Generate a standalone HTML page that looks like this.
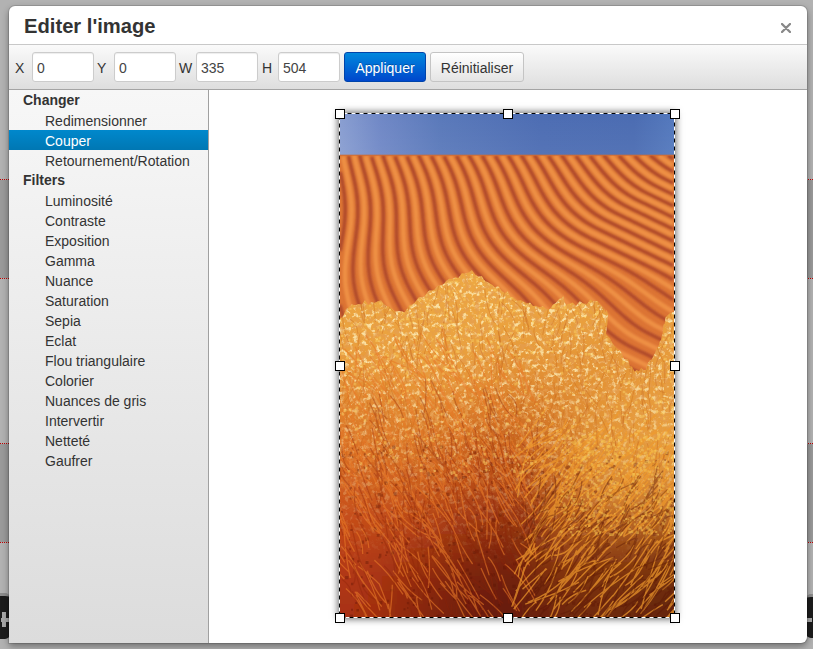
<!DOCTYPE html>
<html><head><meta charset="utf-8">
<style>
*{box-sizing:border-box;margin:0;padding:0}
html,body{width:813px;height:649px;overflow:hidden}
body{background:#b2b2b2;font-family:"Liberation Sans",sans-serif;position:relative;color:#333;-webkit-font-smoothing:antialiased}
.abs{position:absolute}
.modal{position:absolute;left:9px;top:6px;width:798px;height:637px;background:#fff;border-radius:6px 6px 6px 0;overflow:hidden;box-shadow:0 3px 7px rgba(0,0,0,0.4),0 0 0 1px rgba(0,0,0,0.12)}
.title{position:absolute;left:15px;top:8px;font-size:20.2px;font-weight:bold;color:#333;line-height:24px;letter-spacing:0}
.close{position:absolute;left:772px;top:17px;width:10px;height:10px}
.hdrline{position:absolute;left:0;top:38px;width:798px;height:1px;background:#c8c8c8}
.toolbar{position:absolute;left:0;top:39px;width:798px;height:45px;background:linear-gradient(#fafafa,#dedede);border-bottom:1px solid #a4a4a4}
.lbl{position:absolute;top:15px;font-size:14px;color:#333;line-height:16px}
.inp{position:absolute;top:7px;width:62px;height:30px;background:#fff;border:1px solid #cccccc;border-radius:3px;font-size:14px;color:#444;padding-left:4px;line-height:30px;box-shadow:inset 0 1px 1px rgba(0,0,0,0.075)}
.btn{position:absolute;top:7px;height:30px;border-radius:3px;font-size:14px;line-height:30px;text-align:center}
.bp{left:335px;width:82px;background:linear-gradient(#0088dd,#0047cc);border:1px solid #0044aa;color:#fff;text-shadow:0 -1px 0 rgba(0,0,0,0.25)}
.bd{left:421px;width:94px;background:linear-gradient(#ffffff,#e4e4e4);border:1px solid #c4c4c4;color:#333}
.side{position:absolute;left:0;top:84px;width:200px;height:553px;background:linear-gradient(#f7f7f7,#dcdcdc);border-right:1px solid #a0a0a0}
.it{position:absolute;left:0;width:199px;height:20px;font-size:14px;line-height:20px;padding-left:36px;padding-top:1px;color:#333}
.hd{position:absolute;left:14px;font-size:14px;font-weight:bold;line-height:20px;color:#333}
.sel{background:linear-gradient(#0088cc,#0077b3);color:#fff}
.crop{position:absolute;left:339px;top:113px;width:336px;height:505px;box-shadow:0 0 7px 1px rgba(0,0,0,0.6)}
.photo{position:absolute;left:340px;top:114px;width:334px;height:504px}
.photo svg{display:block}
.frame{position:absolute;left:339px;top:113px;width:336px;height:505px}
.h{position:absolute;width:10px;height:10px;background:#fff;border:1.6px solid #000}
</style></head><body>
<div class="abs" style="left:0;top:180px;width:9px;height:98px;background:#9a9a9a"></div>
<div class="abs" style="left:805px;top:180px;width:8px;height:98px;background:#9a9a9a"></div>
<div class="abs" style="left:0;top:444px;width:9px;height:98px;background:#9a9a9a"></div>
<div class="abs" style="left:805px;top:444px;width:8px;height:98px;background:#9a9a9a"></div>
<div class="abs" style="left:0;top:179px;width:9px;height:1px;border-top:1px dotted #c00000"></div>
<div class="abs" style="left:0;top:278px;width:9px;height:1px;border-top:1px dotted #c00000"></div>
<div class="abs" style="left:0;top:443px;width:9px;height:1px;border-top:1px dotted #c00000"></div>
<div class="abs" style="left:0;top:542px;width:9px;height:1px;border-top:1px dotted #c00000"></div>
<div class="abs" style="left:805px;top:179px;width:8px;height:1px;border-top:1px dotted #c00000"></div>
<div class="abs" style="left:805px;top:278px;width:8px;height:1px;border-top:1px dotted #c00000"></div>
<div class="abs" style="left:805px;top:443px;width:8px;height:1px;border-top:1px dotted #c00000"></div>
<div class="abs" style="left:805px;top:542px;width:8px;height:1px;border-top:1px dotted #c00000"></div>
<div class="abs" style="left:-30px;top:593px;width:40px;height:46px;background:#1c1c1c;border-radius:5px;border-top:3px solid #8c8c8c"></div>
<div class="abs" style="left:1px;top:618px;width:8px;height:4px;background:#a8a8a8"></div>
<div class="abs" style="left:2px;top:612px;width:4px;height:15px;background:#a8a8a8"></div>
<div class="abs" style="left:806px;top:594px;width:40px;height:44px;background:#1c1c1c;border-radius:5px;border-top:3px solid #8c8c8c"></div>
<div class="abs" style="left:806px;top:618px;width:6px;height:4px;background:#a8a8a8"></div>
<div class="modal">
  <div class="title">Editer l'image</div>
  <svg class="close" width="10" height="10" viewBox="0 0 10 10"><path d="M1 1L9 9M9 1L1 9" stroke="#888" stroke-width="2.3" stroke-linecap="round"/></svg>
  <div class="hdrline"></div>
  <div class="toolbar">
    <div class="lbl" style="left:6px">X</div>
    <div class="inp" style="left:23px">0</div>
    <div class="lbl" style="left:88px">Y</div>
    <div class="inp" style="left:105px">0</div>
    <div class="lbl" style="left:170px">W</div>
    <div class="inp" style="left:187px">335</div>
    <div class="lbl" style="left:253px">H</div>
    <div class="inp" style="left:269px">504</div>
    <div class="btn bp">Appliquer</div>
    <div class="btn bd">Réinitialiser</div>
  </div>
  <div class="side">
    <div class="hd" style="top:0px">Changer</div>
    <div class="it" style="top:20px">Redimensionner</div>
    <div class="it sel" style="top:40px">Couper</div>
    <div class="it" style="top:60px">Retournement/Rotation</div>
    <div class="hd" style="top:80px">Filters</div>
    <div class="it" style="top:100px">Luminosité</div>
    <div class="it" style="top:120px">Contraste</div>
    <div class="it" style="top:140px">Exposition</div>
    <div class="it" style="top:160px">Gamma</div>
    <div class="it" style="top:180px">Nuance</div>
    <div class="it" style="top:200px">Saturation</div>
    <div class="it" style="top:220px">Sepia</div>
    <div class="it" style="top:240px">Eclat</div>
    <div class="it" style="top:260px">Flou triangulaire</div>
    <div class="it" style="top:280px">Colorier</div>
    <div class="it" style="top:300px">Nuances de gris</div>
    <div class="it" style="top:320px">Intervertir</div>
    <div class="it" style="top:340px">Netteté</div>
    <div class="it" style="top:360px">Gaufrer</div>
  </div>
</div>
<!--PHOTO--><div class="crop"></div><div class="photo"><svg width="334" height="504" viewBox="0 0 334 504">
<defs>
<linearGradient id="sky" x1="0" y1="0" x2="1" y2="0">
<stop offset="0" stop-color="#899ed1"/><stop offset="0.12" stop-color="#7088c6"/><stop offset="0.3" stop-color="#5a79ba"/><stop offset="0.6" stop-color="#4d6db3"/><stop offset="0.88" stop-color="#4b6cb2"/><stop offset="1" stop-color="#5479bd"/></linearGradient>
<linearGradient id="skyv" x1="0" y1="0" x2="0" y2="1">
<stop offset="0" stop-color="#fff" stop-opacity="0"/><stop offset="1" stop-color="#fff" stop-opacity="0.05"/></linearGradient>
<filter id="bl" x="-5%" y="-5%" width="110%" height="110%"><feGaussianBlur stdDeviation="10"/></filter><filter id="sb"><feGaussianBlur stdDeviation="0.8"/></filter><filter id="tx1" x="0" y="0" width="100%" height="100%"><feTurbulence type="fractalNoise" baseFrequency="0.22" numOctaves="3" seed="5"/><feColorMatrix type="matrix" values="0 0 0 0 0.99  0 0 0 0 0.87  0 0 0 0 0.5  5 0 0 0 -2.55"/></filter>
<filter id="tx2" x="0" y="0" width="100%" height="100%"><feTurbulence type="fractalNoise" baseFrequency="0.2" numOctaves="3" seed="9"/><feColorMatrix type="matrix" values="0 0 0 0 0.78  0 0 0 0 0.34  0 0 0 0 0.08  5 0 0 0 -2.4"/></filter>
<linearGradient id="m1" x1="0" y1="0" x2="0" y2="1"><stop offset="0" stop-color="#fff"/><stop offset="0.5" stop-color="#fff"/><stop offset="0.75" stop-color="#fff" stop-opacity="0.3"/><stop offset="0.9" stop-color="#fff" stop-opacity="0"/></linearGradient>
<mask id="mk1"><rect width="334" height="504" fill="url(#m1)"/></mask><linearGradient id="m2" x1="0" y1="0" x2="0" y2="1"><stop offset="0" stop-color="#fff"/><stop offset="0.6" stop-color="#fff"/><stop offset="0.8" stop-color="#fff" stop-opacity="0"/></linearGradient><mask id="mk2"><rect width="334" height="504" fill="url(#m2)"/></mask>
<clipPath id="dc"><rect y="41" width="334" height="400"/></clipPath>
<clipPath id="bc"><path d="M0 504 L0 204.1 L2 203.5 L4 200.6 L6 195.2 L9 193 L12 190.2 L15.2 191.4 L18.5 189.9 L21.8 190.7 L25 186 L28.2 191.1 L31.4 188 L34.6 188.9 L37.8 187.2 L41 186.4 L43.8 189.7 L46.5 192.3 L49.2 192.7 L52 194.8 L55.3 197.8 L58.7 196.9 L62 197.6 L64.5 198.6 L67 194.9 L69.5 190.9 L72 190.7 L74.5 189 L77 185.6 L79.5 182.9 L82 183.1 L84.5 182.7 L87 179.1 L89.5 176.6 L92 176.6 L94.8 175.4 L97.5 172 L100.2 171.6 L103 170.7 L106 167.2 L109 164.7 L112 165.1 L115 163.4 L118.4 164 L121.8 159.3 L125.2 159.5 L128.6 158.5 L132 156.2 L135.2 160.7 L138.5 162.8 L141.8 162.3 L145 167.2 L147.5 168.1 L150 169.5 L152.5 170.9 L155 173.5 L158.3 171.9 L161.7 177 L165 179 L167.7 177.2 L170.3 182.6 L173 183.6 L177 186.8 L181 186.3 L184 188 L187 189.5 L190 188.6 L193 192 L196 191.8 L199.5 193.3 L203 192.2 L206.5 195.2 L210 195 L213 190.7 L216 189 L219 185 L222 183.9 L223.3 181.5 L224.7 188.4 L226 190.7 L229.3 189.8 L232.7 188.4 L236 192 L239.7 187.3 L243.3 189.6 L247 190.1 L250.5 185.4 L254 187.5 L257.3 187.2 L260.7 191.1 L264 194.4 L265.3 198.6 L266.7 195.8 L268 201.1 L267.7 206.1 L267.3 210.5 L267 211.7 L266.7 212.8 L266.3 217.5 L266 220 L268 222.3 L270 224.2 L272 228.6 L274 231.2 L276 233.2 L278 235.6 L280 236.3 L282 239.9 L284 244.9 L286 245 L288 245.4 L290 252.1 L292.2 252.8 L294.5 257.4 L296.8 256.1 L299 257.3 L301.2 253.7 L303.5 256.1 L305.8 256.1 L308 248.7 L310 246.3 L312 245.6 L314 240.7 L315.1 238.7 L316.3 235.7 L317.4 233.7 L318.6 232.3 L319.7 227.7 L320.9 226.3 L322 221.3 L322.7 219.2 L323.3 211.9 L324 209.7 L324.7 209.9 L325.3 204.4 L326 202.9 L330 198.9 L334 198 L334 504 Z"/></clipPath>
</defs>
<rect width="334" height="42" fill="url(#sky)"/><rect width="334" height="42" fill="url(#skyv)"/>
<rect y="41" width="334" height="340" fill="#dc7434"/>
<g clip-path="url(#dc)"><g filter="url(#sb)">
<path d="M6.1 399 5.8 397 5.2 394 4.9 392 4.2 389 3.8 387 3 384 2.4 382 1.9 380 1 377.1 0.3 375 M0 137 0.4 135 0.9 132 1.2 130 1.8 127 2.1 125 2.6 122 3 119.7 3.4 117 3.8 114 4.1 112 4.4 109 4.7 106 4.9 103 5 100.8 5.1 98 5.1 95 5.1 92 5 89.9 4.8 87 4.6 84 4.3 81 4 78.6 3.6 76 3.2 73 2.8 71 2.3 68 1.9 66 1.3 63 0.9 61 0.3 58 M44.1 399 43.7 397 43.1 394 42.6 392 42 389.4 41.4 387 40.8 385 40 382.5 39.2 380 38.5 378 37.8 376 37 374 36 371.5 35 369.1 34.1 367 33.2 365 32.3 363 31.4 361 30.4 359 29.5 357 28.5 355 27.5 353 26.6 351 25.6 349 24.7 347 23.7 345 22.8 343 22 341 21 338.8 20 336.3 19.1 334 18.4 332 17.7 330 17 327.8 16.2 325 15.6 323 15 320.5 14.5 318 14 315.6 13.6 313 13.2 310 13 308 12.7 305 12.5 302 12.4 299 12.4 296 12.4 293 12.5 290 12.6 287 12.7 284 12.9 281 13 278.5 13.1 276 13.3 273 13.5 270 13.6 267 13.7 264 13.8 261 13.8 258 13.7 255 13.7 252 13.5 249 13.3 246 13 243.3 12.7 241 12.3 238 12 236 11.4 233 11 230.8 10.4 228 9.9 226 9.1 223 8.6 221 8 218.8 7.2 216 6.6 214 6 212 5.1 209 4.5 207 3.9 205 3 202.1 2.4 200 1.8 198 1 195 0.5 193 0 190.8 M82.3 399 81.8 397 81 394.3 80.3 392 79.7 390 79 387.6 78.1 385 77.5 383 76.7 381 76 379 75 376.5 74 374.1 73.1 372 72.1 370 71.2 368 70.2 366 69.2 364 68.1 362 67 360 66 358.2 65 356.5 64 354.7 63 353 61.8 351 60.5 349 59.3 347 58.1 345 57 343.2 56 341.6 55 339.9 53.9 338 52.7 336 51.5 334 50.4 332 49.3 330 48.3 328 47.3 326 46.3 324 45.4 322 44.6 320 43.7 318 43 316 42 313.2 41.3 311 40.7 309 40 306.5 39.4 304 39 302 38.4 299 38 296.5 37.6 294 37.3 291 37 288 36.9 286 36.7 283 36.5 280 36.4 277 36.4 274 36.3 271 36.2 268 36.2 265 36.1 262 36 259.2 35.9 257 35.7 254 35.5 251 35.3 248 35 245.5 34.7 243 34.3 240 33.9 238 33.4 235 33 233 32.3 230 31.8 228 31 225 30.4 223 29.8 221 29 218.5 28.2 216 27.5 214 26.8 212 26 209.8 25 207.1 24.2 205 23.5 203 22.7 201 22 199 21 196.3 20.2 194 19.5 192 18.8 190 18 187.3 17.3 185 16.7 183 16 180.1 15.5 178 15 175.7 14.5 173 14 170 13.7 168 13.4 165 13.2 162 13 159 13 157 12.9 154 13 151.2 13.1 149 13.3 146 13.5 143 13.7 140 14 137.6 14.3 135 14.7 132 15 129.3 15.3 127 15.7 124 16 121.5 16.3 119 16.7 116 17 113 17.2 111 17.4 108 17.6 105 17.8 102 17.8 99 17.8 96 17.8 93 17.7 90 17.5 87 17.2 84 17 82 16.6 79 16.1 76 15.8 74 15.2 71 14.8 69 14.2 66 13.7 64 13 61 12.5 59 12 56.9 11.3 54 10.8 52 10.1 49 9.7 47 9 44 8.6 42 M122.1 399 121.2 397 120.4 395 119.7 393 118.9 391 118 388.9 117 386.4 116 384 115.2 382 114.3 380 113.4 378 112.5 376 111.6 374 110.6 372 109.6 370 108.6 368 107.5 366 106.4 364 105.2 362 104 360 103 358.3 102 356.7 100.9 355 99.5 353 98.2 351 97 349.4 96 348 94.6 346 93.1 344 92 342.5 90.9 341 89.3 339 88 337.2 87 335.9 85.6 334 84.1 332 83 330.6 81.9 329 80.4 327 79 325 78 323.5 77 322 75.7 320 74.5 318 73.3 316 72.1 314 71.1 312 70 310 69.1 308 68.1 306 67.3 304 66.5 302 65.7 300 65 297.9 64.1 295 63.5 293 63 291 62.2 288 61.8 286 61.2 283 60.9 281 60.4 278 60 275 59.8 273 59.4 270 59.1 267 58.9 265 58.6 262 58.4 259 58.1 256 57.9 254 57.5 251 57.1 248 56.9 246 56.4 243 56 240.5 55.5 238 55 235.4 54.5 233 54 231 53.2 228 52.6 226 52 224 51 221 50.3 219 49.6 217 48.9 215 48 212.7 47 210.3 46.1 208 45.2 206 44.3 204 43.4 202 42.6 200 41.7 198 40.8 196 39.9 194 39 191.9 38 189.5 37 187.1 36.2 185 35.4 183 34.6 181 33.9 179 33 176.1 32.3 174 31.8 172 31 169 30.5 167 30 164.4 29.6 162 29.1 159 28.9 157 28.6 154 28.3 151 28.2 148 28.2 145 28.2 142 28.2 139 28.3 136 28.5 133 28.7 130 28.9 127 29.1 125 29.3 122 29.6 119 29.8 116 30 113.6 30.2 111 30.3 108 30.5 105 30.6 102 30.6 99 30.6 96 30.5 93 30.3 90 30.1 87 29.9 85 29.5 82 29.1 79 28.7 77 28.2 74 27.8 72 27.1 69 26.7 67 26 64.3 25.4 62 24.9 60 24 57 23.5 55 22.9 53 22.1 50 21.5 48 21 46 20.2 43 19.6 41 M165.3 399 164 397.1 163 395.5 162 393.8 160.9 392 159.8 390 158.6 388 157.5 386 156.4 384 155.3 382 154.2 380 153.2 378 152.1 376 151 374.1 150 372.3 149 370.5 148 368.8 146.9 367 145.7 365 144.5 363 143.2 361 142 359.2 141 357.7 139.8 356 138.4 354 137 352.1 136 350.7 134.6 349 133.1 347 132 345.7 130.6 344 129 342.1 128 341 126.3 339 125 337.6 123.6 336 122 334.3 120.9 333 119 331 118 329.9 116.2 328 115 326.6 113.5 325 112 323.3 110.8 322 109 320 108 318.8 106.5 317 105 315.2 104 314 102.5 312 101 310.1 100 308.7 98.8 307 97.5 305 96.2 303 95 301.1 94 299.3 93 297.5 92 295.6 91 293.5 90 291.4 89 289 88.2 287 87.5 285 86.8 283 86 280.6 85.2 278 84.7 276 84 273.2 83.5 271 83 268.8 82.4 266 82 263.7 81.5 261 81 258 80.7 256 80.1 253 79.8 251 79.3 248 78.9 246 78.3 243 77.9 241 77.3 238 76.8 236 76.1 233 75.6 231 75 229 74.1 226 73.4 224 72.8 222 72 219.9 71 217.3 70.1 215 69.3 213 68.4 211 67.5 209 66.6 207 65.6 205 64.6 203 63.6 201 62.6 199 61.6 197 60.5 195 59.5 193 58.5 191 57.5 189 56.4 187 55.5 185 54.5 183 53.5 181 52.6 179 51.7 177 50.9 175 50 172.8 49 170.2 48.2 168 47.6 166 46.9 164 46.1 161 45.6 159 45 156.3 44.5 154 44 151 43.7 149 43.4 146 43.1 143 43 141 42.8 138 42.7 135 42.7 132 42.7 129 42.8 126 42.9 123 43 120 43 118 43.1 115 43.2 112 43.3 109 43.4 106 43.4 103 43.4 100 43.3 97 43.2 94 43 91 42.9 89 42.6 86 42.2 83 41.9 81 41.4 78 41 75.7 40.5 73 40 71 39.3 68 38.8 66 38 63.2 37.4 61 36.8 59 36 56.5 35.2 54 34.6 52 33.9 50 33 47.2 32.3 45 31.7 43 M215.6 399 214 397.6 212.2 396 211 394.8 209.2 393 208 391.8 206.3 390 205 388.5 203.7 387 202 385 201 383.8 199.6 382 198 380 197 378.6 195.8 377 194.3 375 193 373.2 192 371.8 190.7 370 189.3 368 188 366.2 187 364.8 185.7 363 184.3 361 183 359.3 182 357.9 180.5 356 179 354 178 352.8 176.6 351 175 349.1 174 347.9 172.3 346 171 344.5 169.6 343 168 341.3 166.8 340 165 338.2 163.8 337 162 335.2 160.8 334 159 332.3 157.6 331 156 329.5 154.3 328 153 326.8 151 325 149.9 324 148 322.3 146.5 321 145 319.6 143.2 318 142 316.9 140 315.1 138.8 314 137 312.3 135.7 311 134 309.4 132.6 308 131 306.3 129.7 305 128 303.1 127 302 125.3 300 124 298.4 122.9 297 121.3 295 120 293.2 119 291.7 117.9 290 116.6 288 115.4 286 114.3 284 113.2 282 112.3 280 111.3 278 110.4 276 109.6 274 108.8 272 108 269.7 107.1 267 106.4 265 105.8 263 105 260.1 104.4 258 103.9 256 103.1 253 102.7 251 102 248.3 101.4 246 100.9 244 100.2 241 99.7 239 99 236.5 98.3 234 97.7 232 97 229.6 96.2 227 95.5 225 94.8 223 94 220.9 93 218.4 92 216 91.1 214 90.2 212 89.3 210 88.3 208 87.3 206 86.3 204 85.2 202 84.1 200 83 198.1 82 196.4 81 194.6 80 192.9 78.9 191 77.7 189 76.5 187 75.3 185 74.1 183 73 181 72 179.3 71 177.4 70 175.6 69 173.7 68 171.7 67 169.7 66 167.5 65 165.2 64.1 163 63.3 161 62.6 159 61.9 157 61 154.1 60.4 152 59.9 150 59.2 147 58.8 145 58.3 142 58 140 57.6 137 57.3 134 57.1 131 56.9 129 56.8 126 56.7 123 56.6 120 56.6 117 56.5 114 56.5 111 56.5 108 56.4 105 56.4 102 56.3 99 56.1 96 56 94 55.8 91 55.5 88 55.1 85 54.8 83 54.4 80 54 78 53.4 75 53 73 52.2 70 51.7 68 51 65.4 50.3 63 49.7 61 49 59 48 56 47.3 54 46.6 52 45.9 50 45 47.6 44.1 45 43.4 43 42.6 41 M283.8 399 281.7 398 279.7 397 277.6 396 275.6 395 273.5 394 271.5 393 269.4 392 267.4 391 265.4 390 263.5 389 261.8 388 260 387 258 385.7 256 384.4 254 383 252.6 382 251 380.8 249 379.3 247.4 378 246 376.8 244 375.1 242.8 374 241 372.3 239.6 371 238 369.4 236.6 368 235 366.4 233.7 365 232 363.2 230.9 362 229 360 228 358.9 226.3 357 225 355.6 223.5 354 222 352.4 220.7 351 219 349.1 217.9 348 216 346 215 345 213 343 212 342 210 340 208.9 339 207 337.2 205.7 336 204 334.5 202.3 333 201 331.9 199 330.2 197.6 329 196 327.7 194 326.1 192.6 325 191 323.8 189 322.2 187.4 321 186 320 184 318.5 182 317 180.6 316 179 314.8 177 313.4 175.1 312 173.8 311 172 309.7 170 308.2 168.4 307 167 305.9 165 304.4 163.3 303 162 302 160 300.3 158.4 299 157 297.8 155 296 154 295 152 293.1 150.9 292 149 290.1 148 289 146.2 287 145 285.6 143.7 284 142.1 282 141 280.5 140 279 138.6 277 137.3 275 136.1 273 135 271 134 269.2 133 267.2 132 265.1 131 263 130.2 261 129.3 259 128.5 257 127.8 255 127 252.8 126 250 125.3 248 124.7 246 124 243.9 123.1 241 122.4 239 121.8 237 121 234.7 120.1 232 119.4 230 118.7 228 118 226 117 223.4 116 221 115.2 219 114.4 217 113.5 215 112.5 213 111.5 211 110.5 209 109.5 207 108.4 205 107.3 203 106.1 201 105 199.2 104 197.5 103 195.9 101.8 194 100.5 192 99.1 190 98 188.3 97 186.8 95.8 185 94.4 183 93.1 181 92 179.4 91 177.8 89.8 176 88.5 174 87.3 172 86 170 85 168.2 84 166.5 83 164.7 82 162.8 81 160.8 80 158.7 79 156.5 78 154.2 77.1 152 76.4 150 75.7 148 75 145.7 74.2 143 73.7 141 73 138 72.6 136 72.1 133 71.7 131 71.3 128 71 125.1 70.8 123 70.5 120 70.3 117 70.1 114 70 111.6 69.9 109 69.7 106 69.5 103 69.3 100 69.1 97 69 95 68.7 92 68.4 89 68 86.1 67.7 84 67.2 81 66.8 79 66.2 76 65.8 74 65.1 71 64.5 69 64 67 63 64 62.4 62 61.7 60 61 57.9 60 55.2 59.2 53 58.4 51 57.6 49 56.8 47 56 45 55 42.5 M333 385.6 331 384.6 329 383.7 327 382.7 325 381.7 323 380.7 321 379.8 319 378.8 317 377.8 315 376.8 313 375.9 311 374.9 309 373.9 307 372.9 305 372 303 371 301 370 298.9 369 297 368 295 366.9 293 365.8 291 364.6 289 363.3 287 362.1 285.4 361 284 360 282 358.6 280 357.1 278.5 356 277 354.9 275 353.3 273.4 352 272 350.9 270 349.2 268.5 348 267 346.7 265 345 263.8 344 262 342.5 260.2 341 259 340 257 338.3 255.4 337 254 335.9 252 334.3 250.4 333 249 331.9 247 330.4 245.2 329 243.9 328 242 326.6 240 325.2 238.3 324 236.9 323 235 321.7 233 320.4 231 319.1 229.3 318 227.8 317 226 315.9 224 314.6 222 313.4 220 312.2 218 311 216.3 310 214.6 309 212.9 308 211 306.9 209 305.7 207 304.5 205 303.4 203 302.2 201 301 199.4 300 197.7 299 196 297.9 194 296.7 192 295.4 190 294.1 188.4 293 187 292 185 290.6 183 289.2 181.5 288 180 286.9 178 285.3 176.5 284 175 282.7 173.1 281 172 280 170 278 169 277 167.1 275 166 273.7 164.5 272 163 270.1 162 268.8 160.7 267 159.3 265 158 263.1 157 261.5 156 259.9 154.9 258 153.8 256 152.8 254 151.8 252 150.8 250 149.9 248 149 246 148 243.7 147 241.3 146 239 145.2 237 144.4 235 143.6 233 142.8 231 142 229 141 226.6 140 224.2 139.1 222 138.2 220 137.3 218 136.3 216 135.3 214 134.3 212 133.3 210 132.2 208 131.1 206 130 204.1 129 202.4 128 200.8 126.8 199 125.5 197 124.2 195 123 193.3 122 191.8 120.7 190 119.2 188 118 186.4 117 185 115.5 183 114 181.1 113 179.7 111.7 178 110.2 176 109 174.5 107.9 173 106.4 171 105 169 104 167.6 102.9 166 101.5 164 100.2 162 99 160 98 158.4 97 156.7 96 154.9 95 153 94 151 93 148.9 92 146.6 91 144.2 90.1 142 89.4 140 88.8 138 88 135.4 87.4 133 86.9 131 86.2 128 85.8 126 85.2 123 84.9 121 84.5 118 84.1 115 83.9 113 83.6 110 83.3 107 83 104.4 82.8 102 82.5 99 82.2 96 81.9 94 81.6 91 81.2 88 80.9 86 80.4 83 80 81 79.4 78 79 76 78.2 73 77.7 71 77 68.5 76.3 66 75.6 64 74.9 62 74 59.4 73.1 57 72.3 55 71.5 53 70.7 51 69.8 49 69 47 68 44.8 67 42.5 M333 347.7 331 346.8 329 345.8 327 344.8 325 343.7 323 342.7 321 341.5 319 340.4 317 339.2 315 338.1 313.3 337 311.6 336 310 335 308 333.8 306 332.5 304 331.2 302 330 300.5 329 298.9 328 297 326.8 295 325.6 293 324.3 291 323.1 289.2 322 287.5 321 285.8 320 284 318.9 282 317.8 280 316.6 278 315.5 276 314.4 274 313.3 272 312.3 270 311.2 268 310.2 266 309.2 264 308.2 262 307.2 260 306.2 258 305.3 256 304.3 254 303.3 252 302.3 250 301.4 248 300.4 246 299.4 244 298.4 242 297.5 240 296.5 238 295.5 236 294.5 234 293.6 232 292.6 230 291.6 228 290.6 226 289.7 224 288.7 222 287.7 220 286.6 218 285.6 216 284.5 214 283.3 212 282.2 210 281 208.4 280 206.9 279 205 277.8 203 276.4 201.1 275 199.7 274 198 272.7 196 271 194.8 270 193 268.4 191.5 267 190 265.6 188.4 264 187 262.5 185.7 261 184 259.1 183 257.8 181.6 256 180.1 254 179 252.5 178 251 176.7 249 175.4 247 174.2 245 173.1 243 172 241 171 239.2 170 237.3 169 235.3 168 233.3 167 231.3 166 229.2 165 227.2 164 225.1 163 223.1 162 221.1 161 219.1 160 217.1 159 215.2 158 213.3 157 211.4 156 209.7 155 207.9 153.9 206 152.7 204 151.4 202 150.1 200 149 198.4 148 196.9 146.7 195 145.2 193 144 191.4 142.9 190 141.4 188 140 186.3 139 185 137.3 183 136 181.4 134.8 180 133.1 178 132 176.7 130.5 175 129 173.2 128 172 126.3 170 125 168.5 123.8 167 122.1 165 121 163.6 119.7 162 118.2 160 117 158.4 116 157 114.6 155 113.3 153 112 151 111 149.4 110 147.7 109 145.9 108 144 107 142 106 140 105 137.7 104 135.3 103.1 133 102.4 131 101.8 129 101 126.3 100.4 124 99.9 122 99.2 119 98.8 117 98.2 114 97.8 112 97.3 109 97 106.9 96.6 104 96.1 101 95.9 99 95.4 96 95 93 94.7 91 94.2 88 93.9 86 93.3 83 92.9 81 92.3 78 91.8 76 91 73 90.5 71 89.9 69 89 66.1 88.3 64 87.6 62 86.9 60 86 57.8 85 55.3 84 53 83.1 51 82.2 49 81.3 47 80.4 45 79.4 43 78.4 41 M333 319.1 331 318.1 329 317.1 327 316.1 325 315.2 323 314.2 321 313.2 319 312.2 317 311.3 315 310.3 313 309.3 311 308.3 309 307.4 307 306.4 305 305.4 303 304.4 301 303.5 299 302.5 297 301.5 295 300.5 293 299.6 291 298.6 289 297.6 287 296.6 285 295.6 283 294.7 281 293.7 279 292.7 277 291.7 275 290.8 273 289.8 271 288.8 269 287.8 267 286.9 265 285.9 263 284.9 261 283.9 259 283 257 282 255 281 252.9 280 250.9 279 248.8 278 246.8 277 244.7 276 242.7 275 240.6 274 238.6 273 236.5 272 234.6 271 232.7 270 230.9 269 229 267.9 227 266.7 225 265.5 223 264.1 221.3 263 219.9 262 218 260.5 216 259 214.8 258 213 256.4 211.4 255 210 253.6 208.3 252 207 250.6 205.5 249 204 247.3 202.9 246 201.3 244 200 242.3 199 241 197.6 239 196.2 237 195 235.2 194 233.7 192.9 232 191.7 230 190.5 228 189.3 226 188.1 224 187 222 186 220.3 185 218.6 184 216.8 182.9 215 181.7 213 180.6 211 179.3 209 178.1 207 177 205.3 176 203.7 174.8 202 173.5 200 172.1 198 171 196.5 169.9 195 168.4 193 167 191.3 166 190 164.3 188 163 186.4 161.8 185 160 183 159 181.8 157.3 180 156 178.6 154.5 177 153 175.4 151.7 174 150 172.2 148.8 171 147 169.1 145.9 168 144 166 143 164.9 141.2 163 140 161.7 138.4 160 137 158.4 135.8 157 134.1 155 133 153.7 131.6 152 130.1 150 129 148.6 127.9 147 126.5 145 125.1 143 124 141.2 123 139.5 122 137.7 121 135.9 120 133.9 119 131.8 118 129.6 117 127.2 116.2 125 115.4 123 114.8 121 114 118.6 113.3 116 112.7 114 112 111 111.5 109 111 106.6 110.5 104 110 101.6 109.5 99 109 96.3 108.6 94 108 91 107.6 89 107 86 106.6 84 106 81.2 105.5 79 105 77 104.2 74 103.7 72 103 69.8 102.1 67 101.4 65 100.7 63 100 61 99 58.5 98 56.1 97.1 54 96.2 52 95.3 50 94.3 48 93.3 46 92.3 44 91.3 42 M333 297 331 296 328.9 295 326.9 294 324.8 293 322.8 292 320.7 291 318.7 290 316.6 289 314.6 288 312.5 287 310.5 286 308.4 285 306.4 284 304.3 283 302.3 282 300.2 281 298.2 280 296.1 279 294.1 278 292 277 290 276 288 275 286 274.1 284 273.1 282 272.1 280 271.1 278 270.2 276 269.2 274 268.2 272 267.2 270 266.3 268 265.3 266 264.3 264 263.3 262 262.4 260 261.4 258 260.4 256 259.4 254 258.5 252 257.4 250 256.4 248 255.2 246 254.1 244.3 253 242.7 252 241 250.8 239 249.4 237.1 248 235.8 247 234 245.5 232.2 244 231 242.9 229 241 227.9 240 226 238 225 237 223.2 235 222 233.6 220.7 232 219 230 218 228.7 216.7 227 215.2 225 214 223.3 213 221.9 211.7 220 210.3 218 209 216.1 208 214.6 206.9 213 205.5 211 204.2 209 203 207.3 202 205.8 200.7 204 199.3 202 198 200.2 197 198.9 195.6 197 194 195 193 193.7 191.6 192 190 190 189 188.9 187.4 187 186 185.5 184.7 184 183 182.2 181.8 181 180 179.1 178.9 178 177 176.1 175.8 175 174 173.2 172.7 172 171 170.4 169.5 169 168 167.6 166.3 166 165 164.8 163 163 162 162 160 160.2 158.8 159 157 157.3 155.7 156 154 154.3 152.7 153 151 151.3 149.8 150 148 148 147 146.9 145.4 145 144 143.3 142.9 142 141.4 140 140 138.1 139 136.6 137.9 135 136.6 133 135.5 131 134.3 129 133.3 127 132.3 125 131.3 123 130.4 121 129.6 119 128.8 117 128 114.8 127.1 112 126.4 110 125.8 108 125 105.1 124.4 103 123.9 101 123.2 98 122.7 96 122 93 121.6 91 121 88.6 120.4 86 119.9 84 119.2 81 118.7 79 118 76.5 117.3 74 116.7 72 116 69.8 115.1 67 114.4 65 113.6 63 112.9 61 112 58.9 111 56.5 110 54.3 109 52.1 108 50.1 107 48.1 106 46.1 105 44.2 104 42.4 M333 275.2 331 274.2 329 273.2 327 272.2 325 271.3 323 270.3 321 269.3 319 268.3 317 267.4 315 266.4 313 265.4 311 264.4 309 263.5 307 262.5 305 261.5 303 260.5 301 259.6 299 258.6 297 257.6 295 256.6 293 255.7 291 254.7 289 253.7 287 252.7 285 251.8 283 250.8 281 249.8 279 248.8 277 247.9 275 246.9 273 245.9 271 244.9 269 243.9 267 242.7 265 241.6 263 240.3 261 239 259.5 238 258 236.9 256 235.4 254.2 234 252.9 233 251 231.3 249.5 230 248 228.6 246.3 227 245 225.7 243.4 224 242 222.5 240.6 221 239 219.2 238 218 236.3 216 235 214.4 233.8 213 232.2 211 231 209.5 229.8 208 228.3 206 227 204.4 225.9 203 224.3 201 223 199.4 221.9 198 220.2 196 219 194.5 217.7 193 216 191 215 189.9 213.3 188 212 186.6 210.5 185 209 183.4 207.6 182 206 180.4 204.5 179 203 177.5 201.4 176 200 174.8 198.1 173 196.9 172 195 170.3 193.5 169 192 167.8 190 166.1 188.7 165 187 163.6 185.1 162 183.9 161 182 159.5 180.2 158 179 157 177 155.3 175.5 154 174 152.8 172 151 170.9 150 169 148.3 167.6 147 166 145.5 164.4 144 163 142.5 161.5 141 160 139.4 158.8 138 157 136 156 134.7 154.6 133 153.1 131 152 129.5 151 128 149.7 126 148.4 124 147.3 122 146.2 120 145.1 118 144.1 116 143.2 114 142.3 112 141.5 110 140.7 108 140 106 139 103.1 138.3 101 137.7 99 137 96.7 136.2 94 135.6 92 135 89.7 134.2 87 133.7 85 133 82.5 132.3 80 131.7 78 131 75.6 130.2 73 129.5 71 128.9 69 128 66.6 127 64 126.3 62 125.4 60 124.6 58 123.7 56 122.8 54 121.8 52 120.8 50 119.8 48 118.7 46 117.6 44 116.4 42 M333 253.4 331 252.4 329 251.4 327 250.5 325 249.5 323 248.5 321 247.5 319 246.5 317 245.6 315 244.6 313 243.6 311 242.6 309 241.7 307 240.7 305 239.7 303 238.7 301 237.8 299 236.8 297 235.8 295 234.8 293 233.9 291 232.9 289 231.9 287 230.8 285 229.6 283 228.4 281 227.2 279.2 226 277.8 225 276 223.7 274 222.2 272.5 221 271 219.8 269 218.1 267.8 217 266 215.4 264.5 214 263 212.6 261.4 211 260 209.6 258.5 208 257 206.5 255.6 205 254 203.3 252.8 202 251 200 250 198.9 248.3 197 247 195.6 245.5 194 244 192.4 242.7 191 241 189.2 239.8 188 238 186.2 236.9 185 235 183.2 233.8 182 232 180.3 230.6 179 229 177.6 227.3 176 226 174.9 224 173.2 222.6 172 221 170.7 219 169.1 217.6 168 216 166.7 214 165.2 212.5 164 211 162.9 209 161.4 207.1 160 205.7 159 204 157.7 202 156.3 200.2 155 198.9 154 197 152.6 195 151.1 193.5 150 192 148.9 190 147.3 188.3 146 187 145 185 143.4 183.4 142 182 140.8 180 139.1 178.8 138 177 136.3 175.6 135 174 133.4 172.7 132 171 130.2 170 129 168.3 127 167 125.4 165.9 124 164.4 122 163 120 162 118.4 161 116.9 159.9 115 158.7 113 157.7 111 156.7 109 155.7 107 154.8 105 153.9 103 153 100.8 152 98.2 151.2 96 150.5 94 149.8 92 149 89.7 148.1 87 147.5 85 146.8 83 146 80.4 145.2 78 144.5 76 143.9 74 143 71.5 142.1 69 141.4 67 140.6 65 139.8 63 139 61 138 58.8 137 56.6 136 54.4 135 52.4 134 50.5 133 48.6 132 46.8 131 45 129.8 43 128.6 41 M333 231.4 331 230.4 329 229.5 327 228.5 325 227.5 323 226.5 321 225.6 319 224.6 317 223.6 315 222.6 313 221.7 311 220.7 309 219.7 307 218.6 305 217.5 303 216.4 301 215.1 299.2 214 297.7 213 296 211.8 294 210.4 292.1 209 290.8 208 289 206.5 287.1 205 285.9 204 284 202.4 282.4 201 281 199.7 279.1 198 278 197 276 195.1 274.8 194 273 192.3 271.6 191 270 189.5 268.4 188 267 186.7 265.1 185 264 184 262 182.2 260.7 181 259 179.5 257.3 178 256 176.9 254 175.2 252.5 174 251 172.8 249 171.2 247.4 170 246 168.9 244 167.4 242.1 166 240.7 165 239 163.8 237 162.4 235 161 233.5 160 232 159 230 157.7 228 156.4 226 155.1 224.3 154 222.8 153 221 151.9 219 150.6 217 149.3 215 148 213.5 147 211.9 146 210 144.7 208 143.4 206 142 204.6 141 203 139.9 201 138.4 199.1 137 197.8 136 196 134.6 194 133 192.8 132 191 130.4 189.5 129 188 127.6 186.3 126 185 124.7 183.4 123 182 121.4 180.8 120 179.1 118 178 116.6 176.8 115 175.4 113 174.1 111 173 109.3 172 107.7 171 106 169.9 104 168.9 102 167.9 100 166.9 98 166 96 165 93.7 164 91.3 163.1 89 162.3 87 161.5 85 160.8 83 160 80.9 159 78.2 158.2 76 157.4 74 156.7 72 155.9 70 155 67.7 154 65.2 153.1 63 152.2 61 151.3 59 150.4 57 149.4 55 148.4 53 147.4 51 146.3 49 145.2 47 144 45 143 43.3 142 41.7 M333 209.1 331 208.2 329 207.2 327 206.2 325 205.1 323 204 321.3 203 319.7 202 318 201 316 199.7 314 198.3 312.1 197 310.6 196 309 194.8 307 193.3 305.2 192 303.9 191 302 189.5 300.1 188 298.8 187 297 185.6 295.1 184 293.8 183 292 181.6 290 180 288.8 179 287 177.6 285 176 283.7 175 282 173.7 280 172.2 278.3 171 277 170 275 168.6 273 167.2 271.3 166 269.8 165 268 163.8 266 162.5 264 161.2 262.2 160 260.5 159 258.9 158 257 156.8 255 155.6 253 154.5 251 153.3 249 152.2 247 151 245.2 150 243.4 149 241.7 148 239.9 147 238 146 236 144.8 234 143.7 232 142.6 230 141.4 228 140.3 226 139.1 224.2 138 222.6 137 220.9 136 219 134.8 217 133.5 215 132.1 213.3 131 211.9 130 210 128.6 208 127.1 206.6 126 205 124.7 203 123 201.8 122 200 120.3 198.6 119 197 117.4 195.6 116 194 114.2 192.9 113 191.2 111 190 109.4 188.9 108 187.4 106 186.1 104 185 102.4 184 100.8 182.9 99 181.8 97 180.7 95 179.7 93 178.7 91 177.7 89 176.8 87 175.9 85 175 83 174 80.7 173 78.3 172 76 171.2 74 170.4 72 169.5 70 168.7 68 167.8 66 166.9 64 166 61.9 165 59.8 164 57.7 163 55.7 162 53.7 161 51.8 160 50 158.9 48 157.7 46 156.5 44 155.2 42 M333 185.5 331 184.2 329.1 183 327.6 182 326 181 324 179.6 322 178.3 320.1 177 318.6 176 317 174.9 315 173.6 313 172.2 311.1 171 309.6 170 308 168.9 306 167.6 304 166.3 302 165 300.3 164 298.7 163 297 161.9 295 160.7 293 159.6 291 158.4 289 157.3 287 156.1 285 155 283.1 154 281.2 153 279.3 152 277.4 151 275.4 150 273.4 149 271.4 148 269.4 147 267.4 146 265.3 145 263.3 144 261.2 143 259.2 142 257.1 141 255.1 140 253 139 251 138 249 137 247 136 245 135 243.1 134 241.1 133 239.3 132 237.4 131 235.6 130 233.9 129 232 127.9 230 126.7 228 125.5 226 124.2 224.3 123 222.8 122 221 120.7 219 119.2 217.4 118 216 116.9 214 115.2 212.7 114 211 112.5 209.4 111 208 109.5 206.5 108 205 106.3 203.9 105 202.2 103 201 101.5 199.9 100 198.4 98 197.1 96 196 94.3 195 92.7 194 91 192.8 89 191.7 87 190.6 85 189.6 83 188.6 81 187.6 79 186.6 77 185.7 75 184.8 73 183.8 71 182.9 69 182 67 181 65 180 62.9 179 60.8 178 58.8 177 56.9 176 55 174.9 53 173.8 51 172.7 49 171.5 47 170.3 45 169 43 168 41.5 M333 165.7 331 164.6 329 163.5 327 162.3 325 161.2 323 160.1 321 159 319.1 158 317.2 157 315.3 156 313.4 155 311.4 154 309.4 153 307.4 152 305.4 151 303.3 150 301.3 149 299.2 148 297.2 147 295.1 146 293.1 145 291 144 289 143 287 142 285 141.1 283 140.1 281 139.1 279 138.1 277 137.2 275 136.2 273 135.2 271 134.2 269 133.3 267 132.3 265 131.3 263 130.3 261 129.4 259 128.4 257 127.4 255 126.4 253 125.5 251 124.5 249 123.5 247 122.4 245 121.3 243 120.2 241 119.1 239.2 118 237.6 117 236 115.9 234 114.6 232 113.2 230.4 112 229 111 227 109.4 225.3 108 224 106.8 222 105 220.9 104 219 102.1 218 101 216.2 99 215 97.7 213.6 96 212 94 211 92.6 209.8 91 208.4 89 207.1 87 206 85.3 205 83.7 204 82 202.8 80 201.7 78 200.6 76 199.5 74 198.5 72 197.4 70 196.4 68 195.4 66 194.3 64 193.3 62 192.2 60 191.2 58 190.1 56 189 54.1 188 52.3 187 50.6 186 48.9 184.8 47 183.6 45 182.3 43 181 41.1 M333 151.6 331 150.6 329 149.7 327 148.7 325 147.7 323 146.7 321 145.8 319 144.8 317 143.8 315 142.8 313 141.9 311 140.9 309 139.9 307 138.9 305 138 303 137 301 136 298.9 135 296.9 134 294.8 133 292.8 132 290.7 131 288.7 130 286.6 129 284.6 128 282.5 127 280.5 126 278.4 125 276.4 124 274.3 123 272.3 122 270.2 121 268.2 120 266.1 119 264.1 118 262 117 260 116 258 115 256 114 254.2 113 252.4 112 250.7 111 249 110 247 108.7 245 107.4 243 106 241.6 105 240 103.8 238 102.2 236.5 101 235 99.7 233.1 98 232 96.9 230.1 95 229 93.9 227.3 92 226 90.6 224.7 89 223.1 87 222 85.6 220.8 84 219.4 82 218 80 217 78.5 216 76.9 214.8 75 213.6 73 212.4 71 211.2 69 210.1 67 209 65.1 208 63.4 207 61.6 206 59.9 204.9 58 203.8 56 202.6 54 201.4 52 200.2 50 199 48.1 198 46.6 197 45 195.6 43 194.3 41 M333 139.2 331 138.2 329 137.2 327 136.2 325 135.3 323 134.3 321 133.3 319 132.3 317 131.4 315 130.4 313 129.4 311 128.4 309 127.5 307 126.5 305 125.5 303 124.5 301 123.6 299 122.6 297 121.6 295 120.6 293 119.6 291 118.7 289 117.7 287 116.7 285 115.7 283 114.8 281 113.8 279 112.8 277 111.8 275 110.9 273 109.9 271 108.9 269 107.9 267 106.9 265 105.9 263 104.8 261 103.6 259 102.4 257 101.2 255.2 100 253.8 99 252 97.7 250 96.2 248.5 95 247 93.7 245 92 243.9 91 242 89.2 240.8 88 239 86.1 238 85 236.3 83 235 81.5 233.8 80 232.2 78 231 76.4 230 75 228.6 73 227.2 71 226 69.2 225 67.6 223.9 66 222.7 64 221.4 62 220.2 60 219 58.1 218 56.5 217 54.9 215.8 53 214.5 51 213.2 49 212 47.2 211 45.7 209.8 44 208.4 42 M333 127 331 126 329 125.1 327 124.1 325 123.1 323 122.1 321 121.2 319 120.2 317 119.2 315 118.2 313 117.2 311 116.3 309 115.3 307 114.3 305 113.3 303 112.4 301 111.4 299 110.4 297 109.4 295 108.5 293 107.5 291 106.5 289 105.5 287 104.6 285 103.6 283 102.6 281 101.6 279 100.7 277 99.7 275 98.6 273 97.5 271 96.4 269 95.2 267.2 94 265.7 93 264 91.8 262 90.4 260.2 89 259 88 257 86.3 255.5 85 254 83.6 252.3 82 251 80.7 249.4 79 248 77.5 246.7 76 245 74 244 72.8 242.6 71 241 69 240 67.6 238.8 66 237.4 64 236 62.1 235 60.6 233.9 59 232.5 57 231.1 55 230 53.3 229 51.8 227.7 50 226.3 48 225 46.1 224 44.7 222.8 43 221.3 41 M333 115.1 331 114.1 329 113.1 327 112.2 325 111.2 323 110.2 321 109.2 319 108.3 317 107.3 315 106.3 313 105.3 311 104.4 309 103.4 307 102.4 305 101.4 303 100.5 301 99.5 299 98.5 297 97.5 295 96.6 293 95.6 291 94.6 289 93.6 287 92.6 285 91.6 283 90.5 281 89.3 279 88.1 277.3 87 275.8 86 274 84.8 272 83.3 270.3 82 269 80.9 267 79.2 265.6 78 264 76.5 262.4 75 261 73.6 259.5 72 258 70.4 256.7 69 255 67 254 65.8 252.5 64 251 62.1 250 60.8 248.6 59 247.1 57 246 55.6 244.8 54 243.4 52 242 50.2 241 48.8 239.7 47 238.2 45 237 43.5 235.9 42 M333 103.4 331 102.4 329 101.5 327 100.5 325 99.5 323 98.5 321 97.5 319 96.6 317 95.6 315 94.6 313 93.6 311 92.7 309 91.7 307 90.7 305 89.7 303 88.8 301 87.8 299 86.8 297 85.8 295 84.8 293 83.7 291 82.5 289 81.3 287 80 285.5 79 284 77.9 282 76.4 280.2 75 278.9 74 277 72.4 275.4 71 274 69.7 272.2 68 271 66.8 269.3 65 268 63.7 266.5 62 265 60.4 263.8 59 262.1 57 261 55.7 259.6 54 258 52 257 50.8 255.6 49 254 47.1 253 45.8 251.6 44 250 42.1 M333 91.9 331 90.9 329 89.9 327 88.9 325 88 323 87 321 86 318.9 85 316.9 84 314.8 83 312.8 82 310.7 81 308.7 80 306.7 79 304.8 78 303 77 301 75.9 299 74.6 297 73.3 295 72 293.6 71 292 69.8 290 68.2 288.5 67 287 65.8 285 64 283.9 63 282 61.2 280.7 60 279 58.3 277.8 57 276 55.2 274.9 54 273.1 52 272 50.8 270.4 49 269 47.4 267.8 46 266.1 44 265 42.8 263.5 41 M333 80.5 331 79.5 329 78.5 327 77.5 325 76.6 323 75.6 321 74.6 319 73.6 317 72.7 315 71.6 313 70.5 311 69.3 309 68.1 307.3 67 305.8 66 304 64.8 302 63.3 300.3 62 299 61 297 59.4 295.4 58 294 56.8 292.1 55 291 54 289 52.1 287.9 51 286 49.1 284.9 48 283 46 282 45 280.1 43 279 41.8 M333 69.2 331 68.2 329 67.2 327 66.2 325 65.2 323 64.1 321.1 63 319.5 62 317.9 61 316 59.8 314 58.4 312 57 310.7 56 309 54.7 307 53.1 305.7 52 304 50.6 302.2 49 301 48 299 46.1 297.8 45 296 43.3 294.6 42 M333 57.7 331 56.5 329 55.3 327 54.1 325.3 53 323.9 52 322 50.7 320 49.2 318.4 48 317 46.9 315 45.4 313.3 44 312 42.9 310 41.2 M333 45.1 331.4 44 330 43 328 41.5" fill="none" stroke="#a8422a" stroke-width="3.6" opacity="0.85"/>
<path d="M0 292.7 0.2 290 0.5 287 0.8 284 1 281.7 1.3 279 1.5 276 1.8 273 2 270.8 2.2 268 2.4 265 2.5 262 2.6 259 2.7 256 2.6 253 2.5 250 2.3 247 2.1 244 1.9 242 1.5 239 1.1 236 0.8 234 0.2 231 M25.2 399 24.8 397 24.3 394 23.8 392 23.1 389 22.6 387 22 384.6 21.2 382 20.6 380 20 378 19 375.2 18.2 373 17.4 371 16.7 369 15.9 367 15 364.8 14 362.4 13 360 12.1 358 11.3 356 10.5 354 9.7 352 8.8 350 8 347.9 7 345.3 6.2 343 5.5 341 4.8 339 4 336.4 3.3 334 2.8 332 2 329 1.6 327 1 324 0.7 322 0.3 319 0 316.6 M63.1 399 62.7 397 62 394.2 61.4 392 60.9 390 60 387 59.4 385 58.8 383 58 380.7 57 378 56.2 376 55.4 374 54.6 372 53.7 370 52.8 368 51.9 366 50.9 364 49.9 362 48.9 360 47.8 358 46.8 356 45.7 354 44.6 352 43.5 350 42.4 348 41.3 346 40.2 344 39.2 342 38.1 340 37.1 338 36.1 336 35.2 334 34.2 332 33.4 330 32.5 328 31.7 326 31 324 30 321.3 29.3 319 28.7 317 28 314.5 27.4 312 27 310 26.4 307 26 304.6 25.6 302 25.3 299 25.1 296 24.9 294 24.8 291 24.7 288 24.7 285 24.7 282 24.7 279 24.7 276 24.8 273 24.9 270 24.9 267 24.9 264 24.9 261 24.9 258 24.8 255 24.6 252 24.4 249 24.2 246 24 244 23.6 241 23.1 238 22.8 236 22.2 233 21.8 231 21.1 228 20.6 226 20 223.8 19.2 221 18.6 219 18 217 17 214 16.4 212 15.7 210 15 207.9 14 205 13.4 203 12.7 201 12 198.9 11.1 196 10.5 194 9.9 192 9 189 8.5 187 8 184.9 7.4 182 7 180 6.4 177 6 174.1 5.7 172 5.4 169 5.2 166 5.1 163 5.1 160 5.1 157 5.2 154 5.4 151 5.7 148 6 145 6.2 143 6.6 140 7 137.1 7.3 135 7.8 132 8.1 130 8.5 127 9 124 9.3 122 9.7 119 10 116.8 10.3 114 10.7 111 11 108 11.1 106 11.3 103 11.4 100 11.5 97 11.5 94 11.4 91 11.2 88 11 85.1 10.8 83 10.4 80 10 77 9.7 75 9.2 72 8.8 70 8.2 67 7.8 65 7.2 62 6.7 60 6.1 57 5.6 55 5 52.2 4.5 50 4 47.5 3.5 45 3 42.2 M101.9 399 101 396.3 100.2 394 99.6 392 98.9 390 98 387.5 97.1 385 96.4 383 95.6 381 94.8 379 93.9 377 93 374.8 92 372.6 91 370.5 90 368.5 89 366.5 88 364.6 87 362.8 86 361 84.8 359 83.6 357 82.4 355 81.1 353 80 351.3 79 349.8 77.8 348 76.4 346 75.1 344 74 342.4 73 341 71.7 339 70.3 337 69 335 68 333.5 67 332 65.7 330 64.5 328 63.3 326 62.1 324 61 322 60 320.2 59 318.2 58 316.2 57 314 56.1 312 55.3 310 54.5 308 53.8 306 53 303.5 52.3 301 51.7 299 51 296 50.6 294 50 291 49.7 289 49.2 286 49 284 48.6 281 48.4 278 48.1 275 48 273 47.8 270 47.6 267 47.4 264 47.3 261 47.1 258 46.9 256 46.7 253 46.4 250 46.1 247 45.8 245 45.4 242 45 239.6 44.5 237 44 234.4 43.5 232 43 230 42.2 227 41.6 225 41 222.9 40.1 220 39.4 218 38.7 216 38 214 37 211.4 36.1 209 35.3 207 34.5 205 33.6 203 32.8 201 32 199 31 196.5 30 194 29.2 192 28.5 190 27.7 188 27 185.9 26 183 25.4 181 24.8 179 24 176.1 23.5 174 23 172 22.4 169 22 166.8 21.6 164 21.2 161 21 158.7 20.8 156 20.7 153 20.6 150 20.7 147 20.7 144 20.9 141 21 139 21.2 136 21.5 133 21.8 130 22 127.9 22.3 125 22.6 122 22.9 119 23.1 117 23.4 114 23.7 111 23.9 108 24 105.8 24.1 103 24.2 100 24.2 97 24.2 94 24 91 23.9 89 23.7 86 23.4 83 23 80.2 22.7 78 22.2 75 21.8 73 21.2 70 20.7 68 20 65 19.6 63 19 60.8 18.3 58 17.8 56 17 53.1 16.5 51 15.9 49 15.2 46 14.7 44 14 41 M143.1 399 142.1 397 141.1 395 140.1 393 139.1 391 138.2 389 137.3 387 136.3 385 135.4 383 134.4 381 133.5 379 132.5 377 131.5 375 130.5 373 129.4 371 128.4 369 127.3 367 126.1 365 125 363.1 124 361.5 123 359.9 121.8 358 120.5 356 119.1 354 118 352.5 116.9 351 115.5 349 114 347.1 113 345.8 111.6 344 110 342 109 340.8 107.5 339 106 337.2 105 336 103.4 334 102 332.4 100.8 331 99.2 329 98 327.6 96.7 326 95.1 324 94 322.5 92.8 321 91.3 319 90 317.2 89 315.8 87.8 314 86.5 312 85.2 310 84 308 83 306.2 82 304.4 81 302.4 80 300.4 79 298.2 78.1 296 77.3 294 76.6 292 75.9 290 75 287.2 74.4 285 73.9 283 73.1 280 72.7 278 72.1 275 71.7 273 71.2 270 70.9 268 70.5 265 70.1 262 69.8 260 69.4 257 69 254 68.7 252 68.3 249 68 246.9 67.5 244 67 241.1 66.6 239 66 236.2 65.5 234 65 232 64.2 229 63.6 227 63 224.9 62 222 61.3 220 60.6 218 59.9 216 59 213.9 58 211.4 57 209.1 56.1 207 55.1 205 54.2 203 53.3 201 52.3 199 51.4 197 50.4 195 49.4 193 48.5 191 47.6 189 46.6 187 45.7 185 44.9 183 44 180.9 43 178.4 42.1 176 41.3 174 40.7 172 40 169.9 39.2 167 38.6 165 38 162.4 37.5 160 37 157.3 36.6 155 36.3 152 36 149.6 35.8 147 35.6 144 35.5 141 35.5 138 35.5 135 35.6 132 35.7 129 35.9 126 36 123.5 36.1 121 36.3 118 36.5 115 36.7 112 36.8 109 36.9 106 37 103 37 100 36.9 97 36.8 94 36.7 91 36.5 88 36.2 85 35.9 83 35.5 80 35 77 34.6 75 34 72 33.6 70 33 67.6 32.3 65 31.8 63 31 60.2 30.4 58 29.8 56 29 53.4 28.3 51 27.7 49 27 46.8 26.2 44 25.6 42 M189.1 399 188 397.7 186.6 396 185.1 394 184 392.6 182.8 391 181.4 389 180 387 179 385.4 178 383.9 176.8 382 175.5 380 174.2 378 173 376 172 374.4 171 372.8 169.8 371 168.6 369 167.3 367 166 365 165 363.5 164 362 162.7 360 161.3 358 160 356.3 159 354.9 157.6 353 156 351 155 349.7 153.6 348 152 346.1 151 344.9 149.3 343 148 341.5 146.6 340 145 338.3 143.8 337 142 335.1 140.9 334 139 332.1 137.9 331 136 329.1 134.9 328 133 326.2 131.8 325 130 323.2 128.8 322 127 320.2 125.8 319 124 317.2 122.9 316 121 314 120 312.9 118.3 311 117 309.6 115.7 308 114 306 113 304.7 111.7 303 110.2 301 109 299.3 108 297.8 106.8 296 105.6 294 104.5 292 103.4 290 102.4 288 101.4 286 100.5 284 99.6 282 98.8 280 98 277.7 97.1 275 96.4 273 95.8 271 95 268.1 94.5 266 94 264 93.3 261 92.8 259 92.2 256 91.8 254 91.1 251 90.7 249 90.1 246 89.7 244 89 241 88.5 239 88 236.8 87.3 234 86.7 232 86 229.5 85.2 227 84.6 225 83.9 223 83 220.5 82 218 81.2 216 80.4 214 79.5 212 78.6 210 77.6 208 76.6 206 75.6 204 74.6 202 73.5 200 72.5 198 71.4 196 70.3 194 69.2 192 68 190 67 188.1 66 186.3 65 184.4 64 182.6 63 180.6 62 178.7 61 176.7 60 174.6 59 172.4 58 170.1 57.2 168 56.4 166 55.6 164 55 162 54 159 53.5 157 52.9 155 52.2 152 51.8 150 51.3 147 51 145 50.6 142 50.3 139 50.1 136 50 134 49.8 131 49.8 128 49.7 125 49.7 122 49.8 119 49.8 116 49.8 113 49.9 110 49.9 107 49.9 104 49.9 101 49.8 98 49.6 95 49.5 92 49.2 89 49 86.9 48.7 84 48.2 81 47.9 79 47.3 76 46.9 74 46.2 71 45.7 69 45 66.2 44.4 64 43.8 62 43 59.4 42.2 57 41.6 55 40.9 53 40 50.3 39.2 48 38.5 46 37.8 44 37 41.5 M246.6 399 244.9 398 243 396.9 241 395.6 239 394.2 237.2 393 235.9 392 234 390.6 232.1 389 230.9 388 229 386.3 227.5 385 226 383.5 224.4 382 223 380.5 221.5 379 220 377.3 218.8 376 217 374 216 372.8 214.5 371 213 369.2 212 368 210.4 366 209 364.3 207.9 363 206.3 361 205 359.4 203.9 358 202.3 356 201 354.5 199.7 353 198 351 197 349.8 195.4 348 194 346.5 192.7 345 191 343.2 189.8 342 188 340.2 186.8 339 185 337.2 183.7 336 182 334.4 180.5 333 179 331.7 177.1 330 176 329 174 327.3 172.4 326 171 324.8 169 323.2 167.6 322 166 320.7 164 319.1 162.6 318 161 316.7 159 315 157.7 314 156 312.6 154.1 311 152.9 310 151 308.4 149.4 307 148 305.7 146.1 304 145 303 143 301.1 141.9 300 140 298 139 297 137.2 295 136 293.6 134.6 292 133 290 132 288.7 130.7 287 129.3 285 128 283 127 281.4 126 279.7 125 278 123.9 276 122.9 274 122 272 121 269.9 120 267.5 119 265 118.2 263 117.5 261 116.9 259 116 256.4 115.3 254 114.7 252 114 249.7 113.2 247 112.7 245 112 242.7 111.2 240 110.7 238 110 235.8 109.2 233 108.5 231 107.9 229 107 226.5 106.1 224 105.4 222 104.6 220 103.8 218 102.9 216 102 214 101 211.8 100 209.8 99 207.8 98 205.9 97 204 95.9 202 94.7 200 93.6 198 92.4 196 91.1 194 90 192.2 89 190.6 88 189 86.7 187 85.5 185 84.2 183 83 181.1 82 179.5 81 177.8 79.9 176 78.7 174 77.6 172 76.5 170 75.5 168 74.4 166 73.5 164 72.6 162 71.7 160 70.9 158 70 155.8 69 153 68.4 151 67.8 149 67 146.1 66.5 144 66 141.7 65.5 139 65 136.1 64.7 134 64.4 131 64.1 128 63.9 126 63.7 123 63.5 120 63.4 117 63.3 114 63.2 111 63.1 108 63 105 62.9 103 62.8 100 62.6 97 62.4 94 62.2 91 62 89 61.6 86 61.2 83 60.9 81 60.3 78 59.9 76 59.2 73 58.8 71 58 68.1 57.4 66 56.8 64 56 61.5 55.2 59 54.5 57 53.8 55 53 52.9 52 50.2 51.2 48 50.4 46 49.6 44 48.9 42 M321.8 399 319.7 398 317.7 397 315.6 396 313.6 395 311.5 394 309.5 393 307.4 392 305.4 391 303.3 390 301.3 389 299.2 388 297.2 387 295.1 386 293.1 385 291 384 289 383 287 382 285 381.1 283 380.1 281 379.1 279.1 378 277.3 377 275.6 376 274 375 272 373.7 270 372.3 268.1 371 266.7 370 265 368.7 263 367.1 261.6 366 260 364.6 258.1 363 256.9 362 255 360.3 253.6 359 252 357.5 250.4 356 249 354.7 247.2 353 246 351.8 244.1 350 243 348.9 241 347 240 346 238 344.2 236.8 343 235 341.4 233.5 340 232 338.6 230.2 337 229 336 227 334.3 225.5 333 224 331.8 222 330.1 220.6 329 219 327.8 217 326.3 215.3 325 214 324 212 322.6 210 321.1 208.4 320 206.9 319 205 317.7 203 316.3 201 315 199.5 314 198 313 196 311.7 194 310.4 192 309.1 190.4 308 188.9 307 187 305.8 185 304.4 183 303.1 181.5 302 180 301 178 299.6 176 298.1 174.5 297 173 295.8 171 294.3 169.4 293 168 291.8 166 290.1 164.8 289 163 287.4 161.6 286 160 284.5 158.6 283 157 281.3 155.9 280 154.2 278 153 276.5 151.8 275 150.4 273 149 271 148 269.5 147 267.9 145.9 266 144.8 264 143.7 262 142.7 260 141.7 258 140.8 256 139.9 254 139 251.9 138 249.4 137.1 247 136.3 245 135.6 243 134.8 241 134 238.7 133 236 132.3 234 131.6 232 130.8 230 130 227.8 129 225.3 128.1 223 127.3 221 126.4 219 125.5 217 124.6 215 123.6 213 122.6 211 121.6 209 120.5 207 119.4 205 118.2 203 117 201 116 199.3 115 197.7 113.9 196 112.6 194 111.2 192 110 190.2 109 188.8 107.7 187 106.3 185 105 183.2 104 181.8 102.7 180 101.3 178 100 176.2 99 174.8 97.8 173 96.4 171 95.1 169 94 167.3 93 165.7 92 164 90.8 162 89.7 160 88.6 158 87.6 156 86.6 154 85.7 152 84.9 150 84 147.8 83 145.1 82.3 143 81.7 141 81 138.6 80.3 136 79.9 134 79.2 131 78.9 129 78.4 126 78 123.2 77.7 121 77.4 118 77.1 115 76.9 113 76.7 110 76.5 107 76.2 104 76 101 75.9 99 75.6 96 75.3 93 75 90.5 74.7 88 74.3 85 73.9 83 73.4 80 73 78 72.4 75 71.9 73 71.1 70 70.5 68 69.9 66 69 63 68.3 61 67.6 59 66.9 57 66 54.7 65 52.2 64.1 50 63.3 48 62.5 46 61.6 44 60.8 42 M333 366.3 331 365.3 329 364.4 327 363.4 325 362.4 323 361.4 321 360.5 319 359.5 317 358.5 315 357.5 313 356.5 311 355.4 309 354.3 307 353.2 305 352 303.4 351 301.8 350 300 348.8 298 347.5 296 346.1 294.4 345 292.9 344 291 342.6 289 341.2 287.4 340 286 339 284 337.5 282 336.1 280.5 335 279 333.9 277 332.5 275 331 273.6 330 272 328.9 270 327.5 268 326.1 266.3 325 264.8 324 263 322.8 261 321.5 259 320.2 257 319 255.4 318 253.7 317 252 316 250 314.8 248 313.7 246 312.5 244 311.4 242 310.3 240 309.2 238 308.2 236 307.1 234 306 232 305 230.1 304 228.1 303 226.2 302 224.3 301 222.4 300 220.4 299 218.5 298 216.7 297 214.8 296 212.9 295 211 293.9 209 292.8 207 291.7 205 290.5 203 289.3 201 288.1 199.3 287 197.8 286 196 284.8 194 283.4 192 282 190.7 281 189 279.7 187 278.1 185.7 277 184 275.5 182.4 274 181 272.7 179.3 271 178 269.7 176.5 268 175 266.3 173.9 265 172.3 263 171 261.3 170 259.9 168.7 258 167.4 256 166.1 254 165 252.1 164 250.3 163 248.5 162 246.6 161 244.6 160 242.6 159 240.5 158 238.4 157 236.2 156 234 155.1 232 154.2 230 153.4 228 152.5 226 151.6 224 150.6 222 149.7 220 148.8 218 147.8 216 146.8 214 145.7 212 144.7 210 143.5 208 142.4 206 141.2 204 140 202 139 200.5 138 198.9 136.7 197 135.3 195 134 193.1 133 191.7 131.7 190 130.2 188 129 186.4 127.9 185 126.3 183 125 181.4 123.9 180 122.3 178 121 176.4 119.8 175 118.2 173 117 171.4 115.9 170 114.3 168 113 166.3 112 164.9 110.6 163 109.2 161 108 159.3 107 157.8 105.9 156 104.6 154 103.5 152 102.3 150 101.3 148 100.3 146 99.4 144 98.5 142 97.6 140 96.9 138 96 135.5 95.2 133 94.6 131 94 128.9 93.3 126 92.8 124 92.2 121 91.9 119 91.3 116 91 113.7 90.6 111 90.2 108 90 106 89.6 103 89.3 100 89 97.9 88.6 95 88.2 92 88 90 87.5 87 87 84 86.6 82 86 79 85.6 77 85 74.5 84.4 72 83.8 70 83 67.3 82.3 65 81.6 63 80.9 61 80 58.6 79 56 78.2 54 77.3 52 76.5 50 75.6 48 74.7 46 73.8 44 72.8 42 M333 332.2 331 331.1 329 330 327.1 329 325.2 328 323.4 327 321.6 326 319.8 325 318 324 316 322.9 314 321.8 312 320.7 310 319.6 308 318.5 306 317.5 304 316.4 302 315.3 300 314.3 298 313.3 296 312.3 294 311.3 292 310.3 290 309.3 288 308.4 286 307.4 284 306.4 282 305.4 280 304.5 278 303.5 276 302.5 274 301.5 272 300.6 270 299.6 268 298.6 266 297.6 264 296.7 262 295.7 260 294.7 258 293.7 256 292.8 254 291.8 252 290.8 250 289.8 248 288.9 246 287.9 244 286.9 242 285.9 240 284.9 238 284 236 283 234 282 231.9 281 229.9 280 227.9 279 225.9 278 224 277 222 275.8 220 274.7 218 273.5 216 272.2 214.1 271 212.7 270 211 268.8 209 267.3 207.3 266 206 265 204 263.3 202.6 262 201 260.5 199.4 259 198 257.6 196.5 256 195 254.3 193.9 253 192.3 251 191 249.4 190 248 188.5 246 187.2 244 186 242.2 185 240.7 184 239 182.8 237 181.6 235 180.5 233 179.4 231 178.3 229 177.2 227 176.2 225 175.1 223 174 221 173 219.1 172 217.2 171 215.4 170 213.6 169 211.8 167.9 210 166.8 208 165.6 206 164.3 204 163 202 162 200.5 161 199 159.6 197 158.2 195 157 193.4 155.9 192 154.3 190 153 188.3 151.9 187 150.3 185 149 183.5 147.7 182 146 180.1 145 178.9 143.3 177 142 175.6 140.5 174 139 172.3 137.8 171 136 169 135 167.9 133.3 166 132 164.5 130.7 163 129 161 128 159.8 126.6 158 125 156 124 154.7 122.7 153 121.3 151 120 149.1 119 147.6 118 146 116.8 144 115.6 142 114.6 140 113.5 138 112.6 136 111.7 134 110.9 132 110 129.8 109 127 108.3 125 107.7 123 107 120.5 106.3 118 105.9 116 105.2 113 104.8 111 104.2 108 103.8 106 103.3 103 103 101 102.5 98 102 95 101.7 93 101.2 90 100.8 88 100.2 85 99.8 83 99.2 80 98.7 78 98 75 97.5 73 96.9 71 96 68 95.4 66 94.7 64 94 62 93 59.4 92 57 91.2 55 90.3 53 89.4 51 88.5 49 87.5 47 86.6 45 85.6 43 84.6 41 M333 308 331 307 329 306 326.9 305 324.9 304 322.8 303 320.8 302 318.7 301 316.7 300 314.6 299 312.6 298 310.5 297 308.5 296 306.4 295 304.4 294 302.3 293 300.3 292 298.2 291 296.1 290 294.1 289 292 288 290 287 288 286 286 285 284 284.1 282 283.1 280 282.1 278 281.1 276 280.2 274 279.2 272 278.2 270 277.2 268 276.3 266 275.3 264 274.3 262 273.3 260 272.4 258 271.4 256 270.4 254 269.4 252 268.5 250 267.5 248 266.5 246 265.5 244 264.5 242 263.5 240 262.4 238 261.3 236 260.1 234.3 259 232.8 258 231 256.8 229 255.3 227.2 254 226 253 224 251.4 222.4 250 221 248.7 219.2 247 218 245.8 216.2 244 215 242.7 213.5 241 212 239.2 211 238 209.4 236 208 234.1 207 232.7 205.8 231 204.4 229 203 227 202 225.4 201 223.9 199.8 222 198.5 220 197.3 218 196 216 195 214.4 194 212.8 192.9 211 191.6 209 190.3 207 189 205.1 188 203.6 186.9 202 185.5 200 184.1 198 183 196.6 181.8 195 180.3 193 179 191.4 177.8 190 176.2 188 175 186.6 173.6 185 172 183.3 170.8 182 169 180 168 179 166.1 177 165 175.9 163.1 174 162 172.9 160.1 171 159 169.9 157 168 156 167 154 165 153 164 151 162 150 161 148 159 147 158 145.1 156 144 154.8 142.4 153 141 151.4 139.8 150 138.1 148 137 146.6 135.8 145 134.3 143 133 141.1 132 139.6 130.9 138 129.7 136 128.6 134 127.5 132 126.4 130 125.5 128 124.6 126 123.7 124 122.9 122 122 119.6 121.1 117 120.5 115 119.9 113 119 110 118.5 108 118 105.9 117.3 103 116.9 101 116.2 98 115.8 96 115.2 93 114.8 91 114.1 88 113.7 86 113 83 112.5 81 112 78.8 111.3 76 110.7 74 110 71.5 109.2 69 108.6 67 107.9 65 107 62.5 106 60 105.2 58 104.4 56 103.5 54 102.6 52 101.6 50 100.6 48 99.6 46 98.6 44 97.5 42 M333 286.1 331 285.1 329 284.1 327 283.1 325 282.2 323 281.2 321 280.2 319 279.2 317 278.3 315 277.3 313 276.3 311 275.3 309 274.4 307 273.4 305 272.4 303 271.4 301 270.5 299 269.5 297 268.5 295 267.5 293 266.6 291 265.6 289 264.6 287 263.6 285 262.7 283 261.7 281 260.7 279 259.7 277 258.8 275 257.8 273 256.8 271 255.8 269 254.8 267 253.9 265 252.9 263 251.9 261 250.9 259 249.8 257 248.7 255 247.5 253 246.3 251.1 245 249.7 244 248 242.8 246 241.3 244.4 240 243 238.9 241 237.1 239.8 236 238 234.3 236.7 233 235 231.3 233.8 230 232 228 231 226.9 229.4 225 228 223.3 226.9 222 225.4 220 224 218.2 223 216.9 221.6 215 220.1 213 219 211.5 217.9 210 216.4 208 215 206 214 204.7 212.7 203 211.2 201 210 199.4 208.9 198 207.3 196 206 194.3 204.9 193 203.2 191 202 189.6 200.6 188 199 186.2 197.9 185 196 183 195 182 193.1 180 192 178.9 190 177 189 176 187 174.2 185.7 173 184 171.4 182.4 170 181 168.7 179 167 177.9 166 176 164.3 174.5 163 173 161.7 171.1 160 169.9 159 168 157.3 166.6 156 165 154.6 163.3 153 162 151.8 160.2 150 159 148.9 157.2 147 156 145.8 154.3 144 153 142.5 151.7 141 150 139 149 137.7 147.7 136 146.2 134 145 132.3 144 130.7 142.9 129 141.7 127 140.6 125 139.5 123 138.5 121 137.5 119 136.6 117 135.8 115 135 113 134 110.3 133.2 108 132.6 106 132 104 131.1 101 130.5 99 130 97 129.2 94 128.7 92 128 89.3 127.4 87 126.9 85 126.1 82 125.6 80 125 77.9 124.2 75 123.6 73 122.9 71 122 68.2 121.2 66 120.5 64 119.7 62 118.9 60 118 57.8 117 55.5 116 53.3 115 51.3 114 49.3 113 47.3 112 45.5 111 43.6 110 41.8 M333 264.3 331 263.3 329 262.3 327 261.4 325 260.4 323 259.4 321 258.4 319 257.5 317 256.5 315 255.5 313 254.5 311 253.6 309 252.6 307 251.6 305 250.6 303 249.7 301 248.7 299 247.7 297 246.7 295 245.8 293 244.8 291 243.8 289 242.8 287 241.8 285 240.9 283 239.9 281 238.9 279 237.9 277 236.8 275 235.6 273 234.4 271 233.1 269.4 232 267.9 231 266 229.6 264 228 262.7 227 261 225.6 259.2 224 258 222.9 256 221 254.9 220 253 218.1 252 217 250.1 215 249 213.9 247.3 212 246 210.5 244.7 209 243 207.1 242 205.9 240.4 204 239 202.4 237.8 201 236.1 199 235 197.7 233.5 196 232 194.2 230.9 193 229.1 191 228 189.8 226.3 188 225 186.6 223.5 185 222 183.5 220.5 182 219 180.6 217.4 179 216 177.7 214.1 176 213 175 211 173.2 209.6 172 208 170.7 206 169 204.8 168 203 166.6 201 165 199.8 164 198 162.6 196 161.1 194.6 160 193 158.7 191 157.2 189.5 156 188 154.8 186 153.3 184.4 152 183 150.9 181 149.2 179.5 148 178 146.7 176 145 174.9 144 173 142.3 171.7 141 170 139.4 168.6 138 167 136.3 165.8 135 164 133 163 131.9 161.5 130 160 128.1 159 126.8 157.7 125 156.4 123 155.1 121 154 119.2 153 117.4 152 115.6 151 113.6 150 111.6 149 109.4 148 107.1 147.2 105 146.4 103 145.7 101 144.9 99 144 96.2 143.3 94 142.7 92 142 89.8 141.1 87 140.6 85 140 83 139 80 138.4 78 137.8 76 137 73.5 136.2 71 135.5 69 134.7 67 134 65 133 62.5 132 60 131.1 58 130.2 56 129.3 54 128.3 52 127.3 50 126.2 48 125.1 46 124 44 123 42.3 M333 242.4 331 241.5 329 240.5 327 239.5 325 238.5 323 237.6 321 236.6 319 235.6 317 234.6 315 233.7 313 232.7 311 231.7 309 230.7 307 229.7 305 228.8 303 227.8 301 226.8 299 225.8 297 224.7 295 223.6 293 222.4 291 221.2 289.2 220 287.7 219 286 217.8 284 216.3 282.3 215 281 214 279 212.3 277.4 211 276 209.8 274 208 273 207 271 205.2 269.8 204 268 202.3 266.7 201 265 199.3 263.7 198 262 196.3 260.8 195 259 193.2 257.8 192 256 190.2 254.8 189 253 187.2 251.7 186 250 184.3 248.6 183 247 181.5 245.4 180 244 178.8 242 177 240.8 176 239 174.4 237.3 173 236 172 234 170.4 232.3 169 231 168 229 166.5 227 165 225.6 164 224 162.8 222 161.4 220 160 218.6 159 217 157.9 215 156.5 213 155.2 211.3 154 209.9 153 208 151.7 206 150.3 204.1 149 202.6 148 201 146.8 199 145.4 197.1 144 195.8 143 194 141.7 192 140.1 190.6 139 189 137.7 187 136 185.9 135 184 133.3 182.6 132 181 130.5 179.5 129 178 127.4 176.7 126 175 124 174 122.8 172.5 121 171 119 170 117.6 168.9 116 167.6 114 166.4 112 165.2 110 164.1 108 163 106 162.1 104 161.1 102 160.2 100 159.4 98 158.5 96 157.7 94 157 92 156 89.3 155.2 87 154.5 85 153.8 83 153 80.8 152 78 151.3 76 150.6 74 149.9 72 149 69.5 148 67 147.2 65 146.4 63 145.6 61 144.7 59 143.8 57 142.8 55 141.8 53 140.8 51 139.7 49 138.6 47 137.5 45 136.3 43 135.1 41 M333 220.3 331 219.4 329 218.4 327 217.4 325 216.4 323 215.5 321 214.5 319 213.5 317 212.5 315 211.4 313 210.2 311 209 309.4 208 307.8 207 306 205.8 304 204.4 302.1 203 300.7 202 299 200.7 297 199.1 295.6 198 294 196.7 292 195.1 290.7 194 289 192.5 287.2 191 286 190 284 188.2 282.6 187 281 185.6 279.1 184 277.9 183 276 181.3 274.4 180 273 178.8 271 177.2 269.6 176 268 174.7 266 173.2 264.5 172 263 170.9 261 169.4 259.2 168 257.8 167 256 165.7 254 164.4 252 163 250.5 162 249 161 247 159.7 245 158.4 243 157.1 241.2 156 239.5 155 237.9 154 236 152.8 234 151.6 232 150.4 230 149.2 228 148 226.3 147 224.7 146 223 145 221 143.8 219 142.5 217 141.3 215 140 213.5 139 212 138 210 136.6 208 135.2 206.3 134 204.9 133 203 131.6 201 130 199.8 129 198 127.5 196.2 126 195 124.9 193 123 192 122 190 120 189 118.9 187.3 117 186 115.4 184.8 114 183.3 112 182 110.3 181 108.8 179.8 107 178.5 105 177.3 103 176.2 101 175.1 99 174.1 97 173.1 95 172.1 93 171.2 91 170.3 89 169.5 87 168.7 85 167.8 83 167 80.9 166 78.3 165.1 76 164.3 74 163.5 72 162.7 70 161.9 68 161 65.9 160 63.6 159 61.3 158 59.1 157 57 156 55 155 53 154 51.1 153 49.3 152 47.5 151 45.8 149.9 44 148.7 42 M333 197.6 331 196.5 329 195.3 327 194.1 325.3 193 323.7 192 322 190.9 320 189.5 318 188.2 316.3 187 314.9 186 313 184.6 311 183.2 309.4 182 308 181 306 179.5 304 178 302.6 177 301 175.8 299 174.4 297.1 173 295.7 172 294 170.8 292 169.4 290 168 288.5 167 287 166 285 164.7 283 163.4 281 162.1 279.2 161 277.6 160 275.9 159 274 157.9 272 156.7 270 155.5 268 154.4 266 153.3 264 152.2 262 151.1 260 150 258 149 256.1 148 254.2 147 252.3 146 250.4 145 248.5 144 246.6 143 244.7 142 242.8 141 240.9 140 239 139 237 137.9 235 136.8 233 135.7 231 134.6 229 133.4 227 132.2 225 131 223.4 130 221.9 129 220 127.8 218 126.4 216 125 214.7 124 213 122.7 211 121.1 209.6 120 208 118.6 206.2 117 205 115.9 203.1 114 202 112.9 200.2 111 199 109.7 197.6 108 196 106 195 104.7 193.7 103 192.3 101 191 99.1 190 97.5 189 95.8 187.9 94 186.8 92 185.7 90 184.7 88 183.7 86 182.7 84 181.8 82 180.9 80 180 78 179 75.9 178 73.6 177 71.3 176 69.1 175.1 67 174.2 65 173.2 63 172.3 61 171.3 59 170.3 57 169.3 55 168.3 53 167.2 51 166 49 165 47.2 164 45.5 163 43.9 161.8 42 M333 174.8 331 173.6 329 172.3 327 171.1 325.3 170 323.7 169 322 168 320 166.7 318 165.5 316 164.3 314 163.1 312.1 162 310.4 161 308.6 160 306.9 159 305 158 303 156.9 301 155.8 299 154.7 297 153.7 295 152.7 293 151.6 291 150.6 289 149.7 287 148.7 285 147.7 283 146.7 281 145.8 279 144.8 277 143.8 275 142.8 273 141.9 271 140.9 269 139.9 267 138.9 265 138 263 137 261 136 258.9 135 256.9 134 254.8 133 252.8 132 250.7 131 248.7 130 246.7 129 244.8 128 242.9 127 241 126 239 124.9 237 123.7 235 122.5 233 121.3 231 120 229.5 119 228 118 226 116.6 224 115.1 222.6 114 221 112.7 219 111 217.9 110 216 108.2 214.7 107 213 105.2 211.8 104 210 102 209 100.8 207.5 99 206 97 205 95.7 203.8 94 202.5 92 201.2 90 200 88.1 199 86.5 198 84.7 197 83 195.9 81 194.9 79 193.8 77 192.8 75 191.8 73 190.8 71 189.9 69 188.9 67 187.9 65 186.9 63 185.9 61 184.9 59 183.8 57 182.8 55 181.7 53 180.5 51 179.4 49 178.2 47 177 45.1 176 43.6 175 42 M333 158.1 331 157.1 329 156.1 327 155.1 325 154.1 323 153.1 321 152.1 319 151.2 317 150.2 315 149.2 313 148.2 311 147.3 309 146.3 307 145.3 305 144.3 303 143.4 301 142.4 299 141.4 297 140.4 295 139.5 293 138.5 291 137.5 289 136.5 287 135.6 285 134.6 283 133.6 281 132.6 279 131.7 277 130.7 275 129.7 273 128.7 271 127.8 269 126.8 267 125.8 265 124.8 263 123.8 261 122.9 259 121.9 257 120.9 255 119.9 253 118.9 251 117.9 249 116.8 247 115.7 245 114.5 243 113.3 241 112 239.5 111 238 109.9 236 108.5 234 107 232.8 106 231 104.5 229.3 103 228 101.9 226 100 225 99 223.1 97 222 95.8 220.4 94 219 92.3 218 91 216.5 89 215 87 214 85.6 212.9 84 211.6 82 210.4 80 209.1 78 208 76.1 207 74.3 206 72.6 205 70.8 204 69 202.9 67 201.8 65 200.8 63 199.7 61 198.6 59 197.5 57 196.3 55 195.2 53 194 51 193 49.4 192 47.7 190.9 46 189.6 44 188.3 42 M333 145.3 331 144.4 329 143.4 327 142.4 325 141.4 323 140.5 321 139.5 319 138.5 317 137.5 315 136.6 313 135.6 311 134.6 309 133.6 307 132.7 305 131.7 303 130.7 301 129.7 299 128.8 297 127.8 295 126.8 293 125.8 291 124.9 289 123.9 287 122.9 285 121.9 283 121 281 120 279 119 276.9 118 274.9 117 272.8 116 270.8 115 268.7 114 266.7 113 264.6 112 262.6 111 260.7 110 258.8 109 257 108 255 106.8 253 105.6 251 104.3 249.1 103 247.7 102 246 100.7 244 99.2 242.6 98 241 96.7 239.1 95 238 94 236 92 235 91 233.1 89 232 87.7 230.5 86 229 84.2 228 82.9 226.6 81 225.1 79 224 77.4 223 76 221.7 74 220.4 72 219.1 70 218 68.2 217 66.5 216 64.9 214.9 63 213.7 61 212.5 59 211.3 57 210.1 55 209 53.2 208 51.6 207 50 205.7 48 204.4 46 203.1 44 202 42.5 201 41 M333 133 331 132.1 329 131.1 327 130.1 325 129.1 323 128.2 321 127.2 319 126.2 317 125.2 315 124.3 313 123.3 311 122.3 309 121.3 307 120.4 305 119.4 303 118.4 301 117.4 299 116.5 297 115.5 295 114.5 293 113.5 291 112.6 289 111.6 287 110.6 285 109.6 283 108.7 281 107.7 279 106.7 277 105.7 275 104.8 273 103.8 271 102.8 269 101.7 267 100.6 265 99.4 263 98.1 261.2 97 259.8 96 258 94.7 256 93.2 254.4 92 253 90.8 251 89.1 249.7 88 248 86.4 246.6 85 245 83.3 243.7 82 242 80.1 241 78.9 239.4 77 238 75.2 237 73.9 235.6 72 234.1 70 233 68.5 232 67 230.6 65 229.3 63 228 61 227 59.5 226 58 224.7 56 223.4 54 222.1 52 221 50.4 220 48.9 218.7 47 217.4 45 216 43.1 215 41.7 M333 121 331 120 329 119.1 327 118.1 325 117.1 323 116.1 321 115.2 319 114.2 317 113.2 315 112.2 313 111.3 311 110.3 309 109.3 307 108.3 305 107.4 303 106.4 301 105.4 299 104.4 297 103.5 295 102.5 293 101.5 291 100.5 289 99.6 287 98.6 285 97.6 283 96.6 281 95.6 279 94.5 277 93.4 275 92.2 273 91 271.5 90 270 89 268 87.5 266 86 264.7 85 263 83.6 261.1 82 260 81 258 79.1 256.9 78 255 76.1 254 75 252.2 73 251 71.6 249.6 70 248 68 247 66.8 245.6 65 244.1 63 243 61.5 241.9 60 240.5 58 239 56 238 54.6 236.9 53 235.5 51 234.1 49 233 47.5 231.9 46 230.4 44 229 42.1 M333 109.2 331 108.3 329 107.3 327 106.3 325 105.3 323 104.3 321 103.4 319 102.4 317 101.4 315 100.4 313 99.5 311 98.5 309 97.5 307 96.5 305 95.6 303 94.6 301 93.6 299 92.6 297 91.7 295 90.7 293 89.7 291 88.7 289 87.6 287 86.5 285 85.3 283 84 281.4 83 280 82 278 80.6 276 79.1 274.7 78 273 76.6 271.1 75 270 74 268 72.1 266.9 71 265 69.1 263.9 68 262.1 66 261 64.8 259.5 63 258 61.3 256.9 60 255.3 58 254 56.3 252.9 55 251.4 53 250 51.2 249 49.9 247.5 48 246 46 245 44.7 243.7 43 242.1 41 M333 97.6 331 96.6 329 95.7 327 94.7 325 93.7 323 92.7 321 91.8 319 90.8 317 89.8 315 88.8 313 87.9 311 86.9 309 85.9 307 84.9 305 84 303 83 301 82 299 80.9 297 79.8 295 78.6 293 77.3 291 76 289.6 75 288 73.8 286 72.3 284.3 71 283 69.9 281 68.2 279.7 67 278 65.4 276.5 64 275 62.5 273.6 61 272 59.4 270.7 58 269 56.1 268 54.9 266.3 53 265 51.5 263.8 50 262.1 48 261 46.7 259.6 45 258 43.1 257 41.9 M333 86.2 331 85.2 329 84.2 327 83.2 325 82.3 323 81.3 321 80.3 319 79.3 317 78.4 315 77.4 313 76.4 311 75.4 309 74.3 307 73.2 305 72 303.4 71 301.9 70 300 68.7 298 67.3 296.3 66 295 65 293 63.4 291.4 62 290 60.8 288 59 286.9 58 285 56.1 283.8 55 282 53.1 280.9 52 279 50 278 48.9 276.2 47 275 45.7 273.5 44 272 42.4 270.8 41 M333 74.8 331 73.8 329 72.9 327 71.9 325 70.9 323 69.9 321 68.9 319 67.8 317 66.7 315 65.5 313 64.3 311.1 63 309.6 62 308 60.9 306 59.4 304.2 58 303 57 301 55.4 299.4 54 298 52.8 296 51 295 50 293 48.1 291.8 47 290 45.2 288.8 44 287 42.2 285.8 41 M333 63.5 331 62.5 329 61.4 327 60.3 325 59.1 323.2 58 321.6 57 320 55.9 318 54.5 316 53.1 314.5 52 313 50.8 311 49.2 309.5 48 308 46.7 306 45 304.9 44 303 42.3 301.6 41 M333 51.5 331 50.3 329.1 49 327.6 48 326 46.8 324 45.4 322.2 44 320.9 43 319 41.5" fill="none" stroke="#ee9044" stroke-width="4.6"/>
</g></g>
<rect y="40.5" width="334" height="1.5" fill="#c86a3a" opacity="0.6"/>
<g clip-path="url(#bc)">
<g filter="url(#bl)"><rect x="-28" y="140" width="15" height="15" fill="#eda743"/><rect x="-14" y="140" width="15" height="15" fill="#eda743"/><rect x="0" y="140" width="15" height="15" fill="#eda743"/><rect x="14" y="140" width="15" height="15" fill="#eda743"/><rect x="28" y="140" width="15" height="15" fill="#eda743"/><rect x="42" y="140" width="15" height="15" fill="#eda743"/><rect x="56" y="140" width="15" height="15" fill="#eda743"/><rect x="70" y="140" width="15" height="15" fill="#eda743"/><rect x="84" y="140" width="15" height="15" fill="#eda743"/><rect x="98" y="140" width="15" height="15" fill="#eda743"/><rect x="112" y="140" width="15" height="15" fill="#eda743"/><rect x="126" y="140" width="15" height="15" fill="#eda743"/><rect x="140" y="140" width="15" height="15" fill="#eda743"/><rect x="154" y="140" width="15" height="15" fill="#eda743"/><rect x="168" y="140" width="15" height="15" fill="#eda743"/><rect x="182" y="140" width="15" height="15" fill="#eda743"/><rect x="196" y="140" width="15" height="15" fill="#eda743"/><rect x="210" y="140" width="15" height="15" fill="#eda743"/><rect x="224" y="140" width="15" height="15" fill="#eda743"/><rect x="238" y="140" width="15" height="15" fill="#eda743"/><rect x="252" y="140" width="15" height="15" fill="#eda743"/><rect x="266" y="140" width="15" height="15" fill="#eda743"/><rect x="280" y="140" width="15" height="15" fill="#eda743"/><rect x="294" y="140" width="15" height="15" fill="#eda743"/><rect x="308" y="140" width="15" height="15" fill="#eda743"/><rect x="322" y="140" width="15" height="15" fill="#eda743"/><rect x="336" y="140" width="15" height="15" fill="#eda743"/><rect x="350" y="140" width="15" height="15" fill="#eda743"/><rect x="-28" y="154" width="15" height="15" fill="#eda743"/><rect x="-14" y="154" width="15" height="15" fill="#eda743"/><rect x="0" y="154" width="15" height="15" fill="#eda743"/><rect x="14" y="154" width="15" height="15" fill="#eda743"/><rect x="28" y="154" width="15" height="15" fill="#eda743"/><rect x="42" y="154" width="15" height="15" fill="#eda743"/><rect x="56" y="154" width="15" height="15" fill="#eda743"/><rect x="70" y="154" width="15" height="15" fill="#eda743"/><rect x="84" y="154" width="15" height="15" fill="#eda743"/><rect x="98" y="154" width="15" height="15" fill="#eda743"/><rect x="112" y="154" width="15" height="15" fill="#eda743"/><rect x="126" y="154" width="15" height="15" fill="#eda743"/><rect x="140" y="154" width="15" height="15" fill="#eda743"/><rect x="154" y="154" width="15" height="15" fill="#eda743"/><rect x="168" y="154" width="15" height="15" fill="#eda743"/><rect x="182" y="154" width="15" height="15" fill="#eda743"/><rect x="196" y="154" width="15" height="15" fill="#eda743"/><rect x="210" y="154" width="15" height="15" fill="#eda743"/><rect x="224" y="154" width="15" height="15" fill="#eda743"/><rect x="238" y="154" width="15" height="15" fill="#eda743"/><rect x="252" y="154" width="15" height="15" fill="#eda743"/><rect x="266" y="154" width="15" height="15" fill="#eda743"/><rect x="280" y="154" width="15" height="15" fill="#eda743"/><rect x="294" y="154" width="15" height="15" fill="#eda743"/><rect x="308" y="154" width="15" height="15" fill="#eda743"/><rect x="322" y="154" width="15" height="15" fill="#eda743"/><rect x="336" y="154" width="15" height="15" fill="#eda743"/><rect x="350" y="154" width="15" height="15" fill="#eda743"/><rect x="-28" y="168" width="15" height="15" fill="#eda642"/><rect x="-14" y="168" width="15" height="15" fill="#eda642"/><rect x="0" y="168" width="15" height="15" fill="#eda642"/><rect x="14" y="168" width="15" height="15" fill="#eda642"/><rect x="28" y="168" width="15" height="15" fill="#eda642"/><rect x="42" y="168" width="15" height="15" fill="#eda642"/><rect x="56" y="168" width="15" height="15" fill="#eda642"/><rect x="70" y="168" width="15" height="15" fill="#eda642"/><rect x="84" y="168" width="15" height="15" fill="#eda642"/><rect x="98" y="168" width="15" height="15" fill="#eda642"/><rect x="112" y="168" width="15" height="15" fill="#eda642"/><rect x="126" y="168" width="15" height="15" fill="#eda642"/><rect x="140" y="168" width="15" height="15" fill="#eda642"/><rect x="154" y="168" width="15" height="15" fill="#eda642"/><rect x="168" y="168" width="15" height="15" fill="#eca642"/><rect x="182" y="168" width="15" height="15" fill="#eca642"/><rect x="196" y="168" width="15" height="15" fill="#eca642"/><rect x="210" y="168" width="15" height="15" fill="#eca642"/><rect x="224" y="168" width="15" height="15" fill="#eca642"/><rect x="238" y="168" width="15" height="15" fill="#eca642"/><rect x="252" y="168" width="15" height="15" fill="#eca642"/><rect x="266" y="168" width="15" height="15" fill="#eca642"/><rect x="280" y="168" width="15" height="15" fill="#eca642"/><rect x="294" y="168" width="15" height="15" fill="#eca642"/><rect x="308" y="168" width="15" height="15" fill="#eca642"/><rect x="322" y="168" width="15" height="15" fill="#eca642"/><rect x="336" y="168" width="15" height="15" fill="#eca642"/><rect x="350" y="168" width="15" height="15" fill="#eca642"/><rect x="-28" y="182" width="15" height="15" fill="#eca541"/><rect x="-14" y="182" width="15" height="15" fill="#eca541"/><rect x="0" y="182" width="15" height="15" fill="#eca541"/><rect x="14" y="182" width="15" height="15" fill="#eca541"/><rect x="28" y="182" width="15" height="15" fill="#eca541"/><rect x="42" y="182" width="15" height="15" fill="#eca541"/><rect x="56" y="182" width="15" height="15" fill="#eca542"/><rect x="70" y="182" width="15" height="15" fill="#eca542"/><rect x="84" y="182" width="15" height="15" fill="#eca542"/><rect x="98" y="182" width="15" height="15" fill="#eca542"/><rect x="112" y="182" width="15" height="15" fill="#eca542"/><rect x="126" y="182" width="15" height="15" fill="#eca541"/><rect x="140" y="182" width="15" height="15" fill="#eca541"/><rect x="154" y="182" width="15" height="15" fill="#eca541"/><rect x="168" y="182" width="15" height="15" fill="#eca541"/><rect x="182" y="182" width="15" height="15" fill="#eca541"/><rect x="196" y="182" width="15" height="15" fill="#eca441"/><rect x="210" y="182" width="15" height="15" fill="#eca441"/><rect x="224" y="182" width="15" height="15" fill="#eca441"/><rect x="238" y="182" width="15" height="15" fill="#eba440"/><rect x="252" y="182" width="15" height="15" fill="#eba440"/><rect x="266" y="182" width="15" height="15" fill="#eba440"/><rect x="280" y="182" width="15" height="15" fill="#eba441"/><rect x="294" y="182" width="15" height="15" fill="#eba441"/><rect x="308" y="182" width="15" height="15" fill="#eca441"/><rect x="322" y="182" width="15" height="15" fill="#eca441"/><rect x="336" y="182" width="15" height="15" fill="#eca441"/><rect x="350" y="182" width="15" height="15" fill="#eca441"/><rect x="-28" y="196" width="15" height="15" fill="#eba440"/><rect x="-14" y="196" width="15" height="15" fill="#eba440"/><rect x="0" y="196" width="15" height="15" fill="#eba440"/><rect x="14" y="196" width="15" height="15" fill="#eba440"/><rect x="28" y="196" width="15" height="15" fill="#eba440"/><rect x="42" y="196" width="15" height="15" fill="#eca441"/><rect x="56" y="196" width="15" height="15" fill="#eca541"/><rect x="70" y="196" width="15" height="15" fill="#eca541"/><rect x="84" y="196" width="15" height="15" fill="#eca541"/><rect x="98" y="196" width="15" height="15" fill="#eca541"/><rect x="112" y="196" width="15" height="15" fill="#eca541"/><rect x="126" y="196" width="15" height="15" fill="#eba441"/><rect x="140" y="196" width="15" height="15" fill="#eba440"/><rect x="154" y="196" width="15" height="15" fill="#eba340"/><rect x="168" y="196" width="15" height="15" fill="#eba340"/><rect x="182" y="196" width="15" height="15" fill="#eba33f"/><rect x="196" y="196" width="15" height="15" fill="#eba23f"/><rect x="210" y="196" width="15" height="15" fill="#eaa23f"/><rect x="224" y="196" width="15" height="15" fill="#eaa23f"/><rect x="238" y="196" width="15" height="15" fill="#eaa13e"/><rect x="252" y="196" width="15" height="15" fill="#eaa13e"/><rect x="266" y="196" width="15" height="15" fill="#eaa13e"/><rect x="280" y="196" width="15" height="15" fill="#eaa13e"/><rect x="294" y="196" width="15" height="15" fill="#eaa13f"/><rect x="308" y="196" width="15" height="15" fill="#eaa23f"/><rect x="322" y="196" width="15" height="15" fill="#eaa23f"/><rect x="336" y="196" width="15" height="15" fill="#eaa23f"/><rect x="350" y="196" width="15" height="15" fill="#eaa23f"/><rect x="-28" y="210" width="15" height="15" fill="#eaa23f"/><rect x="-14" y="210" width="15" height="15" fill="#eaa23f"/><rect x="0" y="210" width="15" height="15" fill="#eba23f"/><rect x="14" y="210" width="15" height="15" fill="#eba23f"/><rect x="28" y="210" width="15" height="15" fill="#eba23f"/><rect x="42" y="210" width="15" height="15" fill="#eba340"/><rect x="56" y="210" width="15" height="15" fill="#eba440"/><rect x="70" y="210" width="15" height="15" fill="#eba441"/><rect x="84" y="210" width="15" height="15" fill="#eba441"/><rect x="98" y="210" width="15" height="15" fill="#eba441"/><rect x="112" y="210" width="15" height="15" fill="#eba440"/><rect x="126" y="210" width="15" height="15" fill="#eba340"/><rect x="140" y="210" width="15" height="15" fill="#eaa23f"/><rect x="154" y="210" width="15" height="15" fill="#eaa13e"/><rect x="168" y="210" width="15" height="15" fill="#eaa03e"/><rect x="182" y="210" width="15" height="15" fill="#e9a03d"/><rect x="196" y="210" width="15" height="15" fill="#e99f3d"/><rect x="210" y="210" width="15" height="15" fill="#e99e3c"/><rect x="224" y="210" width="15" height="15" fill="#e89e3c"/><rect x="238" y="210" width="15" height="15" fill="#e89d3c"/><rect x="252" y="210" width="15" height="15" fill="#e89d3b"/><rect x="266" y="210" width="15" height="15" fill="#e89d3b"/><rect x="280" y="210" width="15" height="15" fill="#e89d3c"/><rect x="294" y="210" width="15" height="15" fill="#e89e3d"/><rect x="308" y="210" width="15" height="15" fill="#e99e3d"/><rect x="322" y="210" width="15" height="15" fill="#e99f3d"/><rect x="336" y="210" width="15" height="15" fill="#e99f3e"/><rect x="350" y="210" width="15" height="15" fill="#e99f3e"/><rect x="-28" y="224" width="15" height="15" fill="#e99f3d"/><rect x="-14" y="224" width="15" height="15" fill="#e99f3d"/><rect x="0" y="224" width="15" height="15" fill="#e99f3d"/><rect x="14" y="224" width="15" height="15" fill="#ea9f3d"/><rect x="28" y="224" width="15" height="15" fill="#eaa03e"/><rect x="42" y="224" width="15" height="15" fill="#eaa13f"/><rect x="56" y="224" width="15" height="15" fill="#eba23f"/><rect x="70" y="224" width="15" height="15" fill="#eba240"/><rect x="84" y="224" width="15" height="15" fill="#eba240"/><rect x="98" y="224" width="15" height="15" fill="#eba23f"/><rect x="112" y="224" width="15" height="15" fill="#eaa23f"/><rect x="126" y="224" width="15" height="15" fill="#eaa13e"/><rect x="140" y="224" width="15" height="15" fill="#e99f3d"/><rect x="154" y="224" width="15" height="15" fill="#e89e3c"/><rect x="168" y="224" width="15" height="15" fill="#e89d3b"/><rect x="182" y="224" width="15" height="15" fill="#e79c3b"/><rect x="196" y="224" width="15" height="15" fill="#e79b3a"/><rect x="210" y="224" width="15" height="15" fill="#e79a3a"/><rect x="224" y="224" width="15" height="15" fill="#e69a39"/><rect x="238" y="224" width="15" height="15" fill="#e69939"/><rect x="252" y="224" width="15" height="15" fill="#e69839"/><rect x="266" y="224" width="15" height="15" fill="#e69839"/><rect x="280" y="224" width="15" height="15" fill="#e69939"/><rect x="294" y="224" width="15" height="15" fill="#e79a3a"/><rect x="308" y="224" width="15" height="15" fill="#e79b3b"/><rect x="322" y="224" width="15" height="15" fill="#e79c3c"/><rect x="336" y="224" width="15" height="15" fill="#e89c3c"/><rect x="350" y="224" width="15" height="15" fill="#e89c3c"/><rect x="-28" y="238" width="15" height="15" fill="#e89a3a"/><rect x="-14" y="238" width="15" height="15" fill="#e89a3a"/><rect x="0" y="238" width="15" height="15" fill="#e89a3a"/><rect x="14" y="238" width="15" height="15" fill="#e89b3b"/><rect x="28" y="238" width="15" height="15" fill="#e89c3c"/><rect x="42" y="238" width="15" height="15" fill="#e99d3d"/><rect x="56" y="238" width="15" height="15" fill="#e99f3d"/><rect x="70" y="238" width="15" height="15" fill="#ea9f3e"/><rect x="84" y="238" width="15" height="15" fill="#ea9f3e"/><rect x="98" y="238" width="15" height="15" fill="#e99f3d"/><rect x="112" y="238" width="15" height="15" fill="#e99e3d"/><rect x="126" y="238" width="15" height="15" fill="#e89c3c"/><rect x="140" y="238" width="15" height="15" fill="#e79a3a"/><rect x="154" y="238" width="15" height="15" fill="#e69839"/><rect x="168" y="238" width="15" height="15" fill="#e69738"/><rect x="182" y="238" width="15" height="15" fill="#e59738"/><rect x="196" y="238" width="15" height="15" fill="#e59637"/><rect x="210" y="238" width="15" height="15" fill="#e59637"/><rect x="224" y="238" width="15" height="15" fill="#e59537"/><rect x="238" y="238" width="15" height="15" fill="#e49537"/><rect x="252" y="238" width="15" height="15" fill="#e49537"/><rect x="266" y="238" width="15" height="15" fill="#e49637"/><rect x="280" y="238" width="15" height="15" fill="#e59738"/><rect x="294" y="238" width="15" height="15" fill="#e69839"/><rect x="308" y="238" width="15" height="15" fill="#e69a3a"/><rect x="322" y="238" width="15" height="15" fill="#e79a3b"/><rect x="336" y="238" width="15" height="15" fill="#e79b3b"/><rect x="350" y="238" width="15" height="15" fill="#e79b3b"/><rect x="-28" y="252" width="15" height="15" fill="#e69337"/><rect x="-14" y="252" width="15" height="15" fill="#e69437"/><rect x="0" y="252" width="15" height="15" fill="#e69437"/><rect x="14" y="252" width="15" height="15" fill="#e69537"/><rect x="28" y="252" width="15" height="15" fill="#e69638"/><rect x="42" y="252" width="15" height="15" fill="#e79839"/><rect x="56" y="252" width="15" height="15" fill="#e89a3a"/><rect x="70" y="252" width="15" height="15" fill="#e89a3a"/><rect x="84" y="252" width="15" height="15" fill="#e89a3a"/><rect x="98" y="252" width="15" height="15" fill="#e7993a"/><rect x="112" y="252" width="15" height="15" fill="#e79839"/><rect x="126" y="252" width="15" height="15" fill="#e69638"/><rect x="140" y="252" width="15" height="15" fill="#e49336"/><rect x="154" y="252" width="15" height="15" fill="#e39135"/><rect x="168" y="252" width="15" height="15" fill="#e29034"/><rect x="182" y="252" width="15" height="15" fill="#e29034"/><rect x="196" y="252" width="15" height="15" fill="#e29034"/><rect x="210" y="252" width="15" height="15" fill="#e39134"/><rect x="224" y="252" width="15" height="15" fill="#e39234"/><rect x="238" y="252" width="15" height="15" fill="#e39335"/><rect x="252" y="252" width="15" height="15" fill="#e49436"/><rect x="266" y="252" width="15" height="15" fill="#e49537"/><rect x="280" y="252" width="15" height="15" fill="#e59638"/><rect x="294" y="252" width="15" height="15" fill="#e69839"/><rect x="308" y="252" width="15" height="15" fill="#e69a3a"/><rect x="322" y="252" width="15" height="15" fill="#e79b3b"/><rect x="336" y="252" width="15" height="15" fill="#e79b3b"/><rect x="350" y="252" width="15" height="15" fill="#e79b3b"/><rect x="-28" y="266" width="15" height="15" fill="#e38c33"/><rect x="-14" y="266" width="15" height="15" fill="#e38c33"/><rect x="0" y="266" width="15" height="15" fill="#e38d33"/><rect x="14" y="266" width="15" height="15" fill="#e48e33"/><rect x="28" y="266" width="15" height="15" fill="#e48f34"/><rect x="42" y="266" width="15" height="15" fill="#e59235"/><rect x="56" y="266" width="15" height="15" fill="#e69336"/><rect x="70" y="266" width="15" height="15" fill="#e69436"/><rect x="84" y="266" width="15" height="15" fill="#e59336"/><rect x="98" y="266" width="15" height="15" fill="#e59135"/><rect x="112" y="266" width="15" height="15" fill="#e49034"/><rect x="126" y="266" width="15" height="15" fill="#e28d33"/><rect x="140" y="266" width="15" height="15" fill="#e18a31"/><rect x="154" y="266" width="15" height="15" fill="#df8830"/><rect x="168" y="266" width="15" height="15" fill="#df872f"/><rect x="182" y="266" width="15" height="15" fill="#df8830"/><rect x="196" y="266" width="15" height="15" fill="#df8a31"/><rect x="210" y="266" width="15" height="15" fill="#e08c31"/><rect x="224" y="266" width="15" height="15" fill="#e18e33"/><rect x="238" y="266" width="15" height="15" fill="#e29034"/><rect x="252" y="266" width="15" height="15" fill="#e39336"/><rect x="266" y="266" width="15" height="15" fill="#e49537"/><rect x="280" y="266" width="15" height="15" fill="#e59738"/><rect x="294" y="266" width="15" height="15" fill="#e6993a"/><rect x="308" y="266" width="15" height="15" fill="#e79b3a"/><rect x="322" y="266" width="15" height="15" fill="#e79c3b"/><rect x="336" y="266" width="15" height="15" fill="#e79c3b"/><rect x="350" y="266" width="15" height="15" fill="#e79c3b"/><rect x="-28" y="280" width="15" height="15" fill="#e1852f"/><rect x="-14" y="280" width="15" height="15" fill="#e1852f"/><rect x="0" y="280" width="15" height="15" fill="#e1862f"/><rect x="14" y="280" width="15" height="15" fill="#e18730"/><rect x="28" y="280" width="15" height="15" fill="#e28830"/><rect x="42" y="280" width="15" height="15" fill="#e38b31"/><rect x="56" y="280" width="15" height="15" fill="#e38c32"/><rect x="70" y="280" width="15" height="15" fill="#e38d32"/><rect x="84" y="280" width="15" height="15" fill="#e28b32"/><rect x="98" y="280" width="15" height="15" fill="#e18930"/><rect x="112" y="280" width="15" height="15" fill="#e0872f"/><rect x="126" y="280" width="15" height="15" fill="#de842e"/><rect x="140" y="280" width="15" height="15" fill="#dc812c"/><rect x="154" y="280" width="15" height="15" fill="#da7e2b"/><rect x="168" y="280" width="15" height="15" fill="#da7e2b"/><rect x="182" y="280" width="15" height="15" fill="#da802c"/><rect x="196" y="280" width="15" height="15" fill="#dc832d"/><rect x="210" y="280" width="15" height="15" fill="#dd872f"/><rect x="224" y="280" width="15" height="15" fill="#df8a31"/><rect x="238" y="280" width="15" height="15" fill="#e18f34"/><rect x="252" y="280" width="15" height="15" fill="#e39336"/><rect x="266" y="280" width="15" height="15" fill="#e59638"/><rect x="280" y="280" width="15" height="15" fill="#e69839"/><rect x="294" y="280" width="15" height="15" fill="#e69a3a"/><rect x="308" y="280" width="15" height="15" fill="#e79c3b"/><rect x="322" y="280" width="15" height="15" fill="#e79d3c"/><rect x="336" y="280" width="15" height="15" fill="#e79d3c"/><rect x="350" y="280" width="15" height="15" fill="#e79d3c"/><rect x="-28" y="294" width="15" height="15" fill="#de7e2c"/><rect x="-14" y="294" width="15" height="15" fill="#de7e2c"/><rect x="0" y="294" width="15" height="15" fill="#df7f2c"/><rect x="14" y="294" width="15" height="15" fill="#df802c"/><rect x="28" y="294" width="15" height="15" fill="#e0812d"/><rect x="42" y="294" width="15" height="15" fill="#e0842e"/><rect x="56" y="294" width="15" height="15" fill="#e1852e"/><rect x="70" y="294" width="15" height="15" fill="#e1852e"/><rect x="84" y="294" width="15" height="15" fill="#df832d"/><rect x="98" y="294" width="15" height="15" fill="#dd802c"/><rect x="112" y="294" width="15" height="15" fill="#db7d2a"/><rect x="126" y="294" width="15" height="15" fill="#d97929"/><rect x="140" y="294" width="15" height="15" fill="#d67627"/><rect x="154" y="294" width="15" height="15" fill="#d47326"/><rect x="168" y="294" width="15" height="15" fill="#d47427"/><rect x="182" y="294" width="15" height="15" fill="#d57728"/><rect x="196" y="294" width="15" height="15" fill="#d77c2b"/><rect x="210" y="294" width="15" height="15" fill="#da822d"/><rect x="224" y="294" width="15" height="15" fill="#dc8730"/><rect x="238" y="294" width="15" height="15" fill="#df8d33"/><rect x="252" y="294" width="15" height="15" fill="#e29336"/><rect x="266" y="294" width="15" height="15" fill="#e49639"/><rect x="280" y="294" width="15" height="15" fill="#e5993a"/><rect x="294" y="294" width="15" height="15" fill="#e69b3b"/><rect x="308" y="294" width="15" height="15" fill="#e79d3c"/><rect x="322" y="294" width="15" height="15" fill="#e79d3c"/><rect x="336" y="294" width="15" height="15" fill="#e79e3c"/><rect x="350" y="294" width="15" height="15" fill="#e79e3c"/><rect x="-28" y="308" width="15" height="15" fill="#dc7829"/><rect x="-14" y="308" width="15" height="15" fill="#dc7829"/><rect x="0" y="308" width="15" height="15" fill="#dc7829"/><rect x="14" y="308" width="15" height="15" fill="#dc7929"/><rect x="28" y="308" width="15" height="15" fill="#dd7a2a"/><rect x="42" y="308" width="15" height="15" fill="#de7c2a"/><rect x="56" y="308" width="15" height="15" fill="#de7d2b"/><rect x="70" y="308" width="15" height="15" fill="#dd7d2a"/><rect x="84" y="308" width="15" height="15" fill="#db7a29"/><rect x="98" y="308" width="15" height="15" fill="#d97627"/><rect x="112" y="308" width="15" height="15" fill="#d67226"/><rect x="126" y="308" width="15" height="15" fill="#d36f24"/><rect x="140" y="308" width="15" height="15" fill="#d06b23"/><rect x="154" y="308" width="15" height="15" fill="#ce6922"/><rect x="168" y="308" width="15" height="15" fill="#cd6a23"/><rect x="182" y="308" width="15" height="15" fill="#cf6e25"/><rect x="196" y="308" width="15" height="15" fill="#d27528"/><rect x="210" y="308" width="15" height="15" fill="#d67c2b"/><rect x="224" y="308" width="15" height="15" fill="#d9832f"/><rect x="238" y="308" width="15" height="15" fill="#dd8a33"/><rect x="252" y="308" width="15" height="15" fill="#e19236"/><rect x="266" y="308" width="15" height="15" fill="#e49639"/><rect x="280" y="308" width="15" height="15" fill="#e5993a"/><rect x="294" y="308" width="15" height="15" fill="#e69b3b"/><rect x="308" y="308" width="15" height="15" fill="#e69c3c"/><rect x="322" y="308" width="15" height="15" fill="#e69d3c"/><rect x="336" y="308" width="15" height="15" fill="#e79d3c"/><rect x="350" y="308" width="15" height="15" fill="#e79d3c"/><rect x="-28" y="322" width="15" height="15" fill="#d97226"/><rect x="-14" y="322" width="15" height="15" fill="#d97226"/><rect x="0" y="322" width="15" height="15" fill="#da7226"/><rect x="14" y="322" width="15" height="15" fill="#da7227"/><rect x="28" y="322" width="15" height="15" fill="#da7327"/><rect x="42" y="322" width="15" height="15" fill="#db7527"/><rect x="56" y="322" width="15" height="15" fill="#db7627"/><rect x="70" y="322" width="15" height="15" fill="#da7427"/><rect x="84" y="322" width="15" height="15" fill="#d77125"/><rect x="98" y="322" width="15" height="15" fill="#d46d24"/><rect x="112" y="322" width="15" height="15" fill="#d16922"/><rect x="126" y="322" width="15" height="15" fill="#cd6521"/><rect x="140" y="322" width="15" height="15" fill="#c9611f"/><rect x="154" y="322" width="15" height="15" fill="#c75f1e"/><rect x="168" y="322" width="15" height="15" fill="#c6601f"/><rect x="182" y="322" width="15" height="15" fill="#c96622"/><rect x="196" y="322" width="15" height="15" fill="#cd6e25"/><rect x="210" y="322" width="15" height="15" fill="#d17629"/><rect x="224" y="322" width="15" height="15" fill="#d67e2d"/><rect x="238" y="322" width="15" height="15" fill="#db8731"/><rect x="252" y="322" width="15" height="15" fill="#df8f36"/><rect x="266" y="322" width="15" height="15" fill="#e29538"/><rect x="280" y="322" width="15" height="15" fill="#e4983a"/><rect x="294" y="322" width="15" height="15" fill="#e49a3b"/><rect x="308" y="322" width="15" height="15" fill="#e59b3b"/><rect x="322" y="322" width="15" height="15" fill="#e59b3c"/><rect x="336" y="322" width="15" height="15" fill="#e59b3c"/><rect x="350" y="322" width="15" height="15" fill="#e59c3c"/><rect x="-28" y="336" width="15" height="15" fill="#d76b24"/><rect x="-14" y="336" width="15" height="15" fill="#d76b24"/><rect x="0" y="336" width="15" height="15" fill="#d76b24"/><rect x="14" y="336" width="15" height="15" fill="#d76c24"/><rect x="28" y="336" width="15" height="15" fill="#d76c24"/><rect x="42" y="336" width="15" height="15" fill="#d76d24"/><rect x="56" y="336" width="15" height="15" fill="#d76d24"/><rect x="70" y="336" width="15" height="15" fill="#d56c24"/><rect x="84" y="336" width="15" height="15" fill="#d26822"/><rect x="98" y="336" width="15" height="15" fill="#ce6420"/><rect x="112" y="336" width="15" height="15" fill="#cb601e"/><rect x="126" y="336" width="15" height="15" fill="#c75c1d"/><rect x="140" y="336" width="15" height="15" fill="#c2581c"/><rect x="154" y="336" width="15" height="15" fill="#bf561b"/><rect x="168" y="336" width="15" height="15" fill="#bf571c"/><rect x="182" y="336" width="15" height="15" fill="#c25e1f"/><rect x="196" y="336" width="15" height="15" fill="#c76723"/><rect x="210" y="336" width="15" height="15" fill="#cc7027"/><rect x="224" y="336" width="15" height="15" fill="#d1782b"/><rect x="238" y="336" width="15" height="15" fill="#d7822f"/><rect x="252" y="336" width="15" height="15" fill="#dc8c34"/><rect x="266" y="336" width="15" height="15" fill="#e09237"/><rect x="280" y="336" width="15" height="15" fill="#e19538"/><rect x="294" y="336" width="15" height="15" fill="#e29639"/><rect x="308" y="336" width="15" height="15" fill="#e2973a"/><rect x="322" y="336" width="15" height="15" fill="#e3983a"/><rect x="336" y="336" width="15" height="15" fill="#e3983a"/><rect x="350" y="336" width="15" height="15" fill="#e3983a"/><rect x="-28" y="350" width="15" height="15" fill="#d36522"/><rect x="-14" y="350" width="15" height="15" fill="#d36522"/><rect x="0" y="350" width="15" height="15" fill="#d36522"/><rect x="14" y="350" width="15" height="15" fill="#d36522"/><rect x="28" y="350" width="15" height="15" fill="#d36522"/><rect x="42" y="350" width="15" height="15" fill="#d36522"/><rect x="56" y="350" width="15" height="15" fill="#d26521"/><rect x="70" y="350" width="15" height="15" fill="#d06320"/><rect x="84" y="350" width="15" height="15" fill="#cc601f"/><rect x="98" y="350" width="15" height="15" fill="#c85b1d"/><rect x="112" y="350" width="15" height="15" fill="#c4571b"/><rect x="126" y="350" width="15" height="15" fill="#bf531a"/><rect x="140" y="350" width="15" height="15" fill="#bb4f19"/><rect x="154" y="350" width="15" height="15" fill="#b74d18"/><rect x="168" y="350" width="15" height="15" fill="#b74f19"/><rect x="182" y="350" width="15" height="15" fill="#bb561c"/><rect x="196" y="350" width="15" height="15" fill="#c16020"/><rect x="210" y="350" width="15" height="15" fill="#c66924"/><rect x="224" y="350" width="15" height="15" fill="#cc7228"/><rect x="238" y="350" width="15" height="15" fill="#d37d2d"/><rect x="252" y="350" width="15" height="15" fill="#d88732"/><rect x="266" y="350" width="15" height="15" fill="#dc8d35"/><rect x="280" y="350" width="15" height="15" fill="#de8f36"/><rect x="294" y="350" width="15" height="15" fill="#de9137"/><rect x="308" y="350" width="15" height="15" fill="#de9137"/><rect x="322" y="350" width="15" height="15" fill="#de9137"/><rect x="336" y="350" width="15" height="15" fill="#de9137"/><rect x="350" y="350" width="15" height="15" fill="#de9137"/><rect x="-28" y="364" width="15" height="15" fill="#d05e20"/><rect x="-14" y="364" width="15" height="15" fill="#d05e20"/><rect x="0" y="364" width="15" height="15" fill="#d05e20"/><rect x="14" y="364" width="15" height="15" fill="#cf5e20"/><rect x="28" y="364" width="15" height="15" fill="#cf5e1f"/><rect x="42" y="364" width="15" height="15" fill="#ce5d1f"/><rect x="56" y="364" width="15" height="15" fill="#cc5d1e"/><rect x="70" y="364" width="15" height="15" fill="#ca5b1d"/><rect x="84" y="364" width="15" height="15" fill="#c6571c"/><rect x="98" y="364" width="15" height="15" fill="#c1521a"/><rect x="112" y="364" width="15" height="15" fill="#bc4e19"/><rect x="126" y="364" width="15" height="15" fill="#b84b17"/><rect x="140" y="364" width="15" height="15" fill="#b24716"/><rect x="154" y="364" width="15" height="15" fill="#af4616"/><rect x="168" y="364" width="15" height="15" fill="#af4817"/><rect x="182" y="364" width="15" height="15" fill="#b34f1a"/><rect x="196" y="364" width="15" height="15" fill="#ba591e"/><rect x="210" y="364" width="15" height="15" fill="#c06221"/><rect x="224" y="364" width="15" height="15" fill="#c66b25"/><rect x="238" y="364" width="15" height="15" fill="#cd762a"/><rect x="252" y="364" width="15" height="15" fill="#d37f2e"/><rect x="266" y="364" width="15" height="15" fill="#d68531"/><rect x="280" y="364" width="15" height="15" fill="#d88732"/><rect x="294" y="364" width="15" height="15" fill="#d88832"/><rect x="308" y="364" width="15" height="15" fill="#d88832"/><rect x="322" y="364" width="15" height="15" fill="#d88833"/><rect x="336" y="364" width="15" height="15" fill="#d88833"/><rect x="350" y="364" width="15" height="15" fill="#d88833"/><rect x="-28" y="378" width="15" height="15" fill="#cc571e"/><rect x="-14" y="378" width="15" height="15" fill="#cc571e"/><rect x="0" y="378" width="15" height="15" fill="#cb571e"/><rect x="14" y="378" width="15" height="15" fill="#cb571d"/><rect x="28" y="378" width="15" height="15" fill="#ca561d"/><rect x="42" y="378" width="15" height="15" fill="#c8551c"/><rect x="56" y="378" width="15" height="15" fill="#c6541c"/><rect x="70" y="378" width="15" height="15" fill="#c3521b"/><rect x="84" y="378" width="15" height="15" fill="#be4e19"/><rect x="98" y="378" width="15" height="15" fill="#b94a17"/><rect x="112" y="378" width="15" height="15" fill="#b44616"/><rect x="126" y="378" width="15" height="15" fill="#af4315"/><rect x="140" y="378" width="15" height="15" fill="#a94014"/><rect x="154" y="378" width="15" height="15" fill="#a63e14"/><rect x="168" y="378" width="15" height="15" fill="#a64114"/><rect x="182" y="378" width="15" height="15" fill="#aa4817"/><rect x="196" y="378" width="15" height="15" fill="#b1521b"/><rect x="210" y="378" width="15" height="15" fill="#b85b1f"/><rect x="224" y="378" width="15" height="15" fill="#be6422"/><rect x="238" y="378" width="15" height="15" fill="#c56d26"/><rect x="252" y="378" width="15" height="15" fill="#cb762a"/><rect x="266" y="378" width="15" height="15" fill="#ce7b2c"/><rect x="280" y="378" width="15" height="15" fill="#cf7c2d"/><rect x="294" y="378" width="15" height="15" fill="#cf7d2d"/><rect x="308" y="378" width="15" height="15" fill="#ce7c2d"/><rect x="322" y="378" width="15" height="15" fill="#ce7c2d"/><rect x="336" y="378" width="15" height="15" fill="#ce7c2c"/><rect x="350" y="378" width="15" height="15" fill="#ce7c2c"/><rect x="-28" y="392" width="15" height="15" fill="#c7501c"/><rect x="-14" y="392" width="15" height="15" fill="#c7501c"/><rect x="0" y="392" width="15" height="15" fill="#c7501b"/><rect x="14" y="392" width="15" height="15" fill="#c6501b"/><rect x="28" y="392" width="15" height="15" fill="#c44f1b"/><rect x="42" y="392" width="15" height="15" fill="#c24d1a"/><rect x="56" y="392" width="15" height="15" fill="#bf4b19"/><rect x="70" y="392" width="15" height="15" fill="#bb4918"/><rect x="84" y="392" width="15" height="15" fill="#b64616"/><rect x="98" y="392" width="15" height="15" fill="#b04215"/><rect x="112" y="392" width="15" height="15" fill="#ab3f14"/><rect x="126" y="392" width="15" height="15" fill="#a53c13"/><rect x="140" y="392" width="15" height="15" fill="#a03912"/><rect x="154" y="392" width="15" height="15" fill="#9c3711"/><rect x="168" y="392" width="15" height="15" fill="#9c3a12"/><rect x="182" y="392" width="15" height="15" fill="#a14115"/><rect x="196" y="392" width="15" height="15" fill="#a84b19"/><rect x="210" y="392" width="15" height="15" fill="#af541c"/><rect x="224" y="392" width="15" height="15" fill="#b55b1f"/><rect x="238" y="392" width="15" height="15" fill="#bb6322"/><rect x="252" y="392" width="15" height="15" fill="#bf6a25"/><rect x="266" y="392" width="15" height="15" fill="#c26e27"/><rect x="280" y="392" width="15" height="15" fill="#c36f27"/><rect x="294" y="392" width="15" height="15" fill="#c26e26"/><rect x="308" y="392" width="15" height="15" fill="#c16e26"/><rect x="322" y="392" width="15" height="15" fill="#c06d26"/><rect x="336" y="392" width="15" height="15" fill="#c06d26"/><rect x="350" y="392" width="15" height="15" fill="#c06d26"/><rect x="-28" y="406" width="15" height="15" fill="#c24a1a"/><rect x="-14" y="406" width="15" height="15" fill="#c24a1a"/><rect x="0" y="406" width="15" height="15" fill="#c24a19"/><rect x="14" y="406" width="15" height="15" fill="#c14919"/><rect x="28" y="406" width="15" height="15" fill="#be4818"/><rect x="42" y="406" width="15" height="15" fill="#bb4617"/><rect x="56" y="406" width="15" height="15" fill="#b74416"/><rect x="70" y="406" width="15" height="15" fill="#b34115"/><rect x="84" y="406" width="15" height="15" fill="#ad3e14"/><rect x="98" y="406" width="15" height="15" fill="#a63b13"/><rect x="112" y="406" width="15" height="15" fill="#a03812"/><rect x="126" y="406" width="15" height="15" fill="#9b3511"/><rect x="140" y="406" width="15" height="15" fill="#953210"/><rect x="154" y="406" width="15" height="15" fill="#91310f"/><rect x="168" y="406" width="15" height="15" fill="#923310"/><rect x="182" y="406" width="15" height="15" fill="#963a13"/><rect x="196" y="406" width="15" height="15" fill="#9e4316"/><rect x="210" y="406" width="15" height="15" fill="#a44b19"/><rect x="224" y="406" width="15" height="15" fill="#a9521b"/><rect x="238" y="406" width="15" height="15" fill="#ad571d"/><rect x="252" y="406" width="15" height="15" fill="#b15c1f"/><rect x="266" y="406" width="15" height="15" fill="#b25f20"/><rect x="280" y="406" width="15" height="15" fill="#b25f20"/><rect x="294" y="406" width="15" height="15" fill="#b15e20"/><rect x="308" y="406" width="15" height="15" fill="#af5d1f"/><rect x="322" y="406" width="15" height="15" fill="#af5d1f"/><rect x="336" y="406" width="15" height="15" fill="#ae5d1f"/><rect x="350" y="406" width="15" height="15" fill="#ae5c1f"/><rect x="-28" y="420" width="15" height="15" fill="#bd4418"/><rect x="-14" y="420" width="15" height="15" fill="#bd4418"/><rect x="0" y="420" width="15" height="15" fill="#bc4317"/><rect x="14" y="420" width="15" height="15" fill="#bb4317"/><rect x="28" y="420" width="15" height="15" fill="#b84116"/><rect x="42" y="420" width="15" height="15" fill="#b43f15"/><rect x="56" y="420" width="15" height="15" fill="#af3c14"/><rect x="70" y="420" width="15" height="15" fill="#aa3a13"/><rect x="84" y="420" width="15" height="15" fill="#a33712"/><rect x="98" y="420" width="15" height="15" fill="#9c3411"/><rect x="112" y="420" width="15" height="15" fill="#963110"/><rect x="126" y="420" width="15" height="15" fill="#902f0f"/><rect x="140" y="420" width="15" height="15" fill="#8b2c0e"/><rect x="154" y="420" width="15" height="15" fill="#872b0d"/><rect x="168" y="420" width="15" height="15" fill="#872d0e"/><rect x="182" y="420" width="15" height="15" fill="#8c3410"/><rect x="196" y="420" width="15" height="15" fill="#933c13"/><rect x="210" y="420" width="15" height="15" fill="#984316"/><rect x="224" y="420" width="15" height="15" fill="#9c4717"/><rect x="238" y="420" width="15" height="15" fill="#9f4b18"/><rect x="252" y="420" width="15" height="15" fill="#a04e19"/><rect x="266" y="420" width="15" height="15" fill="#a04f1a"/><rect x="280" y="420" width="15" height="15" fill="#9f4f19"/><rect x="294" y="420" width="15" height="15" fill="#9d4e19"/><rect x="308" y="420" width="15" height="15" fill="#9c4d18"/><rect x="322" y="420" width="15" height="15" fill="#9b4c18"/><rect x="336" y="420" width="15" height="15" fill="#9b4c18"/><rect x="350" y="420" width="15" height="15" fill="#9b4c18"/><rect x="-28" y="434" width="15" height="15" fill="#b83e16"/><rect x="-14" y="434" width="15" height="15" fill="#b83e16"/><rect x="0" y="434" width="15" height="15" fill="#b73e16"/><rect x="14" y="434" width="15" height="15" fill="#b53d15"/><rect x="28" y="434" width="15" height="15" fill="#b23b15"/><rect x="42" y="434" width="15" height="15" fill="#ac3913"/><rect x="56" y="434" width="15" height="15" fill="#a73612"/><rect x="70" y="434" width="15" height="15" fill="#a13411"/><rect x="84" y="434" width="15" height="15" fill="#9a3110"/><rect x="98" y="434" width="15" height="15" fill="#922e0f"/><rect x="112" y="434" width="15" height="15" fill="#8c2b0e"/><rect x="126" y="434" width="15" height="15" fill="#86290d"/><rect x="140" y="434" width="15" height="15" fill="#81270c"/><rect x="154" y="434" width="15" height="15" fill="#7d260c"/><rect x="168" y="434" width="15" height="15" fill="#7d280c"/><rect x="182" y="434" width="15" height="15" fill="#822e0e"/><rect x="196" y="434" width="15" height="15" fill="#883510"/><rect x="210" y="434" width="15" height="15" fill="#8d3a12"/><rect x="224" y="434" width="15" height="15" fill="#8f3e14"/><rect x="238" y="434" width="15" height="15" fill="#904014"/><rect x="252" y="434" width="15" height="15" fill="#904114"/><rect x="266" y="434" width="15" height="15" fill="#904114"/><rect x="280" y="434" width="15" height="15" fill="#8e4114"/><rect x="294" y="434" width="15" height="15" fill="#8c3f13"/><rect x="308" y="434" width="15" height="15" fill="#8a3f13"/><rect x="322" y="434" width="15" height="15" fill="#893e13"/><rect x="336" y="434" width="15" height="15" fill="#893e12"/><rect x="350" y="434" width="15" height="15" fill="#893e12"/><rect x="-28" y="448" width="15" height="15" fill="#b33a14"/><rect x="-14" y="448" width="15" height="15" fill="#b33a14"/><rect x="0" y="448" width="15" height="15" fill="#b23914"/><rect x="14" y="448" width="15" height="15" fill="#b03914"/><rect x="28" y="448" width="15" height="15" fill="#ac3713"/><rect x="42" y="448" width="15" height="15" fill="#a63412"/><rect x="56" y="448" width="15" height="15" fill="#9f3111"/><rect x="70" y="448" width="15" height="15" fill="#992f10"/><rect x="84" y="448" width="15" height="15" fill="#912c0f"/><rect x="98" y="448" width="15" height="15" fill="#89290d"/><rect x="112" y="448" width="15" height="15" fill="#83270c"/><rect x="126" y="448" width="15" height="15" fill="#7e250c"/><rect x="140" y="448" width="15" height="15" fill="#79230b"/><rect x="154" y="448" width="15" height="15" fill="#75220a"/><rect x="168" y="448" width="15" height="15" fill="#75240b"/><rect x="182" y="448" width="15" height="15" fill="#79280c"/><rect x="196" y="448" width="15" height="15" fill="#7e2f0e"/><rect x="210" y="448" width="15" height="15" fill="#823310"/><rect x="224" y="448" width="15" height="15" fill="#843611"/><rect x="238" y="448" width="15" height="15" fill="#843711"/><rect x="252" y="448" width="15" height="15" fill="#833711"/><rect x="266" y="448" width="15" height="15" fill="#823710"/><rect x="280" y="448" width="15" height="15" fill="#803610"/><rect x="294" y="448" width="15" height="15" fill="#7e350f"/><rect x="308" y="448" width="15" height="15" fill="#7c340f"/><rect x="322" y="448" width="15" height="15" fill="#7b340f"/><rect x="336" y="448" width="15" height="15" fill="#7b340f"/><rect x="350" y="448" width="15" height="15" fill="#7a340f"/><rect x="-28" y="462" width="15" height="15" fill="#af3613"/><rect x="-14" y="462" width="15" height="15" fill="#af3613"/><rect x="0" y="462" width="15" height="15" fill="#ae3613"/><rect x="14" y="462" width="15" height="15" fill="#ac3513"/><rect x="28" y="462" width="15" height="15" fill="#a73312"/><rect x="42" y="462" width="15" height="15" fill="#a03011"/><rect x="56" y="462" width="15" height="15" fill="#992e10"/><rect x="70" y="462" width="15" height="15" fill="#922b0f"/><rect x="84" y="462" width="15" height="15" fill="#8a280e"/><rect x="98" y="462" width="15" height="15" fill="#82260c"/><rect x="112" y="462" width="15" height="15" fill="#7c230b"/><rect x="126" y="462" width="15" height="15" fill="#77210b"/><rect x="140" y="462" width="15" height="15" fill="#72200a"/><rect x="154" y="462" width="15" height="15" fill="#6f1f09"/><rect x="168" y="462" width="15" height="15" fill="#6e210a"/><rect x="182" y="462" width="15" height="15" fill="#71250b"/><rect x="196" y="462" width="15" height="15" fill="#762a0d"/><rect x="210" y="462" width="15" height="15" fill="#7a2e0e"/><rect x="224" y="462" width="15" height="15" fill="#7b2f0e"/><rect x="238" y="462" width="15" height="15" fill="#7b300e"/><rect x="252" y="462" width="15" height="15" fill="#7a300e"/><rect x="266" y="462" width="15" height="15" fill="#78300e"/><rect x="280" y="462" width="15" height="15" fill="#762f0e"/><rect x="294" y="462" width="15" height="15" fill="#742e0d"/><rect x="308" y="462" width="15" height="15" fill="#722e0d"/><rect x="322" y="462" width="15" height="15" fill="#712d0c"/><rect x="336" y="462" width="15" height="15" fill="#712d0c"/><rect x="350" y="462" width="15" height="15" fill="#702d0c"/><rect x="-28" y="476" width="15" height="15" fill="#ac3412"/><rect x="-14" y="476" width="15" height="15" fill="#ac3412"/><rect x="0" y="476" width="15" height="15" fill="#ab3412"/><rect x="14" y="476" width="15" height="15" fill="#a93312"/><rect x="28" y="476" width="15" height="15" fill="#a43111"/><rect x="42" y="476" width="15" height="15" fill="#9c2e10"/><rect x="56" y="476" width="15" height="15" fill="#942b0f"/><rect x="70" y="476" width="15" height="15" fill="#8d290e"/><rect x="84" y="476" width="15" height="15" fill="#85260d"/><rect x="98" y="476" width="15" height="15" fill="#7d230c"/><rect x="112" y="476" width="15" height="15" fill="#77210b"/><rect x="126" y="476" width="15" height="15" fill="#721f0a"/><rect x="140" y="476" width="15" height="15" fill="#6d1e09"/><rect x="154" y="476" width="15" height="15" fill="#6a1d09"/><rect x="168" y="476" width="15" height="15" fill="#6a1f09"/><rect x="182" y="476" width="15" height="15" fill="#6d220a"/><rect x="196" y="476" width="15" height="15" fill="#71260b"/><rect x="210" y="476" width="15" height="15" fill="#742a0c"/><rect x="224" y="476" width="15" height="15" fill="#752b0d"/><rect x="238" y="476" width="15" height="15" fill="#742c0d"/><rect x="252" y="476" width="15" height="15" fill="#732c0d"/><rect x="266" y="476" width="15" height="15" fill="#722c0d"/><rect x="280" y="476" width="15" height="15" fill="#702b0c"/><rect x="294" y="476" width="15" height="15" fill="#6d2a0c"/><rect x="308" y="476" width="15" height="15" fill="#6c2a0b"/><rect x="322" y="476" width="15" height="15" fill="#6b2a0b"/><rect x="336" y="476" width="15" height="15" fill="#6a290b"/><rect x="350" y="476" width="15" height="15" fill="#6a290b"/><rect x="-28" y="490" width="15" height="15" fill="#ab3312"/><rect x="-14" y="490" width="15" height="15" fill="#aa3312"/><rect x="0" y="490" width="15" height="15" fill="#a93212"/><rect x="14" y="490" width="15" height="15" fill="#a73111"/><rect x="28" y="490" width="15" height="15" fill="#a22f11"/><rect x="42" y="490" width="15" height="15" fill="#9a2d10"/><rect x="56" y="490" width="15" height="15" fill="#922a0e"/><rect x="70" y="490" width="15" height="15" fill="#8b270d"/><rect x="84" y="490" width="15" height="15" fill="#83250c"/><rect x="98" y="490" width="15" height="15" fill="#7b220b"/><rect x="112" y="490" width="15" height="15" fill="#74200a"/><rect x="126" y="490" width="15" height="15" fill="#6f1e09"/><rect x="140" y="490" width="15" height="15" fill="#6b1d09"/><rect x="154" y="490" width="15" height="15" fill="#681c08"/><rect x="168" y="490" width="15" height="15" fill="#671d09"/><rect x="182" y="490" width="15" height="15" fill="#6a200a"/><rect x="196" y="490" width="15" height="15" fill="#6d240b"/><rect x="210" y="490" width="15" height="15" fill="#70270c"/><rect x="224" y="490" width="15" height="15" fill="#71290c"/><rect x="238" y="490" width="15" height="15" fill="#71290c"/><rect x="252" y="490" width="15" height="15" fill="#6f290c"/><rect x="266" y="490" width="15" height="15" fill="#6e290c"/><rect x="280" y="490" width="15" height="15" fill="#6c290b"/><rect x="294" y="490" width="15" height="15" fill="#6a280b"/><rect x="308" y="490" width="15" height="15" fill="#68280b"/><rect x="322" y="490" width="15" height="15" fill="#67270a"/><rect x="336" y="490" width="15" height="15" fill="#67270a"/><rect x="350" y="490" width="15" height="15" fill="#67270a"/><rect x="-28" y="504" width="15" height="15" fill="#aa3212"/><rect x="-14" y="504" width="15" height="15" fill="#aa3212"/><rect x="0" y="504" width="15" height="15" fill="#a93111"/><rect x="14" y="504" width="15" height="15" fill="#a63111"/><rect x="28" y="504" width="15" height="15" fill="#a02f10"/><rect x="42" y="504" width="15" height="15" fill="#992c0f"/><rect x="56" y="504" width="15" height="15" fill="#90290e"/><rect x="70" y="504" width="15" height="15" fill="#89270d"/><rect x="84" y="504" width="15" height="15" fill="#81240c"/><rect x="98" y="504" width="15" height="15" fill="#79210b"/><rect x="112" y="504" width="15" height="15" fill="#731f0a"/><rect x="126" y="504" width="15" height="15" fill="#6e1d09"/><rect x="140" y="504" width="15" height="15" fill="#6a1c09"/><rect x="154" y="504" width="15" height="15" fill="#671c08"/><rect x="168" y="504" width="15" height="15" fill="#661d08"/><rect x="182" y="504" width="15" height="15" fill="#682009"/><rect x="196" y="504" width="15" height="15" fill="#6c230a"/><rect x="210" y="504" width="15" height="15" fill="#6e260b"/><rect x="224" y="504" width="15" height="15" fill="#6f280c"/><rect x="238" y="504" width="15" height="15" fill="#6f280c"/><rect x="252" y="504" width="15" height="15" fill="#6e280c"/><rect x="266" y="504" width="15" height="15" fill="#6c280b"/><rect x="280" y="504" width="15" height="15" fill="#6a280b"/><rect x="294" y="504" width="15" height="15" fill="#68270b"/><rect x="308" y="504" width="15" height="15" fill="#66270a"/><rect x="322" y="504" width="15" height="15" fill="#66260a"/><rect x="336" y="504" width="15" height="15" fill="#65260a"/><rect x="350" y="504" width="15" height="15" fill="#65260a"/><rect x="-28" y="518" width="15" height="15" fill="#aa3212"/><rect x="-14" y="518" width="15" height="15" fill="#a93212"/><rect x="0" y="518" width="15" height="15" fill="#a83111"/><rect x="14" y="518" width="15" height="15" fill="#a53011"/><rect x="28" y="518" width="15" height="15" fill="#a02e10"/><rect x="42" y="518" width="15" height="15" fill="#982c0f"/><rect x="56" y="518" width="15" height="15" fill="#90290e"/><rect x="70" y="518" width="15" height="15" fill="#89260d"/><rect x="84" y="518" width="15" height="15" fill="#81240c"/><rect x="98" y="518" width="15" height="15" fill="#78210b"/><rect x="112" y="518" width="15" height="15" fill="#721f0a"/><rect x="126" y="518" width="15" height="15" fill="#6d1d09"/><rect x="140" y="518" width="15" height="15" fill="#691c09"/><rect x="154" y="518" width="15" height="15" fill="#661b08"/><rect x="168" y="518" width="15" height="15" fill="#661c08"/><rect x="182" y="518" width="15" height="15" fill="#681f09"/><rect x="196" y="518" width="15" height="15" fill="#6b230a"/><rect x="210" y="518" width="15" height="15" fill="#6e260b"/><rect x="224" y="518" width="15" height="15" fill="#6e270b"/><rect x="238" y="518" width="15" height="15" fill="#6e280c"/><rect x="252" y="518" width="15" height="15" fill="#6d280c"/><rect x="266" y="518" width="15" height="15" fill="#6b280b"/><rect x="280" y="518" width="15" height="15" fill="#6a270b"/><rect x="294" y="518" width="15" height="15" fill="#67270a"/><rect x="308" y="518" width="15" height="15" fill="#66260a"/><rect x="322" y="518" width="15" height="15" fill="#65260a"/><rect x="336" y="518" width="15" height="15" fill="#64260a"/><rect x="350" y="518" width="15" height="15" fill="#64260a"/></g>
<g mask="url(#mk1)"><rect y="150" width="334" height="354" filter="url(#tx1)" opacity="0.8"/></g>
<g mask="url(#mk2)"><rect y="150" width="334" height="354" filter="url(#tx2)" opacity="0.7"/></g>
<path d="M22.3 470.3h2.9v2.9h-2.9z M48.1 410.9h1.6v1.6h-1.6z M267.8 455h3.1v3.1h-3.1z M254 376.5h3.1v3.1h-3.1z M83.2 354h2.3v2.3h-2.3z M166.3 379.7h2.7v2.7h-2.7z M201.2 371.7h2.7v2.7h-2.7z M119.3 457.8h2.1v2.1h-2.1z M266.8 402.2h2.6v2.6h-2.6z M224.9 420.2h2v2h-2z M327.1 346.7h2.1v2.1h-2.1z M183.4 335h1.8v1.8h-1.8z M267 466.4h2.8v2.8h-2.8z M301.2 461.5h2.1v2.1h-2.1z M215.4 389.2h3v3h-3z M128.5 356.7h3.3v3.3h-3.3z M230.6 459.6h2.6v2.6h-2.6z M261.5 407.9h2.6v2.6h-2.6z M20.9 426.6h3.1v3.1h-3.1z M235.7 469.7h2.5v2.5h-2.5z M294.4 348.8h3.3v3.3h-3.3z M124 345.8h2.7v2.7h-2.7z M151.9 404.5h3.2v3.2h-3.2z M46 437.3h2.3v2.3h-2.3z M176.4 416.9h1.8v1.8h-1.8z M171 480h1.8v1.8h-1.8z M3.8 341.8h2.4v2.4h-2.4z M325.5 337.7h3.5v3.5h-3.5z M179 350.9h2.3v2.3h-2.3z M69.3 454.3h2.6v2.6h-2.6z M96.2 374.4h3.2v3.2h-3.2z M255.9 405.9h2.3v2.3h-2.3z M246.3 498.9h1.7v1.7h-1.7z M53.1 393h2.5v2.5h-2.5z M23.9 339.3h1.9v1.9h-1.9z M128.9 458.6h2.7v2.7h-2.7z M9.8 337.8h2.4v2.4h-2.4z M292.2 489.2h2.2v2.2h-2.2z M296.4 491.7h2.3v2.3h-2.3z M249.2 393.6h1.8v1.8h-1.8z M192.1 345h2.8v2.8h-2.8z M270.3 489.3h2.4v2.4h-2.4z M39.2 487h3.2v3.2h-3.2z M323.2 433.4h2.8v2.8h-2.8z M124.7 361.9h2.1v2.1h-2.1z M240.7 386.5h2.9v2.9h-2.9z M167.7 408.1h3.4v3.4h-3.4z M55.5 414.8h1.8v1.8h-1.8z M313.1 415h2.2v2.2h-2.2z M56.2 433.4h2.3v2.3h-2.3z M42.5 335.6h2.3v2.3h-2.3z M194.8 420.3h3.3v3.3h-3.3z M304.5 492.9h3.1v3.1h-3.1z M159.5 421.1h2.3v2.3h-2.3z M133.4 337.2h3.1v3.1h-3.1z M82.2 335.1h2.4v2.4h-2.4z M239.8 405.9h2.2v2.2h-2.2z M219.9 358.3h1.5v1.5h-1.5z M197.9 422.3h3.2v3.2h-3.2z M138.9 466.8h1.5v1.5h-1.5z M9.1 434.2h2v2h-2z M22.5 352.2h2.2v2.2h-2.2z M112.6 428.1h3.3v3.3h-3.3z M122.1 362h2.7v2.7h-2.7z M0.7 397h2.1v2.1h-2.1z M129.4 338.8h2.6v2.6h-2.6z M208.5 460.4h3.4v3.4h-3.4z M118.5 444.2h2.4v2.4h-2.4z M71.8 484.7h3v3h-3z M314.9 472.9h3.3v3.3h-3.3z M42.8 332.7h1.9v1.9h-1.9z M137.6 449.6h2.4v2.4h-2.4z M171.5 462.4h1.6v1.6h-1.6z M226.6 338.5h2v2h-2z M241.2 448.9h2.3v2.3h-2.3z M98.4 474.1h2v2h-2z M10.4 373h1.5v1.5h-1.5z M270.8 351.3h3.4v3.4h-3.4z M71.1 383.3h2.7v2.7h-2.7z M102.9 396h1.7v1.7h-1.7z M129.9 334.4h1.9v1.9h-1.9z M303.8 378.9h2v2h-2z M226.9 483.6h2.1v2.1h-2.1z M125.7 454.4h3.1v3.1h-3.1z M205 361.1h1.9v1.9h-1.9z M253.2 453h3.3v3.3h-3.3z M260.5 403.3h1.8v1.8h-1.8z M297.4 451h2.7v2.7h-2.7z M227.7 397h2.2v2.2h-2.2z M192.2 414h2.9v2.9h-2.9z M312.7 477.4h2.3v2.3h-2.3z M124.4 491.3h2.3v2.3h-2.3z M267.3 346.1h2.4v2.4h-2.4z M172.4 470.7h3.3v3.3h-3.3z M51 437.4h2.8v2.8h-2.8z M50.6 475h2.6v2.6h-2.6z M321.2 362.4h2.5v2.5h-2.5z M108 441.8h2.7v2.7h-2.7z M171.2 386.5h2.5v2.5h-2.5z M124.3 485h2.4v2.4h-2.4z M158.7 375h2v2h-2z M318.6 384.6h3.2v3.2h-3.2z M198.7 500.6h1.8v1.8h-1.8z M314.5 464.4h2.6v2.6h-2.6z M236.8 455.7h2.4v2.4h-2.4z M211.9 369.8h1.5v1.5h-1.5z M226 412.6h3.3v3.3h-3.3z M88.2 472.3h3.5v3.5h-3.5z M300 497.8h1.8v1.8h-1.8z M55.1 369.7h2.2v2.2h-2.2z M38.5 356.2h1.5v1.5h-1.5z M311.7 392.8h2.8v2.8h-2.8z M151.8 459.3h3.1v3.1h-3.1z M127.9 423.1h1.7v1.7h-1.7z M95.3 368.8h2.1v2.1h-2.1z M108.4 430.1h2.2v2.2h-2.2z M109.2 474.6h1.5v1.5h-1.5z M1.8 339.9h3.2v3.2h-3.2z M211.7 456.7h3.4v3.4h-3.4z M72.8 490.1h2v2h-2z M173.3 448.5h3.1v3.1h-3.1z M82.9 413h1.6v1.6h-1.6z M96.2 500.7h3.3v3.3h-3.3z M194.4 466.8h3.3v3.3h-3.3z M110.8 500.6h2.4v2.4h-2.4z M53.1 422.2h2.7v2.7h-2.7z M231.4 446.7h1.6v1.6h-1.6z M213.4 490.4h2.8v2.8h-2.8z M325.7 419h3.1v3.1h-3.1z M46.9 485.8h2.4v2.4h-2.4z M292.8 385.8h2.7v2.7h-2.7z M282.8 453.8h2.7v2.7h-2.7z M324.2 345.3h1.7v1.7h-1.7z M184.2 496.1h2.9v2.9h-2.9z M103.4 348.7h2.4v2.4h-2.4z M160.4 411.5h2.7v2.7h-2.7z M91.1 483.2h2.1v2.1h-2.1z M35.8 390.7h3.4v3.4h-3.4z M53.2 378.3h3.4v3.4h-3.4z M116.3 476.7h1.6v1.6h-1.6z M296.8 371.3h1.9v1.9h-1.9z M247.9 502.2h3.4v3.4h-3.4z M251.3 489.1h3.5v3.5h-3.5z M184.6 355.2h3.2v3.2h-3.2z M132.2 384.4h2.5v2.5h-2.5z M11.6 333.3h2v2h-2z M199 460.4h3.4v3.4h-3.4z M273.3 493.8h2.8v2.8h-2.8z M245.1 432.2h1.7v1.7h-1.7z M20.7 462.3h1.9v1.9h-1.9z M263.8 410.7h1.5v1.5h-1.5z M187.6 407.1h1.6v1.6h-1.6z M87.2 383.4h2.2v2.2h-2.2z M236.1 359.1h2.4v2.4h-2.4z M202.7 494.7h1.7v1.7h-1.7z M26.5 363.4h1.9v1.9h-1.9z M54.4 343.2h1.9v1.9h-1.9z M74.6 413.4h2.8v2.8h-2.8z M121.5 359.3h1.7v1.7h-1.7z M87.9 359.7h2.5v2.5h-2.5z M290.9 454.7h1.9v1.9h-1.9z M12 341.8h2.4v2.4h-2.4z M121.4 448.7h1.7v1.7h-1.7z M85 449.3h2.6v2.6h-2.6z M172.6 486.9h1.7v1.7h-1.7z M65.3 428.4h2.6v2.6h-2.6z M327.4 500.1h2.7v2.7h-2.7z M253.5 451.4h1.8v1.8h-1.8z M201.2 383.2h2.2v2.2h-2.2z M52.2 331.5h3.2v3.2h-3.2z M239.5 460.9h2.1v2.1h-2.1z M139.4 360.6h2.7v2.7h-2.7z M280.3 465.5h3.4v3.4h-3.4z M87 452h1.8v1.8h-1.8z M179.1 349.2h2.6v2.6h-2.6z M181.1 390.4h2.2v2.2h-2.2z M237.5 413.7h2.3v2.3h-2.3z M37.6 379.1h3.2v3.2h-3.2z M324.6 394.9h3.2v3.2h-3.2z M291.8 367.9h2v2h-2z M232.5 383.2h3.4v3.4h-3.4z M121.9 457.1h2.9v2.9h-2.9z M71.4 480.7h2.2v2.2h-2.2z M36.8 338.7h2.4v2.4h-2.4z M211.4 377.2h3.2v3.2h-3.2z M89.4 477.5h1.6v1.6h-1.6z M87.7 357.7h2.4v2.4h-2.4z M117.2 398.7h3.2v3.2h-3.2z M193.6 435.3h2.3v2.3h-2.3z M269.9 417.3h3v3h-3z M305.3 436.5h2.4v2.4h-2.4z M88.1 488.7h3v3h-3z M267 368.5h2.4v2.4h-2.4z M295.1 372.8h3.1v3.1h-3.1z M179.9 368.1h2.3v2.3h-2.3z M25.5 447.1h3v3h-3z M9.7 382.4h3v3h-3z M66.9 423.4h3.1v3.1h-3.1z M190.4 351.3h3.3v3.3h-3.3z M249.4 428.3h2.2v2.2h-2.2z M194.5 398.1h1.7v1.7h-1.7z M40.8 337.9h1.8v1.8h-1.8z M82 440.5h2.7v2.7h-2.7z M197.2 473h1.7v1.7h-1.7z M129.9 343.8h2.3v2.3h-2.3z M26.3 341.5h1.7v1.7h-1.7z M130.2 462.8h2.1v2.1h-2.1z M247.8 370.6h2.1v2.1h-2.1z M157.5 343h2.4v2.4h-2.4z M194.9 473.5h1.6v1.6h-1.6z M267.2 429.1h2.7v2.7h-2.7z M17.1 483.1h2.1v2.1h-2.1z M182.5 423.7h3.3v3.3h-3.3z M200.9 502.5h2v2h-2z M221.2 430.4h2.5v2.5h-2.5z M209.6 425.8h2.2v2.2h-2.2z M214.3 344.5h2.5v2.5h-2.5z M151.2 367.1h2.6v2.6h-2.6z M223.8 351.8h2.1v2.1h-2.1z M20.7 433.9h1.7v1.7h-1.7z M76.6 407.9h2.4v2.4h-2.4z M11 494.8h2v2h-2z M203.7 368.7h2.7v2.7h-2.7z M117.8 385.4h2.4v2.4h-2.4z M195.8 434.1h2.9v2.9h-2.9z M89.7 345.9h2v2h-2z M109.1 435.7h2.3v2.3h-2.3z M104 347.1h2.7v2.7h-2.7z M36.7 419.9h2.9v2.9h-2.9z M208.1 357.8h2.2v2.2h-2.2z M314.3 345.8h2.9v2.9h-2.9z M145.8 436.7h2.3v2.3h-2.3z M41.3 427.9h1.5v1.5h-1.5z M288.6 469h2.2v2.2h-2.2z M179.5 421.8h3.5v3.5h-3.5z M14.6 381.8h2.3v2.3h-2.3z M263 457h2.3v2.3h-2.3z M3.9 442.7h2.3v2.3h-2.3z M39 439.8h2.4v2.4h-2.4z M102.3 376.8h2.5v2.5h-2.5z M82.7 398.4h3.4v3.4h-3.4z M159.6 374.1h2.5v2.5h-2.5z M306.4 480.7h2.9v2.9h-2.9z M300.3 461.7h2.9v2.9h-2.9z M143 356h3v3h-3z M211.8 498.4h2.1v2.1h-2.1z M292.8 368h3.4v3.4h-3.4z M332.6 338.2h2.1v2.1h-2.1z M333.4 498.5h2.8v2.8h-2.8z M44.9 331.2h2v2h-2z M315.4 470.1h2.4v2.4h-2.4z M254.3 487h2.1v2.1h-2.1z M292 376.9h2.2v2.2h-2.2z M14.9 357.9h2.6v2.6h-2.6z M8 425h1.8v1.8h-1.8z M250.1 352.3h1.9v1.9h-1.9z M89.8 431.4h3.1v3.1h-3.1z M251.6 459h2.9v2.9h-2.9z M181.5 389.6h1.9v1.9h-1.9z M288.5 401.2h2.8v2.8h-2.8z M22.8 392.8h1.7v1.7h-1.7z M118.4 457.6h2.2v2.2h-2.2z M227.9 351.4h2.3v2.3h-2.3z M137 418.6h2v2h-2z M233.4 483.5h3.1v3.1h-3.1z M10.3 414.9h2.2v2.2h-2.2z M191.3 344.5h3v3h-3z M139.2 494.2h1.5v1.5h-1.5z M139.5 414.7h3.2v3.2h-3.2z M252.6 361.7h2.1v2.1h-2.1z M245.7 403h2v2h-2z M310.8 476.7h2.2v2.2h-2.2z M183.5 491.7h1.9v1.9h-1.9z M303.7 483.9h3v3h-3z M229.1 449.2h2.6v2.6h-2.6z M194.5 364.3h2.6v2.6h-2.6z M224.8 414.5h2.9v2.9h-2.9z M153 469.8h2.9v2.9h-2.9z M29.7 463.9h2.1v2.1h-2.1z M27.2 351.1h2.1v2.1h-2.1z M175.2 387.5h1.9v1.9h-1.9z M256.9 395h3.2v3.2h-3.2z M81.7 450h2.2v2.2h-2.2z M283.8 442.5h2.9v2.9h-2.9z M31 460.7h2.2v2.2h-2.2z M247.2 477.1h1.7v1.7h-1.7z M5.1 461.9h3.4v3.4h-3.4z M300.7 405.8h3.2v3.2h-3.2z M7.9 340.2h2.7v2.7h-2.7z M176.2 473.5h2v2h-2z M154.5 502.2h2.1v2.1h-2.1z M135.1 435.7h3.5v3.5h-3.5z M61 450.2h2.3v2.3h-2.3z M133.8 374.7h2.4v2.4h-2.4z M192 398.3h2.5v2.5h-2.5z M212.4 478.2h2.6v2.6h-2.6z M127.8 497.3h1.8v1.8h-1.8z M15.2 488.1h2v2h-2z M50.6 397h2.2v2.2h-2.2z M118.5 478.1h2.1v2.1h-2.1z M44.3 367.5h3.4v3.4h-3.4z M143.2 392.8h3.1v3.1h-3.1z M312.5 418.8h3.1v3.1h-3.1z M88.4 391h2.7v2.7h-2.7z M79 377.9h1.9v1.9h-1.9z M87.6 476h3.1v3.1h-3.1z M38.1 390.7h2.9v2.9h-2.9z M287.1 427.5h3v3h-3z M79.3 466h3.1v3.1h-3.1z M135.9 371h1.6v1.6h-1.6z M210.3 440.1h1.5v1.5h-1.5z M173.7 493.3h1.6v1.6h-1.6z M45.9 340.1h2.4v2.4h-2.4z M128.5 481.4h1.6v1.6h-1.6z M67 493.2h1.5v1.5h-1.5z M86.6 398.6h1.5v1.5h-1.5z M95.9 434.9h2.7v2.7h-2.7z M203.3 443.2h2.7v2.7h-2.7z M11.5 443.9h2.7v2.7h-2.7z M72.7 403h2v2h-2z M289.9 378.5h1.8v1.8h-1.8z M266.1 462.4h3.2v3.2h-3.2z M226.2 402.5h2.5v2.5h-2.5z M185.4 433.7h3.4v3.4h-3.4z M88.6 463.7h1.5v1.5h-1.5z M63.5 494.3h2v2h-2z M170.7 489.5h2.8v2.8h-2.8z M163.1 452.1h3.5v3.5h-3.5z M314.4 361.5h1.8v1.8h-1.8z M96.2 355.3h3v3h-3z M278.5 354.5h1.6v1.6h-1.6z M108.1 449.5h3v3h-3z M153.9 441.2h3.3v3.3h-3.3z M294 350.5h2.9v2.9h-2.9z M259.4 487.9h2.3v2.3h-2.3z M52.1 412.4h2.2v2.2h-2.2z M131.5 469.7h2.8v2.8h-2.8z M227.2 443.6h1.8v1.8h-1.8z M19.5 398.7h3.2v3.2h-3.2z M216.7 467.7h2.7v2.7h-2.7z M262 503.3h2.9v2.9h-2.9z M287.8 499.3h3v3h-3z M271.5 343.7h1.6v1.6h-1.6z M308.4 371.4h2.1v2.1h-2.1z M45.2 440.4h1.6v1.6h-1.6z M266.9 381.9h3v3h-3z M304.2 450.1h2.3v2.3h-2.3z M208.7 478.8h2.9v2.9h-2.9z M84.3 331.3h3.3v3.3h-3.3z M208.2 341h2.6v2.6h-2.6z M196.7 381h3.3v3.3h-3.3z M80.1 355h2.1v2.1h-2.1z M113 483.8h2.8v2.8h-2.8z M40.7 398.5h1.7v1.7h-1.7z M235.7 478.8h1.7v1.7h-1.7z M167 372.6h2.1v2.1h-2.1z M249.4 500h2.1v2.1h-2.1z M181.2 384h1.6v1.6h-1.6z M201.2 357h2.9v2.9h-2.9z M249.6 354.8h2.7v2.7h-2.7z M69.6 462.8h2.1v2.1h-2.1z M230.3 442.7h2.7v2.7h-2.7z M72.7 475.2h2.2v2.2h-2.2z M257.4 412.6h2.4v2.4h-2.4z M237.9 389.3h3v3h-3z M148.6 458.9h2.9v2.9h-2.9z M315.7 401.1h2.2v2.2h-2.2z M332.3 419.8h2.3v2.3h-2.3z M234 373.5h3.4v3.4h-3.4z M251.8 442.9h2.1v2.1h-2.1z M270.3 489.9h3.1v3.1h-3.1z M304.7 346h3v3h-3z M289.3 412.9h1.7v1.7h-1.7z M181.2 372.2h1.6v1.6h-1.6z M312.6 474.8h2.8v2.8h-2.8z M250 446.8h2.4v2.4h-2.4z M40.5 380.2h2.5v2.5h-2.5z M194.4 382.5h1.8v1.8h-1.8z M114.3 362.3h3.4v3.4h-3.4z M73.8 398.6h2.6v2.6h-2.6z M84.3 416.1h2.6v2.6h-2.6z M16.4 494.9h2.6v2.6h-2.6z M48.8 500.9h1.8v1.8h-1.8z M243 413.9h2v2h-2z M126.8 413.7h2.2v2.2h-2.2z M82.5 402.4h2.4v2.4h-2.4z M229.7 364.4h1.6v1.6h-1.6z M278.5 342.1h2.8v2.8h-2.8z M183.4 499.7h1.9v1.9h-1.9z M296.5 352.7h1.8v1.8h-1.8z M218.4 358.8h2.7v2.7h-2.7z M225.5 351.8h3.1v3.1h-3.1z M141.3 498.3h1.5v1.5h-1.5z M26.3 437.9h2v2h-2z M134.5 488.1h2.2v2.2h-2.2z M17.1 354.9h2.6v2.6h-2.6z M258.8 461.9h2.4v2.4h-2.4z M80 352.4h1.9v1.9h-1.9z M66.9 487.9h2.3v2.3h-2.3z M39 441h2.4v2.4h-2.4z M9.7 500.5h3.4v3.4h-3.4z M87.7 474.9h2.4v2.4h-2.4z M225 443.7h3v3h-3z M147.1 355.5h3.1v3.1h-3.1z M147.1 406.9h3v3h-3z M228.9 502.1h2.3v2.3h-2.3z M212 344.6h1.7v1.7h-1.7z M85.1 378.7h2.4v2.4h-2.4z M76.4 492.9h2.4v2.4h-2.4z M127.7 487h3.1v3.1h-3.1z M257.2 489.1h3v3h-3z M102.1 497.3h1.6v1.6h-1.6z M299.6 403h2.2v2.2h-2.2z M158.5 399.6h3.2v3.2h-3.2z M269.2 459.9h2v2h-2z M146.9 343.1h3v3h-3z M14.1 398.9h1.8v1.8h-1.8z M284.6 489.8h2.1v2.1h-2.1z M291.4 361h2.9v2.9h-2.9z M83.7 407.5h2.7v2.7h-2.7z M117.3 364.4h2.7v2.7h-2.7z M265.2 503.3h2.1v2.1h-2.1z M86 343.3h1.9v1.9h-1.9z M8.7 373.4h3v3h-3z M38.3 442.5h2.1v2.1h-2.1z M76.4 414.1h2.4v2.4h-2.4z M149.2 350.5h2.6v2.6h-2.6z M301.3 331.6h1.7v1.7h-1.7z M195.7 385.4h2v2h-2z M330 383.6h3.3v3.3h-3.3z M206 335.3h2v2h-2z M25.3 423.6h3.3v3.3h-3.3z M17.6 334.9h1.6v1.6h-1.6z M91.2 358.9h3.4v3.4h-3.4z M258.9 493.4h2.7v2.7h-2.7z M274.2 453.3h2.1v2.1h-2.1z M218 380.3h2.4v2.4h-2.4z M274.8 368.4h1.8v1.8h-1.8z M284.4 410.6h1.8v1.8h-1.8z M106.2 378.8h3.3v3.3h-3.3z M157.9 490.1h2.4v2.4h-2.4z M313.8 489.5h2.6v2.6h-2.6z M262.6 380h1.7v1.7h-1.7z M201.8 339.6h2.4v2.4h-2.4z M207.1 463.6h3.3v3.3h-3.3z M68.2 480.6h2.5v2.5h-2.5z M208 410.4h3.2v3.2h-3.2z M100.2 331.4h3.2v3.2h-3.2z M221 454.7h1.7v1.7h-1.7z M68.9 438.8h3v3h-3z M220.8 433.7h2.8v2.8h-2.8z M49.4 408.4h2.2v2.2h-2.2z M245.9 420h2.9v2.9h-2.9z M232.1 487.5h3.2v3.2h-3.2z M17.2 446.2h2.2v2.2h-2.2z M33.7 413.2h3.2v3.2h-3.2z M266 348.4h1.9v1.9h-1.9z M232.1 498.5h1.7v1.7h-1.7z M29.6 451h2.7v2.7h-2.7z M270.9 364.5h2.5v2.5h-2.5z M267.5 396.5h2.3v2.3h-2.3z M11 468.8h2.4v2.4h-2.4z M126.3 444h3.2v3.2h-3.2z M289.3 389.6h2.7v2.7h-2.7z M129.4 476h3.1v3.1h-3.1z M221 473.3h2.5v2.5h-2.5z M190.7 358.3h2.9v2.9h-2.9z M96.2 427.8h1.5v1.5h-1.5z M132.7 437.2h2.8v2.8h-2.8z M188.3 373.9h2.8v2.8h-2.8z M220.8 432.7h2.3v2.3h-2.3z M50.8 426.8h1.6v1.6h-1.6z M306 391.4h2.1v2.1h-2.1z M150.5 348.1h3.3v3.3h-3.3z M327.2 473.2h2.6v2.6h-2.6z M314.2 387.5h2.4v2.4h-2.4z M57.3 403.9h3.4v3.4h-3.4z M221.6 424.9h2.6v2.6h-2.6z M212.1 436.1h2.4v2.4h-2.4z M170.6 347.6h2.4v2.4h-2.4z M225.4 368.9h2.1v2.1h-2.1z M268.8 353.6h1.9v1.9h-1.9z M273.4 351h2.1v2.1h-2.1z M304.1 401.9h3.1v3.1h-3.1z M255.4 333.5h1.9v1.9h-1.9z M304.6 385.9h2.3v2.3h-2.3z M312.2 349.1h3.4v3.4h-3.4z M216 439.4h1.5v1.5h-1.5z M210.7 473.1h2.3v2.3h-2.3z M24.4 353h1.7v1.7h-1.7z M138.6 472.2h1.6v1.6h-1.6z M135.5 399.7h2.3v2.3h-2.3z M175.9 423.1h1.9v1.9h-1.9z M265.3 420h2.2v2.2h-2.2z M322 452.8h1.8v1.8h-1.8z M323.7 430.6h2.2v2.2h-2.2z M79.3 341.8h2v2h-2z M96.5 389.9h3.5v3.5h-3.5z M197.9 363.4h2.2v2.2h-2.2z M144.4 344.5h2.4v2.4h-2.4z" fill="#5a1004" opacity="0.35"/>
<path d="M91.8 495.6Q87.1 474.5 77.4 461.2 M104.8 371.2Q105.7 357.6 93.4 347.3 M175.1 349Q175.5 338.6 168.2 326.7 M164.4 441.1Q152.5 419.2 157 405.2 M137.6 497.5Q131.2 473.7 116.6 454.9 M83.3 401.8Q74.3 375.5 56.8 358.6 M40 470.9Q31 461.4 18 452.3 M41.6 319.2Q38.2 306.3 43.2 297.4 M53.3 267.8Q41.7 242.4 25.9 221.4 M56.6 386.8Q48.8 373.6 44.5 355.9 M-18 254.1Q-37.7 242.7 -44.8 224 M95.4 424Q70.8 415.9 57 397.1 M78.2 460.3Q67.8 447.8 60.9 437.5 M176.7 497Q170.8 484.7 163 474.2 M196.4 489.5Q184.4 465.4 164.8 450 M195.6 444.8Q192.8 436.6 180.3 429.2 M116.9 260.2Q93.3 241.3 80.8 219 M24.3 470.2Q19.9 464.6 13.4 450.1 M30.7 389Q25 373.9 15.2 366.8 M113.9 372.4Q106.4 358.9 104 345.5 M-16.1 495.4Q-12.5 463.9 -33.2 442.6 M70.9 253.5Q58.5 236.3 53.7 220.3 M-5.1 480.6Q-18 464 -22.7 443.7 M53.9 324.1Q42.3 309.8 26.2 297.9 M79 393.7Q63.3 368 60.1 344.5 M78.6 467.8Q62.9 443.4 61.9 416.9 M38.2 301.8Q18.8 297.4 12.3 283.2 M64.2 299.8Q47.2 278.2 36.7 267 M195.2 481.9Q189.6 472.4 176.8 446.8 M142.3 287.2Q126.3 272.5 107.8 257 M45.6 296.4Q37.9 284.3 26.1 271.7 M-5 340.2Q-8.7 315.9 -18.6 297.8 M105.5 343.1Q88.1 323.9 71.2 304.3 M150.7 276.6Q140.8 250.2 133.1 237.1 M16.5 392.8Q8.3 375.7 -8.1 358.3 M136.7 280.8Q122.7 270.4 110.5 258 M103.7 433.1Q96.2 417.4 70.5 399.8 M-15.7 301.8Q-20.4 294.1 -27.6 274.3 M105.4 473Q96.9 463 92.5 454 M106.5 357.9Q95.3 324.1 84.8 306.1 M63 480.4Q48.5 457.8 34.4 446.2 M129 283.8Q125.2 268.2 118.5 263.3 M145.7 372.9Q141.3 357.6 132.2 344.6 M110.1 295.5Q101.4 271.8 86 241.9 M27.2 335.9Q21.8 322 7.3 297.9 M118.6 399.5Q113.4 382 109 369.1 M9.6 421.7Q0.5 409.6 0.9 402.8 M148.8 434.5Q153.5 419.1 149.5 404.4 M186 314.4Q163.5 296.1 140.3 277.5 M0.7 403.7Q-3.1 390.5 -14.4 379.6 M-17.4 436.8Q-24.5 413.5 -30.9 393.4 M-14.8 498.1Q-25.4 466.9 -26.7 448.9 M145.2 316Q144.5 290 133.7 269.8 M176.9 378.9Q165.8 358.7 167 354.8 M58.5 459.7Q64.8 434.7 59.4 421.6 M78.6 423.1Q58.8 406 43 392.1 M149.3 461.4Q142.7 441.1 135.2 414.3 M142.8 411Q141 389.9 123.9 366.9 M18.9 389.5Q9.1 374.2 -6.7 355.1 M50.7 370.2Q47.3 353.9 36.2 350.5 M31.2 349.7Q22.9 332.1 13.3 307.1 M-5.6 338.6Q-16.1 321.7 -28.5 304.4 M7.3 412.7Q-6.9 396.5 -30.7 379.5 M-13.7 434.3Q-23.5 431 -33.4 424.6 M-10.7 260.1Q-19.6 241 -27 222.9 M150.1 337.6Q135.3 318 119.1 300.1 M23.5 360.2Q22.5 339.3 15.8 321 M28.9 434Q27.7 420.2 21 414.7 M144.6 375.3Q120.9 358.8 106.2 341.2 M193.8 333.5Q192.3 324.6 188.1 311.2 M105.6 331.5Q96.1 323.4 90.9 309.4 M45.7 488.7Q34.7 477.4 27.2 456.7 M93.3 356Q78.1 339.9 71.2 345.2 M-19 405.9Q-30.4 396.5 -35.3 372.6 M68 286Q57.4 264.9 50.3 247.2 M67 393.6Q60.1 377.8 61 370.7 M-5.3 289.6Q-19.4 266.6 -34 248 M163.3 433.5Q153.5 413.5 137.6 393.1 M57.9 313.2Q49.5 286.9 30.2 262.6 M137.8 376.5Q131.1 357.6 117.3 344 M179.6 497.4Q166.8 478.7 161.4 460.8 M134.2 347.9Q125.6 317.1 109.6 294 M173.2 392.2Q165.4 380 163.3 369.4 M197.8 404.8Q183.2 379.4 175.9 358.4 M24.8 291.3Q12.7 283.2 9.5 262.8 M143.8 490.7Q131.7 481.3 116.9 467.7 M63.1 333.1Q60 326.8 55.2 306.6 M111.2 266.1Q97.7 253.5 88.3 236.7 M0.6 378Q-12 351.4 -26.4 327 M41.7 492.6Q23.7 470 8.5 446.1 M126.2 490Q117.8 475.5 111.7 459.2 M164.8 373.6Q156.8 349.5 146.9 339.3 M53.4 329.6Q51.7 313.7 38.9 299.6 M113.2 477.8Q112.2 460.8 91.6 441.2 M117.9 270.3Q107.9 244.9 95.6 223.7 M67.7 459.2Q65.6 445.9 56.1 429.5 M52.4 288.8Q38.1 266.5 38.5 240.3 M30.6 368.2Q16.1 361.3 -2 340.6 M170.7 510.1Q158.5 494.2 140 480.8 M9.6 423.1Q2.3 397.9 -6.5 385.1 M56.2 519.9Q50.1 504.3 48.4 489.8 M69.4 428.7Q51.6 411.2 42.3 386.6 M42 414.5Q28.4 398.3 11.1 374.8 M103.8 499.4Q84.6 482.3 72 463.5 M130.3 516.8Q122.9 497.7 110 473.5 M-11.7 270.5Q-19.6 255.8 -22.2 233.3 M44.5 288.3Q37.2 272.8 17.8 263.8 M63.6 462.6Q56.3 451.6 48.4 428.9 M150.9 507.6Q143.3 494.2 137.8 487.4 M80.4 369.5Q83.5 353.3 77.2 342.6 M99.5 442.5Q86.6 419.8 78.3 397.5 M11.1 274.1Q17.2 259.6 16.3 236.3 M93.3 295.4Q88.2 284.8 79.5 274.9 M82.2 486.3Q67.4 477.2 53 456.7 M-0.9 307.4Q-3.2 284 -14.3 278.3 M66.8 308.8Q59.6 276.5 42.6 255.9 M87.8 458.3Q82.5 446.7 58.9 430 M153.9 293.1Q150.7 265 151.1 233.9 M82.4 507.2Q76.9 493.5 76.7 483.1 M189.2 400.3Q173.9 385.6 168.9 375.7 M62.1 289.3Q58.6 279.8 51.4 269.2 M83.2 322.7Q68.3 300.6 64.3 269.9 M127.6 315.2Q112 291.1 93.3 268.3 M108.2 311.9Q92.9 282.7 90.7 267.1 M177.1 413Q159.3 386 152.8 367.3 M114.4 410.9Q109.1 379.9 92.9 356.9 M102.2 485.4Q80.5 457.5 77.7 437.7 M120.6 466.7Q115 450 107.1 442.3 M140.7 502.3Q133.7 490.1 123.7 476 M160.6 305.2Q161.2 293 149.1 282.6 M72.8 299Q59.3 274.1 50.9 252.7 M93.5 281.1Q82.3 260.6 73.8 224.8 M88.3 474Q90.8 455.6 88.1 432.6 M41.7 421.6Q30 406.7 25.1 381.8 M126.2 478.9Q119 460.2 105.5 446 M130.1 277.4Q111.5 250.1 91.6 243.3 M-18.7 336.2Q-29.6 318.9 -31.8 289 M110.7 269.7Q101.8 258.8 93.2 246.5 M112.2 412.7Q97.1 390.6 74.4 371.3 M22.7 439.9Q22.8 426.7 16.4 417.7 M25 266.6Q21.8 251.7 4.4 234.9 M119.8 262Q106.8 235.7 99.2 228.4 M85 269.2Q65.5 244.8 58.1 225.3 M154.1 354.3Q151.6 341.8 149.6 332.3 M116.4 485.8Q105.1 474.5 100.2 468.8 M37 321.6Q30.9 305.9 13.5 276.6 M150.3 334.8Q145.1 326.9 135.1 318.7 M140.2 418.3Q127.9 410.1 115.4 393.9 M189.3 342Q172.8 334.5 172 326 M14 307.2Q7.8 280.1 1.7 254.7 M39.6 280.4Q26 255.6 15.2 232.7 M-4.6 259.8Q-11.2 243.9 -28.8 218.6 M54.9 386.9Q49.9 376.6 38.3 363.5 M184.8 387.1Q167.1 356.3 161.1 333 M33.5 417.6Q22.3 390.5 9.6 367.5 M21.3 364.9Q19.1 349.8 15.3 333.9 M101.7 386.1Q107.6 364.2 94.6 351.4 M-4.4 368.6Q-13.7 349.3 -19.3 349.3 M61.9 284.3Q49.6 269.4 35.1 235.8 M38.2 373.1Q26.9 351.5 18 331.1 M-0.7 313.5Q-8.2 286.2 -19.5 264.3 M124.7 316.8Q113.6 300.6 100.3 275 M14.5 437.6Q6.7 424.5 2.1 408.8 M136.4 507.9Q118.4 486.3 105.1 467.2 M155 281.5Q139.1 265.7 128.4 262.4 M-8.1 284.6Q-25.6 272.3 -28.4 258.4 M162 512.6Q153.5 504.5 147.8 495.8 M162.9 282.2Q160.5 265.7 158.5 247.1 M63.4 403.6Q55.6 389.4 46.3 369 M4.8 448.4Q-9.8 424.9 -26 406.8 M102.5 376.5Q90.6 360.1 80.6 342.6 M173.2 376.7Q170.5 373 161.4 358 M159 409.5Q151.8 395 148.3 384.9 M135.9 422.9Q139.2 402.6 128 393.7 M146.9 425.5Q147.3 397.6 147.5 366 M74.7 341.8Q65.8 312.2 61.7 303.3 M109.6 297.4Q91.5 290.1 87.1 282.2 M87.2 264.7Q64.7 252 35.2 239.9 M88.2 295.4Q84.5 281 72.2 264.1 M65.7 280.3Q63.5 261.8 45.5 242.3 M63.1 432.4Q52.6 425.4 46.5 404.5 M134.7 427.2Q124.7 411.4 120.2 371.7 M8.3 518.8Q2 500.3 -14.4 477.1 M180.9 350.7Q164.4 325.8 151.6 301.9 M84.8 400.2Q77.9 384.2 59.8 368.2 M4.4 306.8Q4.3 290.1 -4.7 281.4 M128.2 485.3Q104.7 462.5 91.5 441.8 M-16.8 431.9Q-25.9 418 -31.5 396.7 M174.5 411.6Q162.4 397.9 157.2 382.5 M-3.9 464.3Q-15.5 436.4 -33.7 417.7 M30.7 510.8Q22.9 493.4 16.1 480.7 M112.3 250.1Q105.8 230.5 101.5 211.5 M156.4 485.4Q149.5 473.3 141 453.9 M190 380.2Q185.8 373.6 175.5 353.6 M9.5 458.5Q-1.1 448.7 -6.6 441.3 M10.2 464Q4.9 438.3 4 412.9 M100.9 438.6Q94.8 416.1 80.8 392.4 M110.1 443.8Q95 428.9 86 422.2 M193.1 335.8Q178.1 317.5 163.7 300.2 M116.8 484.8Q117.8 454.6 96 430 M185.6 313.7Q167.5 294.2 143.3 277.8 M-3.5 275.9Q-7.4 262.3 -19.2 251.1 M2.8 302.1Q-14.9 291.6 -38 277.3 M144.1 382.7Q136.2 355.5 118.3 341.2 M110.3 407.1Q94.2 381.8 82 360.2 M-7 489Q-19.2 459.1 -31.7 437.3 M59.4 440.6Q49.1 428 35.5 410.7 M48.2 512.1Q52.1 488.3 52.3 470.7 M139.4 485Q131.8 471.1 117.3 445.8 M148.1 303.5Q143.6 284.4 138.3 274.8 M58.4 412.7Q55.2 395.8 49.4 376.4 M-16.1 483.3Q-30.8 459.1 -48.1 459.2 M89.4 511.1Q74.2 489.8 58.9 467.2 M85.1 298.5Q77.2 288.1 67.5 275 M14.8 333.4Q5.4 317.7 1.1 309.7 M-5.2 458.8Q-22.7 436.4 -32.6 408.5 M171.2 344.9Q173.3 334.7 159.7 325.7 M196.2 443.4Q194.3 426.6 185.7 401.9 M197.8 294.5Q187.3 273.2 179.1 247.3 M6.7 344.6Q1.9 329.9 -6.1 313.8 M43.4 353.6Q38.5 335.7 23.2 325.6 M187 381.9Q183.5 362.5 179.6 340.2 M4.3 465Q-16.8 442 -32.4 430.9 M166.6 264.9Q156.8 246.5 146.5 223.4 M16 451.1Q6.9 438.7 1.3 432.4 M101.7 285.1Q85.5 263.1 66.5 246.4 M116.7 411.3Q105 395.3 104.1 378.1 M-14.7 399.8Q-20.4 376.6 -28.4 356.5 M48.4 495Q46.8 488.6 39.1 469.4 M-4.2 309.9Q-20.1 291.1 -17.6 272.4 M28.9 509.9Q20.4 486.1 5.9 474.5 M149.4 396.4Q141.5 372.9 123.4 347.5 M62.9 292.5Q49.2 268.1 30.2 242.8 M-3.4 497.9Q-12.8 479.6 -25.5 452.1 M16.3 359.7Q4.5 333 1.2 317.8 M125.6 293Q125.2 288.8 114.3 275 M-5.5 427.9Q-14 416.6 -27.7 406.3 M123.2 447.7Q116 424.6 112.1 410.9 M-5.5 496Q-15.1 491.1 -25.5 466.9 M150.9 299.5Q134.7 269.7 128.1 254 M166.2 362.8Q144.6 341.5 130.6 323.5 M175.2 311.7Q166.3 289.1 158.5 277.5 M112.5 352.4Q95.5 333.9 73.2 319.2 M68.2 371.1Q59.7 364.5 52.4 352.3 M15.6 348.8Q9.9 325.5 -4.9 306.6 M42.1 508.1Q26.5 493.6 14.8 477.7 M39.1 419.1Q24.7 408.2 16.4 389.2 M169.4 394.7Q159.9 377.3 153.1 370.5 M124.3 328.9Q113.6 303.5 105.2 287.4 M37.4 353.7Q35.9 325.4 29.3 299.1 M-15.2 452.2Q-30.6 431.4 -38.3 414.5 M124.3 374.2Q111.1 351.8 96.9 332.4 M92.5 417.7Q86.7 407.6 72.9 396.6 M139.8 280.2Q128.4 265.4 132 261.2 M52.7 285.5Q37.9 270.3 31.3 258.8 M26.2 283.6Q24.5 269.6 6.7 257.4 M72.8 310.9Q76.7 299.2 65.1 278.8 M131.1 317.3Q120.2 294.2 107.4 265.2 M98.9 403.7Q96 390.7 86.2 373.3 M160.4 467.3Q154.8 449.3 148 443.1 M150.9 353.1Q145.5 345.4 135.9 332.3 M71.2 473.1Q59.3 446.6 54.2 428 M64.1 382.2Q45.3 365.6 32.6 343.6 M181.5 346.2Q167.3 326.1 157.2 318.8 M30.6 492.6Q20.6 481.6 16.4 477.7 M-16.3 424.6Q-27.6 406 -33.1 384.7 M71 391.8Q58.8 369.1 43.1 343.5 M120.2 286.4Q105.4 267.8 108.5 267.3 M39.8 496.4Q33.8 470.7 19.4 448 M67.5 484.5Q62.8 470.8 57.7 464.8 M189.8 451.4Q178.1 439.3 171.9 424.5 M158.3 377.3Q148.4 356.1 144.1 346.9 M170.8 372.3Q157 348.1 156.6 327.6 M122.1 357.6Q119.8 339.9 120.8 319.2 M8.7 278.3Q7.1 267.1 -1.6 258.7 M46.4 356.6Q32.3 344.4 13.5 337.3 M17.3 375.7Q18.8 354.9 2.1 339.7 M32.8 360.1Q19.7 342.1 8 327.2 M-9 341.8Q-13.6 321.5 -23.5 300 M191.3 438.9Q183.6 409.4 164.8 386.2 M69.7 399.4Q59.7 398.3 56.8 382.9 M75.4 490.1Q59.2 471.9 57.6 467.9 M-9.7 455.2Q-17.7 428.9 -29.9 401.3 M195.3 287.7Q167.1 275.9 156.3 248.8 M101.5 427.7Q99 414.3 92.9 399.1 M161.8 342.2Q149.2 307.7 131.9 295.7 M120.1 462.3Q106.7 439.4 90.7 415.7 M91.4 288.2Q84.2 266.2 69.1 257.7 M174.7 392.2Q170.5 378.2 155.7 365.2 M132.6 450Q123.5 437.2 109.6 408 M35.1 405.9Q23.8 391.8 13 377.9 M98.3 269.3Q93 250.5 76.8 239.3 M189.2 278.1Q183.6 257.8 167.1 234.6 M90.1 421.2Q89.9 403.8 77.3 389 M-13.5 512.2Q-16.3 505.3 -26.6 495.6 M184.5 282.5Q181 268.6 178 253.6 M17.2 363.6Q-9.3 349.3 -22.8 334.5 M143.3 495.6Q139.1 487.2 128.6 481.2 M117.9 325.3Q98.1 298.4 83 281.8 M162.9 354.4Q144.8 336.2 117.4 318.6" fill="none" stroke="#e87a28" stroke-width="1.3" opacity="0.6"/>
<path d="M10.8 517Q8.4 507.8 -1.2 500.5 M162.7 449.4Q156.6 441.4 153.4 425.2 M175.8 303.1Q180 288 168 280.4 M131.6 435.3Q130.5 422.3 127.1 402.3 M-3.1 334.2Q-1.3 323.9 -10.9 314.7 M142.7 513.1Q139 497.8 140.9 495.1 M54.7 472.2Q55.1 461.5 44.1 451.8 M169.2 489.6Q165.4 467.8 155.5 451.9 M197 409.8Q195.7 398 198.6 385.9 M186.8 427.2Q182.4 408.1 170 391.3 M42.6 366.5Q34.3 352.7 24.1 341.1 M120.9 515.5Q118.8 508.5 113 499 M0.2 365.5Q3.2 350.2 -10 331.5 M188.5 364.5Q179.5 347.4 168.6 332.9 M166 427.5Q167.4 410.4 158.4 391.8 M117.2 431.1Q108.8 415.5 104.4 403.5 M136.9 455.9Q131.6 442.1 131.4 431.6 M158.4 469.2Q147.3 450.2 139.8 440.4 M169.5 458.3Q159.4 446.7 157.1 429 M116.7 352Q111.6 344 105.1 334.2 M85.6 355Q78.1 344.1 74.2 321.6 M103.7 304.2Q100.3 291 101 285.3 M83.8 338.5Q79.9 323.5 75.8 295.3 M131.2 477.9Q121.2 466.8 121.2 455 M66.4 364.9Q56.3 352.4 41.8 329.8 M109.7 356.3Q98 348 89.2 330.6 M65.8 456.7Q65.1 441.1 58.7 437 M-7.4 393.6Q-9.8 381.3 -12 370.9 M128.2 425.6Q124.2 418.4 121.9 410.1 M104.3 353.3Q87.1 333.7 76.2 318.6 M17.9 340.6Q10.8 318.5 5.9 311.4 M89.5 445.1Q99.2 431.8 86.5 417.8 M50.7 335.3Q40.1 314 38.2 293.6 M91 482.7Q81.3 473 89.6 462.1 M11.5 482.7Q11.7 471.7 2.1 465.4 M54.9 458.9Q53.2 440 50.1 428.5 M88.4 391.8Q92 374.7 84.4 349.4 M179.9 442.3Q173.8 435.2 169.6 413.4 M43.5 404.3Q37.4 389.5 34.7 377.9 M177.9 413.2Q181.3 398.3 179.3 389.4 M160.7 431Q159 414.1 150 408.5 M40.6 376.5Q41.3 367.2 34.2 359.2 M183.8 511Q179.1 501.2 173.8 495.9 M117.7 412.9Q109.4 402.3 103.4 394.4 M151.2 318.8Q150.3 306.1 143 274.6 M73.3 485Q69.1 465.6 61.1 455.6 M13.7 469.8Q17.5 461.2 12.4 449.1 M156.3 483.9Q145 475.5 141.2 461.5 M39 323Q40.7 310.3 29.5 288.7 M43.4 412.5Q34.8 400.4 28.5 384.3 M134.1 346.3Q127.2 331.2 121.8 307.1 M79.3 404.7Q75.1 385.5 64.6 377.7 M165.6 357.5Q151.1 334.8 152.2 322.4 M-3.5 504Q-7.5 489.1 -13.3 465.9 M110.1 351Q113.8 330 109.9 316.8 M47.3 305Q38.1 296.8 32.6 283.4 M41.6 320.9Q34.9 309.5 36.1 295.9 M-1.4 328.1Q2.5 320.9 -3.1 302.1 M161.5 519.2Q162.1 505.1 154.9 491.9 M72.6 504.4Q69.6 490.4 68 486.3 M153.6 493.2Q154.9 476.4 150.2 459.3 M67 439.9Q64.8 418.9 61.2 404.5 M99.8 345.6Q93.6 316 90.1 303.6 M-19.7 421.4Q-23.6 400.6 -35.8 388.5 M139.2 498.4Q135.3 486.5 135.3 476.9 M63.4 303.7Q59.8 291.9 50.3 281.7 M2.9 421.5Q0.3 410.3 -5.3 395.7 M69.2 363.4Q76.6 354.2 66.5 348.4 M149.8 309.2Q152.3 291.2 144.8 273.4 M38.1 395.9Q45.2 367.5 39.8 353.4 M129.6 479Q124.4 458.1 120.5 439.9 M144.3 447.1Q135.9 436.4 128.3 424.7 M174.6 417Q163.5 406.4 160.7 394.5 M198.5 420.7Q188 405.1 191.9 397.4 M123.9 305.6Q113.7 289.1 112.9 277 M-14.9 342.7Q-16 328.1 -28.9 308.2 M82.1 430.4Q74.9 427.7 77.1 415.6 M20.4 452.5Q16.6 432.7 11.2 410.7 M117 340.1Q117.2 327.6 108.2 313.1 M94.6 478.8Q77 454.8 67.5 447.4 M80.3 421.5Q80.2 404 84.8 386.5 M113.6 381.2Q109.3 366.9 102.7 359.3 M25 500.5Q15.7 487.7 12.3 477.2 M55.1 428.7Q54.5 418 53.4 404.4 M185.3 461.6Q175.9 446.7 170.1 438.6 M116.6 515.1Q111.9 509.5 111.4 490 M193.9 391.3Q189.5 375.6 185.9 362.5 M91.1 321.6Q91.9 305.8 79.7 282.8 M138.1 371.2Q140.5 358.6 137.5 343 M181.7 399.9Q174.7 393.4 173.3 379.7 M-7 402.1Q-8.2 396.6 -12 386.8 M28.3 466.5Q19.2 448.4 14.8 426.8 M-12.2 516.3Q-15 504.5 -22.8 494.3 M56.9 454.5Q49.3 436.7 40.5 419.6 M62.1 379.7Q68.1 366.6 62.1 356.2 M44.3 327.2Q42 319.4 29.6 305.8 M45 388.5Q38.8 368.7 34.8 346.2 M173.5 360.9Q169.5 335.2 168.7 318.3 M141.1 349.6Q137.7 330.7 132.3 322.8 M173.1 360.9Q165.9 341.4 164.3 320.1 M137.7 437.9Q129.4 427.5 123.8 416.6 M179.7 373.6Q181.6 361.3 177.4 353.6 M164.5 353Q162 328.1 153.1 315.1 M83.4 343.4Q80.3 331.6 76.9 321.7 M78.3 486.9Q80.3 475.2 74.3 467.3 M115.9 403.8Q109.8 388.1 101.7 379.8 M-10.3 507.3Q-12.3 498.6 -19.3 488.6 M123.1 433.3Q115 421.3 106.4 406.5 M180.6 508.8Q176.5 501.1 177 490.5 M187.6 452Q185.4 442.6 177 424.6 M163.3 489.4Q152.9 482.1 131.8 464.5 M101.3 513Q90.5 503 97.7 496.7 M9.5 372Q-9.6 350.8 -6.4 331.1 M156.5 301.2Q154.3 297.9 149.9 280.6 M191 381.3Q179.8 374.6 179.9 361 M161.4 436.9Q155.5 431.5 154.7 422.3 M-13.9 452.7Q-16.4 437.7 -23.1 432.1 M42.9 356.4Q37.4 341.9 34.4 341.7 M191.8 426.9Q193 412.7 180.8 395.4 M113.3 380.8Q113.5 360.7 111.2 350.9 M112.2 362.4Q105.4 357.9 102.2 340.2 M198.9 336.3Q195 327.7 198.8 302.8 M75.5 403.1Q65.2 380.5 49.6 366.9 M166.8 453.8Q163.6 441.9 158.9 430.8 M178 460.1Q171.5 440.5 166.9 425.5 M177.1 464.2Q171.9 442.3 156.5 428 M41.4 355.3Q36.9 343.1 32.2 313.8 M172.8 303Q160.7 292.3 155.7 273.9 M122.2 518.4Q113.9 499.9 117.1 483 M5.8 360.7Q-4.2 342.7 -9.3 329.7 M182.7 473.8Q186.2 461.7 185.2 447.5 M199.2 440.7Q188.9 422.2 187.3 399.5 M135.5 503.9Q132.6 495.4 126 477.5 M80.6 476.4Q76.1 456.9 68.8 433.5 M47.7 356.8Q43.3 348 40.5 336.8 M13.2 459.6Q17.3 446.3 5.4 432.8 M81.6 436.3Q83.3 423.6 78.4 412.3 M69.8 384.1Q69.1 367 62.1 360.6 M149.5 436.4Q147.3 438.2 147.2 421.2 M107.6 303.4Q97.6 279.2 91.3 266.6 M18.9 403.6Q12 388 15.1 373.2 M32.2 386.7Q24.7 369.5 17.1 345.6 M160.9 491.5Q157.8 485.8 154.6 474.3 M76.7 364.9Q64.9 350.8 67.1 329 M72.6 395.4Q65.1 374.1 56.3 354.1 M185.5 431.3Q183.7 416.4 183.2 387.7 M161.5 322.8Q144.8 312.4 146.1 300.5 M72.5 410.4Q65.5 395.9 70.6 395.5 M94 415.9Q84.1 407.7 86.9 400.2 M28 426.1Q25.9 418.8 20.5 409.9 M77.8 456.8Q79.3 445.1 74.5 436.7 M62.5 440.5Q71.2 427 61.7 422.2 M63.6 433Q57.6 422.3 42.4 405.5 M83.3 303.3Q87.6 284.3 85.2 264.2 M119.3 512.2Q106.8 499 104 477.3 M46.5 360.7Q46.5 342.9 37.4 333.9 M136.5 373.7Q129.6 358.5 121.7 348.6 M31 407.7Q25.8 388.2 18.7 372.5 M124.4 479.3Q121 463.8 122.2 456.7 M152.9 365.7Q145 350.6 140.8 330.8 M156.4 353.8Q153.4 334.8 146.6 320.2 M138 439.2Q126.3 430.6 126.6 426.7 M195.9 352.8Q189.4 337.3 181.7 328.9 M103.1 352.4Q104.2 343.9 96.9 332.1 M125.8 487.2Q131.5 476.5 117.7 459 M23.8 412.3Q13.8 402.1 15.9 390.1 M81.6 486.8Q88.4 465.8 77.6 458.1 M48.2 424.5Q45.4 410.7 45.2 401.6 M-1.9 480.9Q-14.5 460.8 -15.8 441.2 M71 387.5Q71.9 372.6 66.4 355.3 M135.2 394.7Q122.2 385.1 119.9 368.4 M110 366.7Q103.6 356.7 106.3 337.5 M36.7 362.8Q39.8 348.7 30.3 334.3 M150.6 336.5Q144.4 328.5 138.7 321.4 M-11.5 325.6Q-17.5 318.3 -15.8 300.1 M158.3 307.8Q152 298.8 147.4 285.1 M164.3 475.3Q159 458.5 155.1 446.9 M191.9 347Q196.1 325.4 189.1 312.3 M62.4 397.3Q64.2 389.5 63.6 368.1 M150.1 380.2Q144.2 362.1 133.1 351 M-16.9 440.7Q-25.5 427 -27.8 423.1 M164.3 375.6Q152.8 364.9 151.4 348.4 M159 407.4Q154.8 395.1 151.6 377.5 M74.1 417.3Q72.9 403.9 76.3 376.1 M155.9 514Q140.1 495.3 138.3 481.2 M28.2 493.7Q17.7 471.4 15.4 454.6 M-3.3 409.1Q-9.7 401.7 -8.8 388.9 M164.8 362.8Q149.2 354.1 146.3 334.4 M115.8 405.8Q119.7 389.1 115.2 368.7 M-5.7 382.4Q-11.6 368.1 -19.8 347.6 M88.2 315.3Q86.5 306.6 81.1 296.6 M131.4 493.6Q115.2 479 112.3 458 M44.1 309.4Q40.8 286.3 39.2 279.8 M127.7 334.6Q124 326.5 125.2 319.2 M134.6 340Q139 333.5 134.3 312 M-18.1 305.9Q-21.2 289.2 -25.5 273.4 M93.6 340.9Q89.7 323.7 88.2 317.9 M35.8 485.8Q25.4 481.2 21.8 470.3 M9.7 356.9Q1.7 348.9 1.8 331.6 M59.4 418.2Q58.5 407.3 57.5 396.5" fill="none" stroke="#8a2208" stroke-width="1.2" opacity="0.35"/>
<path d="M334.5 392.9Q357.4 378.6 383.8 359.8 M268.4 383.9Q285.7 369.9 301.7 354.9 M181.9 351.1Q195 337.5 212 325.1 M229.1 342.3Q257.5 324.2 279 298.5 M343.6 502.5Q369.7 489.8 387.1 470.4 M328.5 494.1Q346.3 462.5 356 442.1 M343.9 440Q372.5 414.7 397.6 399.4 M290.1 409Q304.6 388.9 324.2 374.8 M220.5 362.2Q224.2 352 240.8 325.3 M324.9 383.6Q337 373.8 354.9 359.4 M220.5 420.9Q233 397.1 246.5 367.2 M329.9 461.5Q339.4 442 346.2 440.6 M184.3 384.1Q199.1 367 212.2 351.1 M175.8 477.1Q193.4 454.8 210.9 440.8 M262.5 439.1Q281.5 422.6 299.6 397.5 M181.2 410.3Q199.4 394 219.6 364.1 M309.6 481.1Q334 462.8 365.3 441.6 M222.4 517.1Q237.5 506.1 251 488.9 M186.4 451.2Q191 443.7 206.6 434.6 M204.7 512.9Q214 500.4 216.7 480.9 M283.6 421.6Q289.6 409.7 304 391.5 M295.7 435.2Q311.4 411.8 337.5 379.2 M200.1 413.4Q206.5 408 215.7 393.8 M228.6 362.9Q233.2 341 249 325 M327.8 371.4Q352.2 348.5 372.1 338.8 M303.6 368.4Q319 348.7 330.2 331 M271.3 509.6Q291.5 498.2 297.9 487.6 M298.4 392.7Q330.5 367.2 342.1 341.3 M242.2 424.9Q253.7 416.3 271.1 396.5 M216.1 388.7Q217.2 377.1 235.2 351.3 M245 344.8Q258.2 338.9 283.2 314.9 M285.6 429.5Q291.8 422.1 306 407.4 M337.3 470.3Q348.9 450.5 355.5 434.1 M190.9 388Q214 356.7 226.8 329.4 M261.2 423.4Q283.9 397.8 302.1 370.7 M189.3 424.8Q201.6 403.7 222.2 383 M268.9 405.2Q285 391.4 308.2 367.4 M242.5 374.7Q251.8 359.9 260 348.9 M256.3 402.9Q272 378.9 292.9 358 M260 483.2Q264.1 479.4 278.9 461.9 M238.2 421.7Q250 413 262.9 396.3 M204.4 470.3Q217.4 451.2 219.7 432.5 M348.2 383.6Q360.5 357 378.6 326.6 M206.1 411.7Q216.4 398.8 223.7 382.2 M272.9 482.1Q297 450.5 311.5 425.1 M280 358Q310.8 333.7 326 314.8 M251 512.3Q264.3 501 273.5 486.9 M171.7 492.7Q180.3 473.5 184.3 452.8 M271.5 352.9Q280.7 337.7 286.6 317.4 M258.3 398.6Q272.4 377.1 290 356.2 M221.4 422.5Q247.2 400.1 266.5 382.9 M326.1 504.8Q344.1 491.5 361.6 455.7 M240.6 416.5Q253.7 394.9 257.6 390.6 M294.7 440Q308 422.5 315.4 415.7 M223.1 401.1Q232.1 382.8 236.9 370.8 M333.3 344.6Q358.9 328.8 366.2 314.4 M188.1 440.1Q198.4 408.3 208.4 393.6 M217.5 380.2Q244.4 358 260.4 338.3 M272.5 383.2Q290.3 362.8 300.2 348.2 M246.8 369Q253.2 351.9 265.5 334.9 M175.8 446.4Q197 433.3 215.8 423.2 M293.2 417Q304.2 401.3 316.2 386.3 M208.4 401.6Q219.4 383 238.8 363.8 M227.1 397.2Q239.9 380.1 252.9 373.5 M269.5 495.7Q299.8 480.1 321.4 456.9 M328.6 419.4Q334.5 401.9 339.1 383.9 M211.3 416Q224.6 401.5 227.8 392 M349.5 455.2Q359.9 436.5 364 412.1 M204.5 445.7Q218.4 417.6 229 405.2 M178.3 462.7Q179.5 445.2 191.8 430.6 M324.9 355Q340 351.6 358.1 335 M314.3 429.5Q345 417.7 363.4 399.7 M222.4 453.6Q233 444.2 242 432.5 M324.5 437.5Q342.8 413.2 353.9 379.8 M214.4 436.8Q227 428.1 237.9 416.9 M265.3 506Q274.6 489.7 295.5 476.5 M184.4 426.8Q206.1 406.4 217.3 395.9 M340.4 438.3Q356 426.6 367.7 415.2 M311.8 463Q328.4 435.9 349.5 421.5 M278.5 389.6Q293 367.8 318.7 348.3 M286.4 339.8Q299.8 325.8 317.8 317.8 M211.3 507.5Q220.3 498.1 220.1 482.7 M222.5 448.6Q241.1 441.8 250 419.8 M290.8 334.7Q298 314.1 316.2 300.6 M283.3 422.7Q293.1 417.3 308.1 405.3 M304.5 449.3Q313.5 433.2 329.3 417.7 M238.7 452Q250.8 440.5 254.1 430.3 M331.4 519.4Q348 507.4 352.4 494.6 M346.8 519.9Q362.7 496 382.5 473 M233.4 336.8Q252.1 322 267.3 308.5 M186 375Q199.4 360.7 221.8 352 M276.1 411.6Q289.9 390.7 309.3 371.8 M309.2 399.7Q337.2 382.2 354.2 353 M244 493.6Q269.9 470.4 299.3 452.5 M174.7 517.5Q183 498.3 196.5 487.5 M327.1 496.3Q341.7 478.9 347.3 469.2 M234.1 456Q246.2 447.7 258.6 446 M218.4 422.8Q240.3 397.2 259.5 376.5 M302.3 473.2Q317.5 455.2 329.4 433.5 M320 392.4Q335.9 372.6 350.6 346.5 M344.5 341.4Q367 321.2 379.2 303.3 M319.4 470.7Q337.8 457.9 346.8 451.4 M213.7 393.6Q230.9 376.1 249.6 347.6 M263.3 502.5Q277.9 484.4 303 461.2 M196.7 370.7Q223.4 347.9 247.7 335.3 M207.1 490.9Q232.4 461.9 248 434.8 M206.5 343.5Q219.2 319.6 242.3 308.2 M201.4 422.8Q209.6 407.5 238.8 393.1 M251.3 383.6Q267.3 383.7 274.5 361.6 M303.1 484.2Q319.6 457.7 330 428.2 M227.2 380.7Q256.2 360.1 276.6 344.6 M175.1 376.1Q184.7 357.6 203.8 343.8 M213.8 332.2Q220.2 322.1 226.9 304.8 M193.8 366.1Q204.4 352.2 206.4 341.5 M214.8 362.3Q225.7 346.9 238.4 327.4 M261.7 418.6Q283.7 411.5 304.8 393.5 M207.7 405Q222.7 396.9 232.8 389.9 M307.2 355.4Q321.5 336.7 344.5 317 M198.4 353.5Q229.8 343.8 241.4 329.7 M347.7 478.3Q361 462 373 433.6 M221.6 455.6Q227.4 437.1 238 429.5 M322.9 418.7Q327.5 415.7 333.4 395.8 M255.8 508.1Q276.4 488.6 306.6 466.3 M183.3 337Q196.9 320.8 213.9 308.8 M225.7 476.8Q238.9 465.6 250.7 452.7 M235.8 372.3Q256.2 353.1 280.1 327.9 M187.8 488.3Q210.1 479.8 224.7 464.7 M306.1 418.5Q320 411.6 328.8 389.9 M221.6 469.8Q236.1 455.5 244.1 441.1 M301.1 495Q310 462.6 319.3 431.9 M231.4 497.4Q249.3 480.1 266.5 454.4 M269.9 495.6Q290.3 488.7 310 461.7 M280.8 385.6Q297 372 316.5 351.8 M174 485.9Q184.6 453.2 195.1 429.3 M262.3 473Q265.3 461.5 281 448.9 M222 490.4Q232.6 479.2 246.2 476.2 M290.6 471.2Q303.7 442.7 317.7 426.4 M301.6 417.4Q317.8 401.9 328.8 382.7 M341.8 381.6Q364.3 375.4 380.5 355.3 M210 403.2Q217.2 387.7 221.2 366.6 M229.5 464.3Q249.3 443.7 270.7 420.4 M335.7 417Q368 408.8 398 397.8 M342.6 425.2Q361.7 399.7 397.6 388.1 M236.6 441.1Q257.8 417.5 276 401.1 M195.7 447.5Q209.3 438.5 220.5 425.7 M283.5 343.9Q302.8 329.5 322.9 309.6 M269.6 463.4Q282.6 458.3 296.7 441.5 M341.3 439.5Q355.2 433.7 363 420.6 M304.3 494.4Q318.1 472.9 328.2 451.6 M324.2 506.6Q346.4 480.5 370.5 463.6 M236.2 424.7Q243.4 405.9 252.1 402.9 M182.5 475.1Q191.8 467 206.9 454.7 M258 501.1Q264.1 467.5 276.5 445 M274.3 452.4Q287.7 444 294.1 431 M333.7 339.6Q347.7 320.9 362 317 M212.1 441.2Q230.3 441.7 235.6 423.8 M312 396.7Q321.5 374.4 352.9 356.7 M280.2 364.7Q293.8 362 292.6 342.7 M272.6 420.2Q292.8 407.5 309 388.9 M184.8 447.7Q205.4 424.9 228.9 401.6 M189.8 346.5Q212.1 346.9 222.8 326.4 M256.8 365.4Q272.2 346.6 289.5 340 M288.2 514.3Q309 498.3 322.8 490.6 M228.5 357.2Q248.6 329.9 265.7 314.1 M174.4 460.2Q180.9 443.7 193.8 435.3 M309.4 336.3Q320.3 327.8 332.8 311.1 M343.5 512.9Q353.7 498.5 369 491.4 M320.3 426.6Q333.1 414.5 330.8 402.1 M266.5 375.6Q271.4 374.7 299.4 355.6 M195.9 496.6Q210.5 476.9 217.1 453.2 M176.5 363.4Q194.7 349.3 205.8 333.9 M173 344.3Q196.8 325.9 221.6 314.4 M230.9 462Q248.2 447 254.5 433 M280.9 395.7Q292.1 377.1 308.4 363 M190.4 391.8Q204.4 363.7 219.3 345.2 M303.3 469.1Q322.6 463.4 328.4 445.9 M342.2 459.6Q359.9 445.6 372.9 435.8 M209.1 379Q230.1 352.3 254.3 330.6 M239.9 518.4Q255 501.5 273.2 481.2 M248.1 455.4Q260.1 444 267.6 433.7 M210 485.2Q233.7 461.9 249.6 439.5 M295.9 498.6Q310.2 480.1 324.2 469.3 M341.7 387.7Q351.7 375.4 360 370 M183.4 335.5Q215.1 325.6 229.8 308.3 M211.6 445.6Q212.8 431.1 234.9 409.7 M200.4 355.4Q221.7 343.5 234.8 329.4 M239.9 413.1Q252.6 409 272.2 400.1 M293.1 362.8Q304.8 344.2 317 329.7 M276.3 381.3Q290.2 370.4 296.7 359.2 M195.2 406Q212.6 379.3 238.7 355.8 M322.2 476Q341.7 460.4 351.5 441.4 M328.9 346.3Q341.7 321.9 347.8 308 M228.6 362.5Q248.3 335.4 274 311.8 M348.3 424.8Q373.5 404.5 390.1 382.8 M185.2 490.1Q221.1 478.5 238.9 468.2 M233.4 478.5Q258.7 452 273 444.4 M213.3 495.7Q233.5 473.9 240.1 449.9 M218.3 467.7Q242.2 453.3 273.7 443.4 M344.9 369.7Q365.8 359.7 377.3 342.9 M257.2 385.8Q267.1 366.1 284.9 340.1 M346.6 471.9Q358.6 442.5 377.3 414.7 M218.7 452.1Q229.9 431.6 259.4 413.7 M249.7 476.5Q263.3 463.7 272.3 450.6 M177.6 383.5Q182.5 344.5 194.3 322.9 M228.2 489.5Q241.8 480.6 247.9 462.1 M339.5 414.2Q358.6 380.7 373.2 353 M344.6 465.8Q355.5 443.6 374.8 432.8 M339.6 335.9Q346.9 319.3 357.4 296.2 M325.1 487.8Q348 466.5 368.9 440.1 M313.3 395.8Q323.7 378 340.3 363.7 M228.5 370.2Q252.6 352.1 265.1 341.7 M284.1 376Q299.4 357.6 326.6 341.3 M344.9 490.7Q346.5 464.8 360.9 446.2 M203.2 397.4Q211 386.4 223.9 378.8 M321.9 434.4Q336.2 423.4 348.9 402.6 M249 380.9Q260.7 369.1 275.7 360.1 M278.7 362.4Q295.3 339.2 302.7 324.2 M321.5 371.2Q331 331.4 337 305.5 M178.4 332.4Q189.9 316.6 207.4 292.9 M173.7 495.2Q189.5 476.9 206 454.4 M217.2 377.7Q240.1 350.8 259.6 322.7 M271.6 338.8Q282 325 305.2 314 M284.7 471.7Q301.5 462.9 308.8 435 M300.5 499.7Q322.3 474.1 334.5 441.5 M187.8 439Q200.2 409.9 219.2 389.4 M216.4 479.7Q227.1 461.1 236.6 436.3 M241.1 444Q260.1 421.4 272 400.3 M181.2 359.5Q197.2 346.8 215.8 331.9 M283.4 369.3Q295.1 349.3 321.8 331.4 M341.1 506.7Q351.3 492.8 358.6 476.2" fill="none" stroke="#f09a2c" stroke-width="1.4" opacity="0.7"/>
<path d="M184 415.3Q192.1 399.6 208 395.2 M283.4 476.6Q282.3 474.8 290.4 460.9 M202.8 395.8Q210.8 381.8 220.8 366.7 M234.5 422.3Q243.3 409.8 251.8 404.1 M237.8 479.4Q242.9 470.8 248.3 459 M308.2 455.5Q332.1 448 336.3 442.7 M250.1 432.1Q255.2 432.8 263 419.2 M232.6 407Q240.4 393.9 242.9 385 M240.7 454.5Q256.6 442.5 265.9 429.1 M220.4 500.4Q239.6 493.7 250.5 485.4 M339.4 481.7Q345.8 471 359.9 449.5 M197.9 435.5Q205.5 423.7 211.1 416 M264.3 426.2Q281.4 408.6 290.5 404.3 M277.8 416.5Q282.7 402.6 289.8 390.1 M303.1 444.2Q311.2 433 314.8 424.9 M283 493.2Q286.6 490.1 292.3 475.7 M248.1 447.2Q261.4 441.4 258.5 425.5 M225.5 492.3Q241.3 481.2 250.2 462.2 M292.6 455.1Q297.9 440 305.6 420.1 M234 496.7Q239.8 483 247.6 482.4 M233.7 515.7Q241.9 497.3 250.4 486.4 M256.9 514.6Q268.8 502.9 278.9 486.9 M260.5 387.7Q261.3 376.3 272 362.4 M323.4 445.8Q331.4 445 335.8 433.4 M251.2 414.7Q253.8 409.1 268.9 395.8 M265.8 387.8Q280 378.3 283.7 364.7 M311.2 403.8Q312.9 388 327.5 375.4 M240.5 452.3Q246.8 447.4 247.5 437.6 M199.7 508.9Q198.2 501 206.9 493.8 M188.6 426.6Q198.3 418 202.5 414.8 M307.5 384.5Q310 371.8 323.1 356.6 M256.1 421.3Q264.6 412.4 277.2 402.5 M225.1 384.4Q235.7 368.4 242.7 350.5 M198.6 444Q205.1 434.7 209.9 430 M238.7 425.7Q243 415.1 247.9 411.9 M215.3 393.1Q232.4 394.7 230.2 386.7 M283.8 405.6Q283.4 401.7 286.7 390.2 M278.5 413.9Q302.1 399.1 313.8 396.8 M228.9 500.8Q247 486.2 253.1 476.8 M187 424.1Q188.6 417.1 194.3 404.1 M180.4 453.6Q192.6 442.5 194 440.8 M279.7 492.7Q297 489.8 308.2 473.2 M184.2 512Q186.7 499.7 194.9 484.3 M310.1 403.9Q322.5 397.9 343.3 386.4 M264 459.8Q258.1 450.1 277.8 446.5 M281.8 400.1Q298.9 392.9 315.5 378.6 M323.4 405.6Q333.4 389.1 337.8 378.4 M239 413.5Q253.6 392.9 261.3 385.1 M276.6 425.4Q284.9 411.2 294.6 405.1 M267.8 384.5Q283 371.9 297.2 368.4 M285.5 382.9Q294 372.9 301 362.1 M315.6 446Q321.5 438.9 326.1 430.2 M280.1 414.7Q285.5 403.5 289.8 393.8 M195 481.7Q204.6 471.3 199.5 460.2 M332 489.3Q346.1 470 350.4 457.2 M292.1 492.4Q302.4 487.1 304.7 477.4 M185.8 487.7Q197.1 470.5 205.6 466 M229.4 430.6Q251.5 423.6 262 407.7 M327.2 479.3Q333.9 469.4 356.8 458.1 M293.3 496.5Q301.9 482.7 316.2 474.3 M322 416.2Q328 400.7 326.2 394.4 M298 442.2Q301 430.4 309.5 430.1 M250.5 456.2Q265.3 441.4 270.9 438.2 M348.1 461.2Q358.7 451.1 371.6 434.3 M328.2 437.1Q343.5 414.6 351.7 411.1 M201.9 450.8Q213.1 446.9 215.2 437 M256.2 459.9Q264.8 450.4 274.7 442.4 M205.3 429.2Q214 417.9 215.3 396.4 M302.8 517.1Q303.2 517.9 311.1 500.5 M252.2 444.4Q266.4 435.9 268 425.1 M197.6 383.6Q199 378 200.8 362.9 M293.3 506.5Q307.5 491.6 317.5 474.9 M306.8 504.4Q320.2 490.2 326.3 478.6 M346.1 494.6Q352 468.9 356.3 466.8 M300.1 401Q312.7 395.3 320 375.1 M201.6 499.3Q213.4 491.2 217.9 473.9 M224.2 464.1Q232.9 453.9 240.8 438.7 M203.5 485Q219.9 479.9 234.9 470.7 M341 386.3Q337.4 379.7 344.1 370.1 M232.7 475.9Q240.2 478.9 253.8 461.1 M219.8 389.6Q220.3 382.4 231.8 374.9 M215.9 487.6Q221.1 485.3 233 480.2 M256.1 447.5Q256.2 430.9 264 411.8 M258.9 420.6Q261.9 411 267.1 397.3 M202.3 469.4Q215.8 452.5 218.2 445.5 M190.8 419.3Q201.7 414.8 207.2 404.6 M314.1 491.2Q327.2 486.3 332.2 474.1 M317.3 438.2Q320.1 434.4 324.1 422.3 M305.3 417.2Q318.2 410.8 322.9 398.2 M294.7 513.9Q304.3 499.4 305.7 482.2 M220.5 411.8Q226.9 405.8 227.9 395.9 M320.2 411.3Q325.3 401.2 333.2 402 M248.1 463.6Q260.2 460.6 278.2 448.9 M186.6 431.8Q192.4 424.9 200.9 411.8 M247.2 482.9Q250.5 470.6 255.7 456.4 M330.3 497.1Q339.6 478.3 349.5 463.6 M192.4 497.5Q196.2 490.3 203.1 482.4 M195.1 411.7Q191.5 401 195.6 390.7 M234.3 391.6Q240.9 381 242 366.8 M237 513.7Q248.3 500.5 247.5 478.6 M294.7 478Q294.2 461.7 307.2 466.4 M214.7 411.2Q224.1 398.6 230.8 390 M214.9 384.7Q216.8 370.8 214.4 361.7 M260.3 496.1Q268.1 478.2 270.3 477.5 M186.3 484.2Q204 472 205.6 466.7 M274.9 425.1Q281.3 411.7 290.1 407.4 M339.5 411.1Q343.3 399.4 354.5 382.6 M244.6 443.4Q256.4 440 258.2 427.7 M241.1 417.5Q259.6 408.5 272.3 402.3 M311.5 414.3Q321.1 402.1 322.7 392.1 M236.3 409.1Q246.8 398.8 244.6 392.7 M197.6 496.1Q209.7 491.8 227.4 474.6 M342.4 393Q341.2 385.6 356.1 381.2 M191.4 429.8Q197.8 416.6 209.2 413.1 M244.1 429.8Q252.5 423.5 262.7 419.3 M312 451.2Q316.2 436.5 326.1 429.4 M196.1 420.7Q195.9 412.3 207.7 398.3 M315.6 482Q331.8 468.1 337.3 457.7 M285.9 440.6Q296.5 431.4 297.8 413.2 M334.5 499.4Q336.9 493.5 335.6 472.5 M281.1 510.9Q280.5 490.8 300.9 484.5 M203 472.3Q213.7 461.1 220.7 456.1 M239.8 474.1Q252.9 465.7 256 459.4 M203.5 389.7Q207.1 383.6 205.1 374.4 M335.2 478.5Q342.5 466 343.1 464.5 M198.6 415.9Q204.3 401.4 215.8 400.7 M250.3 518.9Q262.5 507.5 269.1 491.8 M312.1 388.3Q313.6 367.1 317.6 351.9 M302.3 395.4Q303.7 382.9 320.5 362.5 M289.4 443.9Q295.8 427.7 297.4 424.2 M240.1 487.6Q252.7 477.1 265.9 467.6 M313.8 469.3Q323.5 455.8 337.2 444 M259.2 475.7Q266.1 471.4 273.9 461.4 M217.7 514Q231.6 512.6 234 501.4 M230.5 506.8Q238.4 493.8 247.7 488.9 M301.3 475.3Q306.5 465.9 314.7 455.6 M270.7 495.5Q279.3 478.2 278.8 471.8 M237 507Q249.1 496.8 247 480.7 M306.2 454.6Q308 447.1 310.6 439 M198.8 398.3Q205.8 379.1 213.4 369.6 M293.3 456Q314.8 447.4 323 442.7 M194.4 461Q197 444.3 207.9 428.1 M298 395.2Q307.5 382.3 318.2 370.9 M276.2 433.8Q286.2 427.9 295.1 424.1 M204.4 476.8Q217.8 464.3 222.4 442.4 M283.6 392.3Q293 370.4 299 361.2 M185.3 412.8Q189.1 403.3 184.8 390.9 M246.1 450.1Q258.4 434.1 270.9 431 M316.5 501.5Q320.7 496.8 331.3 487.7 M220 416Q237.2 407.8 245.9 395.9" fill="none" stroke="#5a1606" stroke-width="1.3" opacity="0.4"/>
<path d="M151.4 258.9Q162.6 241 159.9 221.6 M314 356.5Q317.7 337.3 317.7 325 M100.9 286.3Q97.2 277.7 104.2 262.5 M18.5 335.6Q23.9 326.3 27.6 299.9 M208.2 326.6Q204.5 314.6 215.1 298.2 M325.1 279.1Q312.9 277.2 316.2 258.2 M257.6 331.1Q255.9 312.1 255.8 300.5 M261.1 203.4Q263.8 192.6 266.1 187.1 M60.5 323.5Q61.7 320.3 52.2 306.3 M110.1 209.7Q107.1 191 107.6 170.6 M4.7 353.6Q7.1 337.4 9 319.1 M35 357.3Q32.4 346.8 39.1 339.4 M59.2 212Q57.2 203.4 51.2 187.3 M171.2 298.3Q173.6 298.3 167.4 279.3 M77.1 195.5Q76.7 179.8 78.3 176 M294.3 328.3Q292.3 326.2 294.1 305.5 M238.5 267.4Q244.2 252.9 237.4 238.7 M35.5 207.9Q34.6 186.1 28.5 169.7 M97.8 332.9Q99 316.4 109.2 298.6 M220.6 232.1Q221.2 220.3 225.8 209.5 M167.9 254.5Q164.6 246.9 157.9 216.3 M76.3 234.1Q82.5 216.1 75.1 193.9 M81.1 224.9Q78.4 218.6 82.3 209.9 M45.3 194.1Q45.6 185.5 34.8 176.3 M87.5 211.2Q86.2 203.7 89.8 192.9 M214.7 361.8Q219.4 348.4 219.1 341.1 M18 367.8Q18.6 360.2 16 351.8 M49 291.2Q47.4 274 52.1 262.1 M93 278Q88 259.1 92.8 258.8 M194.5 290.2Q200 274 195 257.2 M83.8 242.9Q85.2 232.4 91 228.5 M152.7 347.7Q151.5 333.5 145.4 309.5 M269 256.7Q272.1 237.2 283.6 219.6 M262.3 230.5Q260.8 228.8 265.7 211.8 M27.3 364.9Q30.8 350.4 27 343.8 M28.9 301.6Q28.2 293.7 33.8 272.6 M78.1 252.5Q66.7 239 72.3 230.6 M0.4 305Q-2.1 306.3 -7.1 290.8 M116.6 211Q119.4 194 113.2 179.7 M183.1 323.2Q175.2 303 185 283.7 M182.6 292.5Q186.7 276.8 191.4 267.2 M314.5 255.2Q321.3 231.5 329.4 219.7 M78.9 371.2Q77.1 357.7 79.7 343.2 M77.3 262Q75.8 244.3 81 222.5 M224 317.9Q218.7 312.6 224.7 294.7 M289.6 238Q281.9 219.5 285.7 216 M216.8 191.6Q219.9 177.9 222.7 172 M308.1 201.6Q305.9 185.6 301.4 171.8 M102.6 216.4Q108.5 190.7 105.4 173.4 M175.4 209.8Q172.1 198 161 187.8 M58.5 338.5Q62.3 331.6 65.1 318.4 M151.6 344Q155.2 326.9 165.4 312.7 M17.9 219.7Q16.9 207.9 9.6 205.1 M8.5 314Q1.8 297.4 12.3 281.7 M64.8 192.7Q67.9 176.7 66.1 165.9 M36.2 319.9Q30.2 305.3 27.1 287.9 M255 306.4Q255.2 289.5 260.2 285.8 M283.1 309.4Q281.6 298.5 295.9 286.5 M292.3 193.7Q292.2 168.7 300.1 156.9 M142.4 235.5Q143 222.8 140.3 209.8 M288 378.8Q284.4 370.8 277.6 353 M307.6 316.6Q310.2 301.4 304 285.6 M308.5 281.2Q311.6 259.6 310.2 236.5 M245.6 300.6Q248.1 288 247.2 284.8 M217.1 372.7Q226.1 360 228.5 340.9 M269.2 346.2Q277 332.4 275 327.1 M154.9 265.4Q157.8 258.7 155.9 248.3 M72.8 357.7Q74 354.4 76.3 337.8 M201.8 313.7Q208.3 302.6 206.3 297.7 M168.1 328.7Q165.8 314.9 161.1 296.8 M19 285.6Q24.7 270.1 27.9 261.3 M72.9 214.2Q67.3 194.8 67.4 180 M1.7 291.9Q17.5 271.1 22.2 252.4 M220 304.9Q214.5 282.6 214 268.5 M201.9 312.9Q201.3 303.6 202.5 282.4 M3.1 235.3Q2.2 227 -0.1 217.6 M96.6 295.2Q93.1 285.2 99.2 272.1 M297.8 366.8Q295 350.2 298.3 326.2 M77.9 226.3Q83.7 215.7 84.7 197 M155.3 352.3Q144.3 332 140.9 320.3 M216.4 254Q219.2 239.6 206.2 229.6 M209.8 299.3Q214.1 284.9 216.6 279.8 M230.5 240.3Q231.8 233.3 229.7 218.1 M204.7 364.6Q209.1 357.5 200.1 347.3 M159.7 271.8Q160.8 258.9 156.9 240.7 M24.3 209.1Q19.3 199.2 22.8 182.6 M290 370.4Q294.8 360.8 293.1 340.9 M278.1 371.5Q282.4 366.4 280.3 356.2 M88.8 309.1Q82.1 307.3 93 294.1 M314.2 212.8Q318 210.3 323.5 193.9 M257.1 290.8Q242.7 273.1 240 268.4 M216.6 221.5Q222.6 208.2 218.6 200.5 M181.2 248.6Q171.6 226.4 162.8 211.7 M136.3 332.3Q143.9 318.7 151.3 315.8 M223.2 332.6Q223.9 318.8 232.1 300.9 M9.7 231.1Q0.3 210.6 3.4 194.6 M116.8 256Q117.7 236.7 104.6 219.6 M199.9 232.6Q192.3 221.9 194.3 212.9 M147.3 249Q138.8 236.4 139.5 226.2 M76.2 349.9Q75.9 337.7 72.6 330.5 M171.3 322.7Q183.1 302.1 187.8 292.1 M183.1 337.4Q177.2 322 172.6 310.5 M62 300.7Q60.2 281 61.5 275.2 M332.4 206.6Q326.6 186.8 316.7 167.4 M154.5 209.1Q146.1 195 144.8 174.9 M277.7 203.6Q284.3 186.6 274.3 172.1 M91.4 196.7Q101.6 168.8 99.2 159.1 M228.3 350.4Q229 334.7 224.2 317.4 M45 256.7Q55.8 244.8 53.6 230.7 M44.7 202.1Q43.6 194.6 43 172.7 M166 256.7Q176.5 248.2 176 231.4 M323.7 248Q312.5 228.2 313.8 209.9 M24.6 208.9Q23.4 187 20.9 173.2 M309.3 246.2Q315.2 226.6 314.7 205.1 M178.2 345.4Q175.7 325.8 180.4 304.2 M275.3 339.9Q278.1 334.3 272 315 M51.6 313.8Q45.8 295.9 47.1 269.3 M328.6 228.9Q329.6 224.7 334.6 205.6 M100.1 331.2Q99.9 308.8 100.6 286.4 M6.1 196.4Q15 181.3 29.5 160.9 M71.3 266.2Q64.8 245.5 66.3 231.2 M323.4 345.4Q323.1 334 330.2 321.1 M180.9 277.6Q174.3 272.4 179.6 261.6 M309.5 317.1Q300.4 295.4 302 275.7 M62.7 196Q68.7 176 71.5 153.8 M176 370.1Q173 357.9 173.8 353.8 M93.3 365.3Q91.6 358 101 344.5 M175.9 249.1Q175.2 241.3 172.2 229.5 M197.9 330.1Q188.4 326.1 192.3 304.3 M32.9 358.3Q29.5 338.7 37.4 339.2 M252.5 211.7Q258.8 199.6 270.1 182.2 M289.9 258.1Q290 247.6 291.5 242.3 M322.7 380Q317.3 356.8 319.7 338.3 M189.7 214.7Q183 204.3 180.9 177.5 M92.2 347.3Q90.8 319.7 95.1 308.8 M221.2 250.1Q221.2 238.2 226.6 229.9 M290.7 333.8Q287.6 325 291.3 313.8 M84.2 326.2Q81.2 306.5 85 294.6 M237.4 216.1Q240.1 209.8 231.1 194.3 M156.9 201.2Q161.2 193.7 158.7 174.6 M322.8 295.5Q324.6 279.7 319.5 258.8 M280.8 272Q278.6 265 274.8 245.1 M234.3 355Q235.5 332.4 229.9 313.9 M209 214.7Q215.5 206.3 220.8 187.2 M160 231.9Q159.2 222.7 158 209.6 M133.2 238.3Q132.7 222.4 129.1 217.1 M110.2 243.9Q99.1 226.4 102.1 212.3 M183.1 303.1Q179.9 291 181.5 283.4 M121.4 236Q116.5 208.2 111.5 193.4 M2.7 282.6Q1.9 263.1 11.9 257.2 M63.7 208Q45.9 194.1 41.3 172.9 M203.3 338.1Q202.8 317.5 213.9 302.9 M312.5 199.9Q308.1 187.3 303 166.3 M242.5 284.5Q234.9 269.3 226.3 252.8 M89.5 361.3Q88.6 354.8 81.5 334.4 M211 237.5Q214.2 230 213.2 221.1 M47.4 343.6Q48.8 328.2 57.6 309.2 M60.6 227.7Q63.1 215.2 55.1 208 M183.3 224Q185.1 209.4 182.8 200.9 M280.6 286.8Q278.9 270.6 285.7 258.9 M134.3 271.9Q133.3 254.3 135.6 234.8 M289.9 251.7Q289.2 235.7 282.8 219.3 M223.5 259.8Q223.3 245.8 227.6 237.4 M127.3 311.8Q131 297.3 127.3 288.7 M115.4 361.8Q115.7 343.7 126.1 322.3 M332.9 302.3Q323.8 293.5 337.6 280.5 M105.2 369.9Q98.3 360.1 94.8 341.8 M68.2 269.6Q63.6 268.7 66.2 252.7 M300.6 267.3Q303.4 245.9 293.8 235.5 M139 290.3Q138.4 281.7 131.1 268.4 M42.2 219.8Q47.5 202.4 45.3 190 M35.4 335.8Q39.1 329.1 37.7 309.1 M318.7 354.7Q325.4 346.7 324 339.7 M37.6 217.5Q45.3 201.6 54.9 183.2 M241.4 324.8Q239.3 311.1 239.6 298.4 M248.9 296.8Q240.1 272.3 242.5 264.9 M273.2 336.2Q268.7 316 258.9 300.3 M156.3 336.2Q149.8 316.1 148.6 295.6 M57.6 294.7Q52.6 279.7 44.1 254.3 M54.3 353.2Q60.1 330.2 58 314.6 M25.9 203.6Q17.3 189.3 20.2 174.4 M107.3 251Q105.9 226.1 103.6 207.4 M67.8 314.3Q68.8 302.1 64.9 282.4 M280.9 236.5Q281.9 217.7 273.7 205.1 M186.3 208.1Q184.8 193.6 186.9 180 M159.4 252.7Q164.4 247.3 158.6 234.4 M287 304.8Q290.6 292.5 294.6 273.3 M44.6 301.3Q47.2 284.6 45.4 265.2 M257.1 249.4Q258.7 241.8 250.4 230.6 M54.4 273Q47.4 263.8 53.5 252.6 M61.3 246Q65.1 231.3 66.7 222 M36.5 324.6Q39.9 304.4 37 296 M323.2 196.1Q331.3 172.8 331.6 154.6 M236 322.2Q232.4 314.9 249.2 291.1 M170.1 362.8Q169 354.8 172.3 344.9 M219.9 289.4Q216.8 270.3 221.2 259.6 M295.2 370.4Q291.1 342.6 298.8 327.7 M299.9 296.3Q305.8 285.9 301.8 271.4 M63.7 296.6Q63.1 287.9 65.1 281.1 M70.5 319.5Q75 311.4 65.2 294.6 M202.7 220.9Q205.3 207.1 210.8 184.1 M255.8 274.5Q261.3 268.4 265 257 M58.7 363.3Q55.5 342.9 42.2 327.2 M228.9 364.4Q232.8 351.6 229.3 345.6 M72.8 247Q69.7 230.2 66.6 219.3 M265.7 248.7Q259.7 226.8 255 205.4 M305.3 271.5Q303 267 308.3 251.1 M241.2 196.9Q231.5 180.6 235.4 162.9 M23.6 283.1Q23.9 267.2 23.4 245.3 M2.9 375.8Q5.9 371.9 0.1 355.3 M246.9 191.6Q240.8 178.4 241.3 172.3 M271.7 298.7Q263.7 285 267.9 277 M68.9 319.8Q78.7 303 77.9 282.6 M130 262.2Q123.9 248.9 116.6 241.4 M30.7 329.9Q29 311.8 35.3 304 M199.7 359.9Q192.7 347.4 196.9 324.5 M238.6 365.7Q252.2 357.3 246.2 339.4 M273.1 324.7Q270.1 310.9 272.5 292.1 M254.6 200.4Q253.6 191.1 255.3 178.7 M317.4 354.5Q318.1 355.7 324.7 341 M160.5 261.3Q162.6 237.8 174 218.5 M157.7 264.5Q166 247.5 162 231.8 M327.2 204.8Q323.8 187.7 319.9 171.5 M174.6 309.2Q181 292.3 186 268.8 M188.7 217.1Q188.8 196.5 172 185.8 M203 204.6Q192.1 196.4 200.9 182.6 M125.9 373.4Q132.3 361.6 133.9 352 M291 266.6Q294.4 248.6 293.2 225.5 M259.7 214.5Q261.3 197.1 257 183.1 M309.4 314.6Q313.1 296.2 307 276.2 M73.4 350.1Q78.6 338.3 89.3 324.8 M279.8 217.8Q272.1 201.7 272 174.2 M171.6 330.3Q174.9 310.1 168.9 290.2 M141.6 330.3Q137.1 314.5 138.3 296.6 M285.2 315.3Q282 313.3 284.2 297.3 M255.9 198.3Q249.1 185 251.7 161.3 M324.6 269.5Q324.6 260.5 325.1 246.4 M183.6 203.4Q188.3 185.9 196.6 174.1 M122.7 218.8Q115.9 217.2 117.4 204.5 M134.7 326.2Q137.8 314.6 139.3 305.9 M241.9 250.7Q246 229.6 242.4 215.9 M161.4 200.3Q162.7 181 168.5 162.2 M220.7 220.9Q229.7 203.3 226.7 196.7 M155.4 318.1Q160.6 301.1 153.6 279.4 M270.7 227.3Q280.3 213.2 281.5 195.7 M278.4 252.9Q273.6 245.7 268.7 236.8 M282.5 313.2Q282.3 312.1 281.3 295.1 M304.4 345.8Q310.6 337 307.2 329.4 M61.9 242.7Q61.1 224.7 64.7 227.1 M18.1 236Q18.2 221.5 20.9 218.7" fill="none" stroke="#c86a20" stroke-width="0.9" opacity="0.45"/>
<path d="M257.9 303.8h1.5v1.5h-1.5z M274.1 218.3h2.8v2.8h-2.8z M18.9 172h1.4v1.4h-1.4z M63.7 344.1h1.7v1.7h-1.7z M3.5 271.8h2.1v2.1h-2.1z M76.5 303.4h2v2h-2z M0.3 231.4h1.9v1.9h-1.9z M91 193.2h2v2h-2z M295.5 198.7h2.8v2.8h-2.8z M27.2 283.4h1.4v1.4h-1.4z M210.2 218.2h2.5v2.5h-2.5z M279.8 215.3h2.7v2.7h-2.7z M78.3 250.7h1.3v1.3h-1.3z M145.7 348.4h1.5v1.5h-1.5z M162.2 172.5h2.5v2.5h-2.5z M78.2 312h2.3v2.3h-2.3z M321.7 202.2h2.5v2.5h-2.5z M204.5 175.8h2.1v2.1h-2.1z M321.8 327.3h1.8v1.8h-1.8z M205.8 226.9h2.6v2.6h-2.6z M243.6 194.7h2.6v2.6h-2.6z M318.1 286.6h2.7v2.7h-2.7z M121.1 179.9h2.5v2.5h-2.5z M250.1 284.9h2.8v2.8h-2.8z M53.2 266.4h1.4v1.4h-1.4z M270 204.1h1.4v1.4h-1.4z M270.8 261.3h2.4v2.4h-2.4z M271.9 312.6h3v3h-3z M275.4 339.5h1.5v1.5h-1.5z M23.7 335.8h2v2h-2z M281.2 333.3h2.5v2.5h-2.5z M145.4 295.6h2.2v2.2h-2.2z M236.9 174.6h1.8v1.8h-1.8z M178 283.7h1.8v1.8h-1.8z M107.6 175.7h2.8v2.8h-2.8z M304.9 210.9h1.7v1.7h-1.7z M39 298.2h2.4v2.4h-2.4z M127.5 318.6h2.7v2.7h-2.7z M19.3 170.9h2.4v2.4h-2.4z M107.2 336.2h1.5v1.5h-1.5z M106.7 184.4h2.7v2.7h-2.7z M294.5 286.8h3v3h-3z M233.5 202.6h1.8v1.8h-1.8z M287 223.2h1.8v1.8h-1.8z M238.9 328.7h2.9v2.9h-2.9z M224.1 183.3h1.5v1.5h-1.5z M272.4 224.6h2.6v2.6h-2.6z M31.4 239.5h2.5v2.5h-2.5z M227.2 315.6h2.6v2.6h-2.6z M212.7 354.1h2.3v2.3h-2.3z M96.7 293.3h1.9v1.9h-1.9z M116.7 307h2.4v2.4h-2.4z M19 346.9h1.4v1.4h-1.4z M241.5 213.8h2.3v2.3h-2.3z M196.3 241.7h2.5v2.5h-2.5z M300.2 269.7h1.4v1.4h-1.4z M186.9 347.9h1.9v1.9h-1.9z M2.1 245h1.7v1.7h-1.7z M185 190.5h2.9v2.9h-2.9z M285.6 168.8h2.9v2.9h-2.9z M23.8 161.8h2.7v2.7h-2.7z M8.9 295.2h2v2h-2z M87.4 231.7h1.5v1.5h-1.5z M45.2 239.5h2v2h-2z M56.1 164.4h1.4v1.4h-1.4z M242.2 343.5h3v3h-3z M63.7 252.9h2.9v2.9h-2.9z M48.7 339.9h1.3v1.3h-1.3z M150.3 227.1h2.5v2.5h-2.5z M326.3 259.8h2.8v2.8h-2.8z M300 316h1.8v1.8h-1.8z M12 312.1h1.5v1.5h-1.5z M160.6 291h1.3v1.3h-1.3z M194.5 346.6h2.4v2.4h-2.4z M317 317.8h1.8v1.8h-1.8z M147.6 281.1h2v2h-2z M300.7 345.4h1.6v1.6h-1.6z M14.4 296.2h2.4v2.4h-2.4z M281.9 236.8h2.8v2.8h-2.8z M123 314.4h2.5v2.5h-2.5z M258.9 280.2h2.2v2.2h-2.2z M282.3 248.5h1.9v1.9h-1.9z M57.1 181.3h2.6v2.6h-2.6z M221.8 193.3h1.7v1.7h-1.7z M215.9 226.8h2v2h-2z M152.8 245.3h1.6v1.6h-1.6z M116 314h2.6v2.6h-2.6z M302.7 300.8h2.8v2.8h-2.8z M305.7 346.5h2.1v2.1h-2.1z M275.9 291.8h1.9v1.9h-1.9z M106.2 250.9h2.4v2.4h-2.4z M256.7 218.3h1.5v1.5h-1.5z M135.5 235.3h1.9v1.9h-1.9z M292.7 333.1h1.3v1.3h-1.3z M118.8 214.6h2.9v2.9h-2.9z M332.7 274.1h1.4v1.4h-1.4z M21 256.9h2.3v2.3h-2.3z M28.3 291.6h1.3v1.3h-1.3z M266.1 169.2h2.5v2.5h-2.5z M255.2 205.8h1.6v1.6h-1.6z M169.5 172.1h2v2h-2z M242.7 334.4h1.9v1.9h-1.9z M51 186.3h1.6v1.6h-1.6z M79.6 354.9h3v3h-3z M165 338.8h2.9v2.9h-2.9z M66.1 203.5h2.7v2.7h-2.7z M85.6 220.5h2v2h-2z M110.4 212.7h1.3v1.3h-1.3z M204.6 284.9h2v2h-2z M157.2 232h2.8v2.8h-2.8z M56.5 186.5h2.9v2.9h-2.9z M91.8 224.2h1.9v1.9h-1.9z M245.6 307.6h2.8v2.8h-2.8z M67.7 322.4h1.3v1.3h-1.3z M317.4 321.2h2.8v2.8h-2.8z M125.1 211.8h1.7v1.7h-1.7z M95.4 309.4h2.1v2.1h-2.1z M297 222.8h1.2v1.2h-1.2z M14.4 327.2h2.2v2.2h-2.2z M291.1 198.8h1.9v1.9h-1.9z M249.7 262.1h2.4v2.4h-2.4z M278.6 199.6h1.4v1.4h-1.4z M282.4 246.5h2.6v2.6h-2.6z M331.2 183.3h1.7v1.7h-1.7z M330.3 231.2h2.8v2.8h-2.8z M206.1 284.5h1.3v1.3h-1.3z M23.7 305.3h2.5v2.5h-2.5z M100.6 298.8h2.8v2.8h-2.8z M39 251.9h2.8v2.8h-2.8z M35.5 224.2h2.5v2.5h-2.5z M298.3 316.6h1.2v1.2h-1.2z M139 192.9h1.3v1.3h-1.3z M131.1 225.3h2.6v2.6h-2.6z M177.2 217.8h2.2v2.2h-2.2z M113.8 222.4h2.5v2.5h-2.5z M50.5 162.9h1.2v1.2h-1.2z M109.8 255.1h3v3h-3z M320.4 191.8h2.4v2.4h-2.4z M3.4 295.1h3v3h-3z M201.3 297.8h2.3v2.3h-2.3z M2.6 216.5h2v2h-2z M174.3 269.1h2.4v2.4h-2.4z M148.9 216.3h2.5v2.5h-2.5z M18.3 173.2h2.1v2.1h-2.1z M126.6 217.6h1.7v1.7h-1.7z M274.6 284.5h1.2v1.2h-1.2z M81.9 247.1h1.6v1.6h-1.6z M140 256.9h1.4v1.4h-1.4z M123.2 261.6h2v2h-2z M208.5 231.4h1.8v1.8h-1.8z M149.1 324.1h2.9v2.9h-2.9z M184.1 311.9h2.1v2.1h-2.1z M236.6 251.9h2.1v2.1h-2.1z M237.2 339.7h1.8v1.8h-1.8z M324.7 279h1.3v1.3h-1.3z M145.1 354.4h1.6v1.6h-1.6z M238.7 324.9h2.3v2.3h-2.3z M185.5 347h1.3v1.3h-1.3z M114.7 359.9h2.9v2.9h-2.9z M12.2 251.5h2.1v2.1h-2.1z M35.9 180.6h1.4v1.4h-1.4z M29.2 191.1h1.7v1.7h-1.7z M274.8 191.2h2.4v2.4h-2.4z M264.6 351h1.6v1.6h-1.6z M207.5 174.4h1.4v1.4h-1.4z M266.4 330.8h2.9v2.9h-2.9z M322.5 224.3h2.1v2.1h-2.1z M331 300.6h1.6v1.6h-1.6z M66.6 256.7h1.9v1.9h-1.9z M288.8 279.7h2.2v2.2h-2.2z M88.8 275.9h2.1v2.1h-2.1z M149.2 233.9h2.2v2.2h-2.2z M160.2 163.4h1.5v1.5h-1.5z M22.4 248.2h2.9v2.9h-2.9z M310.6 241.5h2.9v2.9h-2.9z M75.5 236.9h2.8v2.8h-2.8z M169 210.2h2.3v2.3h-2.3z M60.2 273.9h1.8v1.8h-1.8z M86.8 190.1h2.2v2.2h-2.2z M245.7 311.1h1.6v1.6h-1.6z M109.1 206h2.5v2.5h-2.5z M331.4 292.1h2.5v2.5h-2.5z M63.3 246h1.9v1.9h-1.9z M251.3 164.7h2.2v2.2h-2.2z M164.8 300.1h2.5v2.5h-2.5z M46.8 244.1h2.6v2.6h-2.6z M130.2 160.4h2.9v2.9h-2.9z M67.1 269.4h1.4v1.4h-1.4z M270.6 215.6h1.3v1.3h-1.3z M180.9 204h2v2h-2z M320.2 175.8h1.4v1.4h-1.4z M149 203.8h2.8v2.8h-2.8z M29.4 338.8h1.3v1.3h-1.3z M77.9 162.8h1.4v1.4h-1.4z M122.8 231.7h1.5v1.5h-1.5z M68.1 235.1h1.3v1.3h-1.3z M309.1 319.9h1.3v1.3h-1.3z M104 212.4h2.4v2.4h-2.4z M251.3 172.2h2.4v2.4h-2.4z M1.8 180h2.1v2.1h-2.1z M43.6 184.7h2.7v2.7h-2.7z M244.6 313.2h1.4v1.4h-1.4z M175.3 162.5h2.7v2.7h-2.7z M190.5 251.5h1.8v1.8h-1.8z M206.8 176.9h2.6v2.6h-2.6z M311.3 315.7h1.2v1.2h-1.2z M270.8 344.8h3v3h-3z M9.5 194h2v2h-2z M105.2 199.8h2.4v2.4h-2.4z M84.3 250.4h2.5v2.5h-2.5z M261.7 351.7h1.3v1.3h-1.3z M100.3 332.5h1.5v1.5h-1.5z M265.6 224.2h2.8v2.8h-2.8z M153.2 339.1h2.5v2.5h-2.5z M21.5 226.4h1.7v1.7h-1.7z M168 265.6h1.7v1.7h-1.7z M193.7 185.7h2.8v2.8h-2.8z M240.8 214.5h1.5v1.5h-1.5z M225.7 254.7h2.6v2.6h-2.6z M310.2 181.2h1.6v1.6h-1.6z M159.5 228.6h3v3h-3z M134.6 289.1h1.2v1.2h-1.2z M306.3 178.5h2.4v2.4h-2.4z M119.5 205.9h2.6v2.6h-2.6z M294.6 226.5h1.8v1.8h-1.8z M60.6 227.5h2.1v2.1h-2.1z M156.9 189.9h1.5v1.5h-1.5z M198.8 189.7h2.8v2.8h-2.8z M280.7 267.7h1.5v1.5h-1.5z M222.1 263.5h2v2h-2z M241.1 214.2h2.3v2.3h-2.3z M292.4 213.2h1.2v1.2h-1.2z M198.6 209.6h1.3v1.3h-1.3z M108.9 248.2h1.7v1.7h-1.7z M154.7 341.1h1.9v1.9h-1.9z M81.1 179.9h1.3v1.3h-1.3z M285.9 307.8h1.6v1.6h-1.6z M125.6 351.3h1.8v1.8h-1.8z M47.9 285.6h3v3h-3z M136.8 324.5h2.5v2.5h-2.5z M209.1 203.8h1.4v1.4h-1.4z M235.3 293.3h2.9v2.9h-2.9z M59.8 205.4h2.9v2.9h-2.9z M122.8 299.6h2.8v2.8h-2.8z M180 161.2h2.7v2.7h-2.7z M320.5 298.4h1.7v1.7h-1.7z M146.6 228.6h1.5v1.5h-1.5z M175.9 331h2.2v2.2h-2.2z M267.4 257.3h1.4v1.4h-1.4z M45 174.6h2.5v2.5h-2.5z M136.4 225.6h2.9v2.9h-2.9z M186 259.5h1.3v1.3h-1.3z M271.1 183.1h2.4v2.4h-2.4z M111.9 240.8h2.5v2.5h-2.5z M270.5 179.4h2.4v2.4h-2.4z M182.8 270h1.7v1.7h-1.7z M244.2 342h2.2v2.2h-2.2z M19.9 348.3h2.5v2.5h-2.5z M55.9 240.9h2.5v2.5h-2.5z M208.8 227.5h2v2h-2z M303.9 296.9h2.4v2.4h-2.4z M143.4 166.3h1.6v1.6h-1.6z M173 195.6h2.3v2.3h-2.3z M322.7 284.1h2.2v2.2h-2.2z M205.6 247.1h1.8v1.8h-1.8z M229.8 248h1.4v1.4h-1.4z M56 240.6h2.6v2.6h-2.6z M15.6 292.4h2.7v2.7h-2.7z M37.9 319h2.4v2.4h-2.4z M251.8 167.9h1.8v1.8h-1.8z M243.9 201.6h2.2v2.2h-2.2z M209.6 249.6h2.1v2.1h-2.1z M5 181h1.9v1.9h-1.9z M102.3 258.4h2.4v2.4h-2.4z M259.7 211.5h2.6v2.6h-2.6z M323.1 188.1h2.7v2.7h-2.7z M65.4 161.7h2v2h-2z M322.6 335.6h1.9v1.9h-1.9z M53.2 238.8h2.6v2.6h-2.6z M31.2 252.1h1.5v1.5h-1.5z M222.8 275.9h2.6v2.6h-2.6z M85.1 257.3h1.2v1.2h-1.2z M229.9 241.2h1.5v1.5h-1.5z M109.5 342.9h1.5v1.5h-1.5z M180.5 199.7h2.9v2.9h-2.9z M36.8 164.1h1.4v1.4h-1.4z M323.1 230.9h2.7v2.7h-2.7z M37.3 212.6h2.7v2.7h-2.7z M145.3 184.5h2.6v2.6h-2.6z M266.7 304.6h1.7v1.7h-1.7z M290.7 172.8h2.5v2.5h-2.5z M211.9 254.7h2v2h-2z M218.1 324.6h2.4v2.4h-2.4z M320.4 333.2h2.7v2.7h-2.7z M316.9 179.3h2.6v2.6h-2.6z M182.9 349.5h1.7v1.7h-1.7z M232.4 278.9h1.9v1.9h-1.9z M261 326.1h2.5v2.5h-2.5z M222.3 178h2v2h-2z M231 311h2.8v2.8h-2.8z M1.3 238.4h2.7v2.7h-2.7z M159.9 188.3h1.3v1.3h-1.3z M218 191.4h2v2h-2z M141.9 236.2h2v2h-2z M199.8 308h2.8v2.8h-2.8z M168.6 348.4h1.3v1.3h-1.3z M33.6 163.8h1.7v1.7h-1.7z M171.3 354.1h1.7v1.7h-1.7z M35.4 198.6h1.4v1.4h-1.4z M62.9 205h1.6v1.6h-1.6z M152.2 168h1.6v1.6h-1.6z M1.5 298.8h2.6v2.6h-2.6z M331.6 327.6h2.7v2.7h-2.7z M86 331.2h1.8v1.8h-1.8z M225.9 246.2h2.2v2.2h-2.2z M280.7 191.7h2.8v2.8h-2.8z M201.2 182.9h2.1v2.1h-2.1z M319.1 184.2h1.2v1.2h-1.2z M17.2 318.7h1.7v1.7h-1.7z M138.4 262.6h1.8v1.8h-1.8z M66.4 261.7h2.3v2.3h-2.3z M93.6 323.9h2.2v2.2h-2.2z M40.6 292.7h1.9v1.9h-1.9z M208 316.9h1.3v1.3h-1.3z M138.8 243.6h1.6v1.6h-1.6z M70.2 220.9h1.5v1.5h-1.5z M22.5 214.5h1.7v1.7h-1.7z M219.7 286.2h1.9v1.9h-1.9z M209.7 211.3h2v2h-2z M112 175.4h1.8v1.8h-1.8z M281.7 299.9h1.5v1.5h-1.5z M299.7 301.2h2.9v2.9h-2.9z M66.5 275.6h2.4v2.4h-2.4z M6 242.9h2.6v2.6h-2.6z M283.6 178.1h1.7v1.7h-1.7z M62.3 278.4h1.5v1.5h-1.5z M276.8 286.6h1.5v1.5h-1.5z M255.7 185.2h2.7v2.7h-2.7z M72.8 260.5h1.2v1.2h-1.2z M102.5 209.6h2.9v2.9h-2.9z M237.9 326.7h2.6v2.6h-2.6z M28.2 272.3h1.8v1.8h-1.8z M123.2 184.2h2.5v2.5h-2.5z M100.9 197.6h1.2v1.2h-1.2z M247.7 334.6h1.4v1.4h-1.4z M86.4 264.6h2.5v2.5h-2.5z M166 308.3h2.6v2.6h-2.6z M144.2 301h2.6v2.6h-2.6z M39.6 265.5h1.7v1.7h-1.7z M83.1 340.6h2.8v2.8h-2.8z M43.9 327.3h2.6v2.6h-2.6z M128.2 234.7h1.8v1.8h-1.8z M296.4 244.7h2.1v2.1h-2.1z M210.1 188h1.2v1.2h-1.2z M244.8 239h2.6v2.6h-2.6z M280.8 177.7h1.7v1.7h-1.7z M114 339.2h1.7v1.7h-1.7z M149 286h2.9v2.9h-2.9z M117.8 354.7h2.6v2.6h-2.6z M272.9 252.5h2.5v2.5h-2.5z M18.4 289.1h1.9v1.9h-1.9z M72.6 338.8h1.3v1.3h-1.3z M132.5 262.4h3v3h-3z M213.3 189.6h2.2v2.2h-2.2z M264.4 299.7h2.2v2.2h-2.2z M94.7 240.8h2.8v2.8h-2.8z M17.5 265.5h1.7v1.7h-1.7z M67.2 200h1.6v1.6h-1.6z M292.1 359.1h2.7v2.7h-2.7z M321.9 190.5h2.9v2.9h-2.9z M77.6 203.9h1.8v1.8h-1.8z M142.5 334.1h2.7v2.7h-2.7z M45.2 319h2.3v2.3h-2.3z M325.8 292.7h1.9v1.9h-1.9z M157.4 345.3h1.2v1.2h-1.2z M317.8 255.3h1.4v1.4h-1.4z M300.6 326.5h1.7v1.7h-1.7z M152.8 222h1.8v1.8h-1.8z M230.4 327.5h1.5v1.5h-1.5z M61.9 196.9h2.7v2.7h-2.7z M42 249.5h1.5v1.5h-1.5z M110.9 180.2h1.6v1.6h-1.6z M270.8 291.7h2.4v2.4h-2.4z M120.1 223.8h1.3v1.3h-1.3z M129.7 326.1h1.7v1.7h-1.7z M74.6 161.5h2.5v2.5h-2.5z M44.6 193.6h1.3v1.3h-1.3z M201.9 189.3h2.4v2.4h-2.4z M201 346.8h1.8v1.8h-1.8z M174.5 345.2h2.3v2.3h-2.3z M241.2 189.6h2.8v2.8h-2.8z M144.7 292.3h2.6v2.6h-2.6z M111.2 357.3h2v2h-2z M263.1 252.5h2.1v2.1h-2.1z M187.6 235.2h1.9v1.9h-1.9z M18.9 310.8h2.7v2.7h-2.7z M314.1 162.1h2.4v2.4h-2.4z M8.8 294.3h2.9v2.9h-2.9z M170.2 183.1h2.3v2.3h-2.3z M285.1 278.9h2.3v2.3h-2.3z M165.7 203.5h2v2h-2z M223.9 161.1h1.4v1.4h-1.4z M277.9 211.4h1.9v1.9h-1.9z M39.2 188.3h2.2v2.2h-2.2z M178.2 242.9h2.3v2.3h-2.3z M45.9 271.6h1.4v1.4h-1.4z M75.1 231.8h1.7v1.7h-1.7z M113.1 254.8h2.4v2.4h-2.4z M40.3 283.3h1.8v1.8h-1.8z M79.1 184.8h2.1v2.1h-2.1z M5.7 198h1.8v1.8h-1.8z M328 249.3h2v2h-2z M293.3 271.2h2.4v2.4h-2.4z M118.9 183.5h1.6v1.6h-1.6z M25.1 268.6h1.4v1.4h-1.4z M148.6 212.1h1.2v1.2h-1.2z M229.3 165.6h2.2v2.2h-2.2z M141 331h1.9v1.9h-1.9z M47 240.8h2v2h-2z M26.8 205h1.5v1.5h-1.5z M71.5 320.1h1.7v1.7h-1.7z M228.8 163.5h3v3h-3z M287.7 246.6h1.3v1.3h-1.3z M157 294.3h1.7v1.7h-1.7z M0.9 220.8h2.3v2.3h-2.3z M28.9 262.5h2.6v2.6h-2.6z M216.1 315.7h2.6v2.6h-2.6z M290.5 242.2h2.4v2.4h-2.4z M321.8 297.4h3v3h-3z M317.3 231.3h1.4v1.4h-1.4z M94.1 183h1.4v1.4h-1.4z M144 348.1h2.9v2.9h-2.9z M216 355.3h1.7v1.7h-1.7z M52.4 342.2h2.8v2.8h-2.8z M97.5 307.8h1.5v1.5h-1.5z M313.4 216.8h1.5v1.5h-1.5z M327.3 169.8h1.6v1.6h-1.6z M333.9 251h1.9v1.9h-1.9z M201.9 168.2h1.2v1.2h-1.2z M129.5 341.1h2.8v2.8h-2.8z M278.5 331.3h2v2h-2z M252.9 288.4h1.5v1.5h-1.5z M20.9 302.6h2v2h-2z M300.1 355.3h2.1v2.1h-2.1z M35.3 226.1h2v2h-2z M82.8 240.3h2.4v2.4h-2.4z M247.8 300.1h1.5v1.5h-1.5z M320.8 250.6h1.2v1.2h-1.2z M273.1 219.8h3v3h-3z M50.5 336.9h2.5v2.5h-2.5z M25.3 299.6h1.4v1.4h-1.4z M38.7 222.5h2.5v2.5h-2.5z M153.4 174.7h2.8v2.8h-2.8z M114.5 180.4h1.9v1.9h-1.9z M287.3 267.6h2.7v2.7h-2.7z M283.5 300.6h1.4v1.4h-1.4z M86.2 195.7h2.2v2.2h-2.2z M70.7 200.4h2.2v2.2h-2.2z M154.9 266.2h2.4v2.4h-2.4z M273.3 185.3h2.1v2.1h-2.1z M79.9 349.7h2.8v2.8h-2.8z M112.6 357.3h2.8v2.8h-2.8z M270.9 179.4h1.7v1.7h-1.7z M211.8 217.6h1.7v1.7h-1.7z M2.4 181.1h2.9v2.9h-2.9z M92.5 199.4h2.1v2.1h-2.1z M219.1 299.7h2.6v2.6h-2.6z M127.4 356.5h2.5v2.5h-2.5z M58.8 304.4h2.5v2.5h-2.5z M223.9 227h1.9v1.9h-1.9z M173.8 239.4h2.7v2.7h-2.7z M27 184.8h2.8v2.8h-2.8z M315.8 163.7h1.7v1.7h-1.7z M238.6 286h1.5v1.5h-1.5z M229.9 278h1.5v1.5h-1.5z M247.7 338.1h2.8v2.8h-2.8z M242 277.2h3v3h-3z M62.1 280.9h2v2h-2z M1.8 196.3h2.3v2.3h-2.3z M46.9 283.3h1.2v1.2h-1.2z M278.5 215.9h2.6v2.6h-2.6z M214.9 227.3h1.6v1.6h-1.6z M297.1 189.5h2.4v2.4h-2.4z M47.2 288.2h2.1v2.1h-2.1z M153.6 359.1h1.4v1.4h-1.4z M304.8 170.4h1.3v1.3h-1.3z M293 234.3h2.1v2.1h-2.1z M33.2 294.6h1.3v1.3h-1.3z M146.5 202.8h2.9v2.9h-2.9z M315.8 272.3h2v2h-2z M332.3 341.2h2.2v2.2h-2.2z M10.7 210.2h2.4v2.4h-2.4z M269 324.9h2.9v2.9h-2.9z M70.5 339.3h1.9v1.9h-1.9z M169.4 170.5h2.1v2.1h-2.1z M185.5 290.2h2.1v2.1h-2.1z M49.5 338.8h1.5v1.5h-1.5z M324.5 219.8h2.6v2.6h-2.6z M89.2 312.3h2v2h-2z M37.3 269.1h1.3v1.3h-1.3z M255.8 198.1h2.8v2.8h-2.8z M85.2 179.8h2.4v2.4h-2.4z M92.1 276.8h2.9v2.9h-2.9z M145.2 355.1h2.4v2.4h-2.4z M218.8 165.7h2.8v2.8h-2.8z M294.5 170.1h2.4v2.4h-2.4z M32.4 341.2h2.6v2.6h-2.6z M5.3 322.3h2.2v2.2h-2.2z M211.9 190.9h2.9v2.9h-2.9z M187.7 312.8h2v2h-2z M188.1 244.8h1.2v1.2h-1.2z M110.7 358.3h2.4v2.4h-2.4z M7.7 356h2.5v2.5h-2.5z M223.7 192.1h2.8v2.8h-2.8z M58.9 355.3h1.2v1.2h-1.2z M226.5 214h2.4v2.4h-2.4z M288.1 266.4h2.5v2.5h-2.5z M77 325.1h1.3v1.3h-1.3z M166.1 196.5h1.5v1.5h-1.5z M33.1 214.3h1.5v1.5h-1.5z M36.4 327.1h2.1v2.1h-2.1z M292.1 314.1h1.6v1.6h-1.6z M254.3 325.1h1.4v1.4h-1.4z M319.2 179.9h2.6v2.6h-2.6z M268 282.3h2.3v2.3h-2.3z M221.7 335h2v2h-2z M95.4 226.6h1.4v1.4h-1.4z M24.1 209.6h2.1v2.1h-2.1z M314.5 287.5h2.6v2.6h-2.6z M246.6 264.6h1.8v1.8h-1.8z M48.9 195h2v2h-2z M220.3 358.8h2.3v2.3h-2.3z M27.4 339.7h1.8v1.8h-1.8z M77 174.5h2.8v2.8h-2.8z M148.2 207.1h1.7v1.7h-1.7z M268.7 324.8h2.9v2.9h-2.9z M126.2 246.4h1.4v1.4h-1.4z M96.2 340.4h2.7v2.7h-2.7z M268.5 331.3h2.1v2.1h-2.1z M108.5 167.2h2.6v2.6h-2.6z M227.4 320.7h2.3v2.3h-2.3z M314 338.7h1.6v1.6h-1.6z M316.1 297.1h2.1v2.1h-2.1z M294.1 318.4h2.3v2.3h-2.3z M195.4 289h2.3v2.3h-2.3z M20.3 251.2h2.6v2.6h-2.6z M2.1 198.2h2.7v2.7h-2.7z M74.5 170.9h1.8v1.8h-1.8z M34.9 175.7h2.9v2.9h-2.9z M208.3 326.7h1.3v1.3h-1.3z M219.3 171.4h1.3v1.3h-1.3z M15.3 209.5h2.6v2.6h-2.6z M95.2 298.7h1.6v1.6h-1.6z M72.2 207.5h1.8v1.8h-1.8z M253.5 324h1.6v1.6h-1.6z M270.9 198.3h2.9v2.9h-2.9z M55.8 332.8h2.9v2.9h-2.9z M65.3 258.4h2.4v2.4h-2.4z M148.7 355.7h1.2v1.2h-1.2z M143.2 344.6h1.9v1.9h-1.9z M241.4 160.5h2.1v2.1h-2.1z M30.8 249.3h1.4v1.4h-1.4z M161.6 193.2h2.5v2.5h-2.5z M169.3 294.8h2.5v2.5h-2.5z M135.9 163.9h2.5v2.5h-2.5z M114.6 255.8h2.2v2.2h-2.2z M324.8 317.6h2.7v2.7h-2.7z M170.1 277.2h1.8v1.8h-1.8z M144.1 311.8h2.1v2.1h-2.1z M282.7 276.7h2.6v2.6h-2.6z M207.1 285.9h2v2h-2z M255.4 199h2.8v2.8h-2.8z M62.1 245.1h2.2v2.2h-2.2z M84.4 346.6h1.2v1.2h-1.2z M97.6 278h1.9v1.9h-1.9z M173.5 355.5h1.7v1.7h-1.7z M86.8 219h1.6v1.6h-1.6z M139.9 244.7h2.5v2.5h-2.5z M234.6 219.6h3v3h-3z M86.3 323.3h2.1v2.1h-2.1z M300.2 209.1h1.9v1.9h-1.9z M96.9 319.9h2.8v2.8h-2.8z M63.8 277.6h1.3v1.3h-1.3z M256.4 210.6h1.4v1.4h-1.4z M331.4 303.8h1.6v1.6h-1.6z M274.3 168.1h1.9v1.9h-1.9z M58.3 268.8h2.2v2.2h-2.2z M254.9 345.1h1.8v1.8h-1.8z M16.6 244.6h2.4v2.4h-2.4z M156.3 212.6h2.3v2.3h-2.3z M183.9 276.7h2.9v2.9h-2.9z M286.2 180.6h2.5v2.5h-2.5z M121 285.5h1.9v1.9h-1.9z M322.9 320.2h2.4v2.4h-2.4z M84.1 184.1h1.4v1.4h-1.4z M190.7 237.1h3v3h-3z M138.4 200.5h2.9v2.9h-2.9z M171.9 318.4h1.7v1.7h-1.7z M183.3 310.8h3v3h-3z M17.8 272.6h2.6v2.6h-2.6z M96.1 234.4h1.6v1.6h-1.6z M58 223.2h2.5v2.5h-2.5z M71.9 327.6h1.6v1.6h-1.6z M142.6 346.8h2.6v2.6h-2.6z M303.8 170.1h1.8v1.8h-1.8z M76.6 323.7h1.3v1.3h-1.3z M92.1 326.4h1.9v1.9h-1.9z M99 224.6h1.9v1.9h-1.9z M224.4 230.1h1.9v1.9h-1.9z M267.1 256h2.8v2.8h-2.8z M103.9 194.5h2.7v2.7h-2.7z M115.8 224.8h1.4v1.4h-1.4z M291.5 348.3h2.2v2.2h-2.2z M14.1 189.2h2.9v2.9h-2.9z M143.8 263.1h2.1v2.1h-2.1z M220.5 257.8h2.9v2.9h-2.9z M233.8 216.3h2.6v2.6h-2.6z M111.3 167h2.2v2.2h-2.2z M186.7 358.4h1.2v1.2h-1.2z M114.2 308.1h1.6v1.6h-1.6z M52.7 232.2h2.9v2.9h-2.9z M181.5 356.5h3v3h-3z M183.5 315.5h2.1v2.1h-2.1z M189.9 347.9h2.8v2.8h-2.8z M254.1 200h1.5v1.5h-1.5z M237.1 184.3h1.6v1.6h-1.6z M137.4 219h2v2h-2z M249.1 318.8h2.3v2.3h-2.3z M183.7 185.2h1.3v1.3h-1.3z M8.1 224.8h2.2v2.2h-2.2z M94 308.9h1.8v1.8h-1.8z M211.3 322.9h2.3v2.3h-2.3z M52.8 323.6h1.8v1.8h-1.8z M319.3 285.8h2.9v2.9h-2.9z M246.1 250.2h1.7v1.7h-1.7z M251.1 239.1h1.8v1.8h-1.8z M211.1 165.4h2.1v2.1h-2.1z M203.1 320.7h1.8v1.8h-1.8z M234.1 229.9h1.2v1.2h-1.2z M200.1 233.5h2.1v2.1h-2.1z M102.7 306.8h1.6v1.6h-1.6z M243.9 268.6h2.7v2.7h-2.7z M82.1 201.4h1.2v1.2h-1.2z M48.9 334.7h3v3h-3z M40.5 215h2v2h-2z M178.2 311.5h2.1v2.1h-2.1z M8.1 276.8h1.4v1.4h-1.4z M106.5 224.6h2.5v2.5h-2.5z M187.5 305h2.7v2.7h-2.7z M172.2 213.3h2.2v2.2h-2.2z M322.6 322.7h1.3v1.3h-1.3z M291.5 231.3h2.8v2.8h-2.8z M238.7 182.2h2.3v2.3h-2.3z M211 216.6h2.4v2.4h-2.4z M4.9 257.5h2.4v2.4h-2.4z M39.6 322.6h2.6v2.6h-2.6z M300.7 355.7h1.7v1.7h-1.7z M24.4 179.6h1.4v1.4h-1.4z M88.8 244.7h1.8v1.8h-1.8z M308.7 315.8h1.4v1.4h-1.4z M13.7 268.8h2.6v2.6h-2.6z M36.1 314.1h1.8v1.8h-1.8z M247.4 168.8h1.6v1.6h-1.6z M250.1 181.5h2.9v2.9h-2.9z M28.9 178.4h2v2h-2z M300.8 230.7h1.4v1.4h-1.4z M36.5 276.5h1.4v1.4h-1.4z M279.5 322h2.7v2.7h-2.7z M107.9 236.7h2.6v2.6h-2.6z M247.9 238.9h2.5v2.5h-2.5z M316.7 323.5h2.7v2.7h-2.7z M211.6 236.4h2.4v2.4h-2.4z M55.7 343.1h2.4v2.4h-2.4z M75.3 177.5h1.5v1.5h-1.5z M317.5 319.2h2.8v2.8h-2.8z M121 213.1h1.6v1.6h-1.6z M114.8 162.5h2.2v2.2h-2.2z M134.7 323.2h1.9v1.9h-1.9z M169.5 217.9h2.5v2.5h-2.5z M111.1 250.9h2.7v2.7h-2.7z M254.2 318.4h2.2v2.2h-2.2z M43 177.5h2.8v2.8h-2.8z M326.7 287.2h1.7v1.7h-1.7z M68.8 207.8h2.8v2.8h-2.8z M122 301.9h2.9v2.9h-2.9z M303.6 338.2h1.8v1.8h-1.8z M97.1 303.5h1.3v1.3h-1.3z M107.5 223h2.7v2.7h-2.7z M332.1 300.8h2.4v2.4h-2.4z M77.7 241.1h2.2v2.2h-2.2z M65.5 314.6h2.1v2.1h-2.1z M292.7 354h1.5v1.5h-1.5z M202.7 302.1h1.6v1.6h-1.6z M148.2 297.4h1.4v1.4h-1.4z M32.5 251.9h2v2h-2z M270.5 184h1.6v1.6h-1.6z M165.7 318.1h2.1v2.1h-2.1z M221.5 214.7h2.1v2.1h-2.1z M129.1 343.6h2.3v2.3h-2.3z M177.7 349.3h1.5v1.5h-1.5z M122.2 348.6h2.9v2.9h-2.9z M114.6 325.4h2.9v2.9h-2.9z M116 177.4h1.6v1.6h-1.6z M332.7 322.9h1.4v1.4h-1.4z M289.3 212.9h1.7v1.7h-1.7z M225 211.7h2v2h-2z M43.6 210.1h1.8v1.8h-1.8z M296.9 199.7h1.2v1.2h-1.2z M317.4 205.4h1.9v1.9h-1.9z M129.8 284.9h2.8v2.8h-2.8z M177 329.8h1.7v1.7h-1.7z M183.7 275h1.6v1.6h-1.6z M321.9 177h2v2h-2z M173.2 356.4h2.6v2.6h-2.6z M112.2 210.3h2.2v2.2h-2.2z M164.9 341.9h1.4v1.4h-1.4z M300.9 262.7h1.8v1.8h-1.8z M50.3 202.3h1.8v1.8h-1.8z M297 296.3h2.2v2.2h-2.2z M140.3 193.3h1.6v1.6h-1.6z M32.9 257.1h2.1v2.1h-2.1z M50.9 182.3h1.6v1.6h-1.6z M185.8 305.6h2.2v2.2h-2.2z M115.9 236.2h2.6v2.6h-2.6z M173.9 298.8h1.5v1.5h-1.5z M99.2 215.5h1.6v1.6h-1.6z M328.5 225.5h2.7v2.7h-2.7z M34.9 176.8h2.8v2.8h-2.8z M303.7 305.9h2.3v2.3h-2.3z M61.5 285.4h1.6v1.6h-1.6z M196.7 311.7h1.5v1.5h-1.5z M211.1 306.7h1.8v1.8h-1.8z M102.6 270.9h2.4v2.4h-2.4z M331.2 294.3h1.6v1.6h-1.6z M256.7 160.7h1.5v1.5h-1.5z M198.3 330.4h1.4v1.4h-1.4z M109.5 183.4h1.6v1.6h-1.6z M89.9 324.9h2.5v2.5h-2.5z M178.5 297.5h2.6v2.6h-2.6z M220.6 219.6h1.5v1.5h-1.5z M324.4 189.9h3v3h-3z M104.6 164.8h1.9v1.9h-1.9z M61.8 303.9h2.7v2.7h-2.7z M171.7 222.8h2.6v2.6h-2.6z M92.9 242.9h2.8v2.8h-2.8z M296.1 359h2.5v2.5h-2.5z M93.8 356.1h1.9v1.9h-1.9z M234.5 304.4h1.7v1.7h-1.7z M117.1 236.6h2.5v2.5h-2.5z M321.6 255.8h1.2v1.2h-1.2z M173.2 168.5h2.4v2.4h-2.4z M300.1 274.2h2.2v2.2h-2.2z M279.8 275.5h1.5v1.5h-1.5z M309.6 202.3h2.6v2.6h-2.6z M40.8 275.7h1.5v1.5h-1.5z M164.3 256.3h2.5v2.5h-2.5z M64.5 321.2h1.8v1.8h-1.8z M277.3 313.7h1.3v1.3h-1.3z M315.1 325.2h1.9v1.9h-1.9z M137.9 330.5h1.5v1.5h-1.5z M14.8 313.4h2.9v2.9h-2.9z M76 183.1h2.7v2.7h-2.7z M27.9 180.3h1.7v1.7h-1.7z M268.8 282.5h2.7v2.7h-2.7z M192 207.1h2.3v2.3h-2.3z M159 184.6h2.8v2.8h-2.8z M284.6 289.6h2.2v2.2h-2.2z M128 253.4h1.5v1.5h-1.5z M296.4 319h1.7v1.7h-1.7z M230.4 171.8h2v2h-2z M244.1 332.9h2.7v2.7h-2.7z M132.7 334.4h1.9v1.9h-1.9z M133.6 169.7h1.5v1.5h-1.5z M176 267.8h2.7v2.7h-2.7z M256 197.1h3v3h-3z M21.3 251.2h2.2v2.2h-2.2z M179.9 183.2h1.5v1.5h-1.5z M21.3 174.7h2.3v2.3h-2.3z M116.3 212.1h1.3v1.3h-1.3z M326.3 325.7h1.6v1.6h-1.6z M19 165.6h1.6v1.6h-1.6z M139.8 316.4h2.2v2.2h-2.2z M253.9 177.8h1.9v1.9h-1.9z M178.7 357.3h2.6v2.6h-2.6z M318.4 291.1h2.2v2.2h-2.2z M236.1 295.2h1.5v1.5h-1.5z M186.3 247.3h1.5v1.5h-1.5z M178.1 350.6h1.6v1.6h-1.6z M192 300.5h2.1v2.1h-2.1z M234.9 292.3h2.4v2.4h-2.4z M94.3 321.6h1.8v1.8h-1.8z M297.2 162.2h2.5v2.5h-2.5z M281 355.7h1.8v1.8h-1.8z M284.3 306.5h2.5v2.5h-2.5z M310.9 283.4h2.3v2.3h-2.3z M281 310.4h1.3v1.3h-1.3z M331.8 348.9h1.5v1.5h-1.5z M308.8 248.6h1.7v1.7h-1.7z M323.1 303.4h2.3v2.3h-2.3z M143.5 339h2.4v2.4h-2.4z M159 279.4h1.3v1.3h-1.3z M123 314.2h1.3v1.3h-1.3z M219.9 196.7h2.4v2.4h-2.4z M323.8 243.8h2.8v2.8h-2.8z M307.1 190.5h1.5v1.5h-1.5z M22.5 335.5h1.6v1.6h-1.6z M175.5 214.5h2.9v2.9h-2.9z M11.8 329.1h2.1v2.1h-2.1z M257.1 263.5h1.7v1.7h-1.7z M268.7 207h1.3v1.3h-1.3z M95.2 233.6h1.3v1.3h-1.3z M130 161.8h2.9v2.9h-2.9z M102.9 253.3h2.6v2.6h-2.6z M285.4 171.1h1.9v1.9h-1.9z M297.1 315.7h2.8v2.8h-2.8z M11.6 181.5h2.8v2.8h-2.8z M270.5 228.4h1.2v1.2h-1.2z M109.8 281h1.6v1.6h-1.6z M89.8 264.5h1.3v1.3h-1.3z M215 333h2.6v2.6h-2.6z M269 234.1h2.9v2.9h-2.9z M331.2 226.8h2v2h-2z M168.9 287.4h1.9v1.9h-1.9z M293 354.3h1.7v1.7h-1.7z M327 353.9h2.1v2.1h-2.1z M178.6 334.2h2.2v2.2h-2.2z M284.2 337.9h1.3v1.3h-1.3z M316.7 209.1h1.4v1.4h-1.4z M210.3 181.3h1.9v1.9h-1.9z M234.3 246.1h1.8v1.8h-1.8z M71.9 317.1h2v2h-2z M180.2 182.1h1.5v1.5h-1.5z M37.3 333.4h2.6v2.6h-2.6z M277.5 358.3h2.5v2.5h-2.5z M272.4 329.6h2.6v2.6h-2.6z M314.7 335.5h1.9v1.9h-1.9z M330.8 343h2.1v2.1h-2.1z M246.9 332.5h2.8v2.8h-2.8z M132.3 188h2.4v2.4h-2.4z M200.7 271.8h2.4v2.4h-2.4z M198 280.5h2.4v2.4h-2.4z M290.3 164.9h1.3v1.3h-1.3z M91.2 225.9h1.5v1.5h-1.5z M106 237.1h2.3v2.3h-2.3z M152 299.6h1.7v1.7h-1.7z M89.1 185.4h1.8v1.8h-1.8z M327.8 223.2h2.5v2.5h-2.5z M156.1 314.6h1.7v1.7h-1.7z M140.6 161.1h2.3v2.3h-2.3z M42.9 252.8h1.4v1.4h-1.4z M242.9 315.7h2.8v2.8h-2.8z M268.8 161.9h2.6v2.6h-2.6z M95.8 212.3h1.5v1.5h-1.5z M113.6 212h1.4v1.4h-1.4z M221.6 292.7h2.6v2.6h-2.6z M128.4 235.5h2.7v2.7h-2.7z M311 183.7h2.6v2.6h-2.6z M282.7 265.7h2.5v2.5h-2.5z M257.2 350.2h2.8v2.8h-2.8z M285.7 300.3h1.8v1.8h-1.8z M35.5 249.5h1.6v1.6h-1.6z M96.8 218.3h1.2v1.2h-1.2z M114.1 315h2v2h-2z M239.7 300.2h2.5v2.5h-2.5z M14 259.1h2.6v2.6h-2.6z M233.3 304.8h3v3h-3z M27.1 256.7h1.9v1.9h-1.9z M65.8 202.6h1.5v1.5h-1.5z M101.6 166.9h2.5v2.5h-2.5z M313.8 253.4h1.6v1.6h-1.6z M130.4 227.7h1.7v1.7h-1.7z M297 340.5h2.9v2.9h-2.9z M83.1 323.9h2.4v2.4h-2.4z M325.5 202.5h1.6v1.6h-1.6z M115 166.7h2.7v2.7h-2.7z M213.9 211.4h2.1v2.1h-2.1z M112.5 281.1h2.3v2.3h-2.3z M88.8 270h2v2h-2z M175.9 201.2h1.6v1.6h-1.6z M258 315.5h1.8v1.8h-1.8z M85.8 183.7h2.5v2.5h-2.5z M263.9 256.3h1.9v1.9h-1.9z M37.7 225.4h2.2v2.2h-2.2z M299.5 353.1h2.2v2.2h-2.2z M167.1 252.9h1.3v1.3h-1.3z M120.2 253.9h1.6v1.6h-1.6z M129.8 224.6h1.2v1.2h-1.2z M330.1 266.5h2.2v2.2h-2.2z M169.4 341.6h2.3v2.3h-2.3z M130.6 215.6h1.6v1.6h-1.6z M207.8 340.5h2.7v2.7h-2.7z M25 352.8h2.4v2.4h-2.4z M94.8 236.5h2.4v2.4h-2.4z M236.5 198.3h1.6v1.6h-1.6z M233.4 205.9h1.9v1.9h-1.9z M132.5 323.3h2.1v2.1h-2.1z M176.1 223h2.3v2.3h-2.3z M228.6 248.7h2.1v2.1h-2.1z M143.1 203.4h2.9v2.9h-2.9z M248 327.4h2.3v2.3h-2.3z" fill="#fcd868" opacity="0.45"/>
<path d="M252.8 321.8h2.7v2.7h-2.7z M330.8 342.7h2.1v2.1h-2.1z M240.8 363.3h1.9v1.9h-1.9z M282.2 352.2h1.2v1.2h-1.2z M315.1 416.9h2.2v2.2h-2.2z M276.4 343.7h2.4v2.4h-2.4z M279.2 381.1h1.2v1.2h-1.2z M274.5 390.5h2.3v2.3h-2.3z M235 342.7h1.9v1.9h-1.9z M303.7 379h2.8v2.8h-2.8z M279.2 418.3h1.4v1.4h-1.4z M299.6 337.1h1.4v1.4h-1.4z M325.2 407.4h1.1v1.1h-1.1z M243.7 338.3h1.2v1.2h-1.2z M326.5 381.3h1.6v1.6h-1.6z M288.4 417h2.4v2.4h-2.4z M308.1 324.8h2.1v2.1h-2.1z M261.8 330.8h2.3v2.3h-2.3z M250.9 348.9h1.7v1.7h-1.7z M235.1 413.1h1v1h-1z M299.7 390.7h2.2v2.2h-2.2z M296.3 370.6h1.6v1.6h-1.6z M320.3 371.3h1.4v1.4h-1.4z M272.5 366.1h1.2v1.2h-1.2z M288.5 413.6h2.3v2.3h-2.3z M297.5 331.6h2.3v2.3h-2.3z M317 385.5h1.9v1.9h-1.9z M296.2 342.1h1.2v1.2h-1.2z M231.9 327.2h2.5v2.5h-2.5z M318.4 364h1.6v1.6h-1.6z M255.3 338.2h2.2v2.2h-2.2z M260.9 327.2h1.6v1.6h-1.6z M304.3 347.5h2.4v2.4h-2.4z M252.6 373.5h1.9v1.9h-1.9z M256.9 405.8h2.6v2.6h-2.6z M284.8 333.6h1.8v1.8h-1.8z M220.7 374.8h1.6v1.6h-1.6z M325.6 353.3h1.1v1.1h-1.1z M308.9 410.3h1.9v1.9h-1.9z M298.4 413h2.1v2.1h-2.1z M246.8 381.5h2.6v2.6h-2.6z M228.5 375.4h2.3v2.3h-2.3z M229.2 377.8h1.2v1.2h-1.2z M228.5 404.3h2.5v2.5h-2.5z M225.5 367.2h1v1h-1z M271.7 341.8h1.6v1.6h-1.6z M271.1 405.2h1.7v1.7h-1.7z M317.7 356.8h1.5v1.5h-1.5z M290.6 321.1h1.2v1.2h-1.2z M230.8 382.8h2.1v2.1h-2.1z M242.6 357.9h1.8v1.8h-1.8z M246.6 362.6h2.4v2.4h-2.4z M246.4 377.9h2.7v2.7h-2.7z M314.6 352.7h1.9v1.9h-1.9z M233.8 403.5h1.8v1.8h-1.8z M333 412.1h1.5v1.5h-1.5z M312.2 382.1h1.6v1.6h-1.6z M247.9 320h1v1h-1z M295.4 364.1h1.7v1.7h-1.7z M244.8 404.5h1.4v1.4h-1.4z M282.8 340.6h1.6v1.6h-1.6z M307.1 407.2h1.4v1.4h-1.4z M241.1 386.5h2.5v2.5h-2.5z M234.1 389.9h1.1v1.1h-1.1z M236.2 417.1h1.1v1.1h-1.1z M267.3 351.5h2.1v2.1h-2.1z M281.5 383.2h2v2h-2z M245.8 362.4h1.3v1.3h-1.3z M233.5 328.2h2.8v2.8h-2.8z M305.5 337.6h1.9v1.9h-1.9z M220.1 386.6h1.5v1.5h-1.5z M319.1 385.8h2.6v2.6h-2.6z M321.5 374.8h1.2v1.2h-1.2z M271.2 332.3h1.2v1.2h-1.2z M302.9 417.8h2.8v2.8h-2.8z M317.1 386.4h2.6v2.6h-2.6z M313.2 401.9h2.3v2.3h-2.3z M285.2 360h1.3v1.3h-1.3z M291.8 366.4h2.8v2.8h-2.8z M322.5 417.8h1.3v1.3h-1.3z M310.6 326.6h1.2v1.2h-1.2z M238.4 388.9h2.3v2.3h-2.3z M270.5 348.2h1.2v1.2h-1.2z M229.9 358.6h1.3v1.3h-1.3z M245.5 340.8h2.4v2.4h-2.4z M225.1 331h1.3v1.3h-1.3z M276 340.8h2.5v2.5h-2.5z M263 393.2h1.5v1.5h-1.5z M234.7 345.8h1.3v1.3h-1.3z M303.6 418.7h1.1v1.1h-1.1z M257.3 347.9h1.2v1.2h-1.2z M247.8 406.1h2.6v2.6h-2.6z M273.4 371.7h2.8v2.8h-2.8z M292.7 359.1h2.3v2.3h-2.3z M269 375h2.8v2.8h-2.8z M252.1 378.4h2.7v2.7h-2.7z M297 417.2h1.7v1.7h-1.7z M237.6 342.5h2.2v2.2h-2.2z M274 414.6h1.5v1.5h-1.5z M279.6 362.6h1.2v1.2h-1.2z M298.7 395.9h2.3v2.3h-2.3z M290.7 396.2h1.9v1.9h-1.9z M282.6 334.4h1v1h-1z M296.6 350.7h1.1v1.1h-1.1z M259.6 385.1h2.6v2.6h-2.6z M305.9 400.9h1.5v1.5h-1.5z M244 321.2h2.7v2.7h-2.7z M331.8 355.6h1.6v1.6h-1.6z M297.2 405.8h1v1h-1z M283.2 405.7h1.8v1.8h-1.8z M319.8 374.1h1.8v1.8h-1.8z M289.6 405.7h1.9v1.9h-1.9z M266.2 339.4h2.2v2.2h-2.2z M266.2 351.4h1.4v1.4h-1.4z M245.5 354.8h2.3v2.3h-2.3z M311.1 336.3h2.4v2.4h-2.4z M297 350.8h1.6v1.6h-1.6z M328.5 374.1h2.6v2.6h-2.6z M275 324.8h1.7v1.7h-1.7z M269.7 366.3h2.6v2.6h-2.6z M273.9 338.5h2.6v2.6h-2.6z M238.2 332.8h1.6v1.6h-1.6z M229.9 363.1h1.5v1.5h-1.5z M322.3 384.5h1.8v1.8h-1.8z M318.5 369.3h2.6v2.6h-2.6z M288.7 371.1h2.3v2.3h-2.3z M277.6 331.9h1.6v1.6h-1.6z M240.1 349.9h2.7v2.7h-2.7z M251.5 338.9h2v2h-2z M258.9 417h2.4v2.4h-2.4z M323 346.2h1.4v1.4h-1.4z M263.5 388.8h1.3v1.3h-1.3z M302.9 371h1.9v1.9h-1.9z M307.6 347.2h2.4v2.4h-2.4z M231 413.2h2.6v2.6h-2.6z M312.6 346.4h2v2h-2z M328.2 386.8h2.8v2.8h-2.8z M233.5 332.6h1v1h-1z M291.6 403h1.5v1.5h-1.5z M314.9 361h2v2h-2z M242.3 322.6h2v2h-2z M255.2 418.7h2.5v2.5h-2.5z M331.9 344.6h2.4v2.4h-2.4z M331.6 341.1h1.6v1.6h-1.6z M288.7 403h1.1v1.1h-1.1z M267.9 336.8h1.7v1.7h-1.7z M229.7 410.9h1.4v1.4h-1.4z M329.5 394.8h2.7v2.7h-2.7z M243.4 342.4h1.9v1.9h-1.9z M248.7 391h1.1v1.1h-1.1z M236.3 412.8h1.4v1.4h-1.4z M319.4 402.1h2.4v2.4h-2.4z M327.2 376h1v1h-1z M254.5 359.2h1.5v1.5h-1.5z M276 406.1h1.9v1.9h-1.9z M321.4 322.3h1v1h-1z M271.4 371.4h1.4v1.4h-1.4z M256 411.4h2.6v2.6h-2.6z M237.4 416.3h2v2h-2z M284.8 329h1.2v1.2h-1.2z M230.4 349.9h1.8v1.8h-1.8z M271.3 419.4h2.5v2.5h-2.5z M229.3 363.1h2.4v2.4h-2.4z M296.2 341.6h1.9v1.9h-1.9z M252.4 372.5h2.7v2.7h-2.7z M254 328.6h1.5v1.5h-1.5z M270.2 411.1h2.3v2.3h-2.3z M229.8 417h2.2v2.2h-2.2z M282.3 374.5h1.3v1.3h-1.3z M288.9 329.4h2.7v2.7h-2.7z M230.7 366.7h1.4v1.4h-1.4z M308.2 400.4h2v2h-2z M248 410.4h2.5v2.5h-2.5z M222.7 328h2.1v2.1h-2.1z M314.6 385.5h1.5v1.5h-1.5z M271.2 395.2h1.1v1.1h-1.1z M248.4 358h2.6v2.6h-2.6z M247.3 376.2h1.4v1.4h-1.4z M244.6 336.7h2v2h-2z M324.1 415.1h1.6v1.6h-1.6z M326.1 352.7h2.2v2.2h-2.2z M248.7 343h1.2v1.2h-1.2z M260.5 349h2.7v2.7h-2.7z M327.3 355.5h1.7v1.7h-1.7z M313.1 341.1h1.5v1.5h-1.5z M239.3 417.1h1.3v1.3h-1.3z M234 326.3h2.6v2.6h-2.6z M328.1 418.2h1.9v1.9h-1.9z M323.7 335.2h1.9v1.9h-1.9z M227.9 339.5h1.1v1.1h-1.1z M248.8 336.5h2.7v2.7h-2.7z M309.6 337.9h1.8v1.8h-1.8z M251.8 331.2h1.5v1.5h-1.5z M266.2 400.5h2.3v2.3h-2.3z M268.9 323.2h2.8v2.8h-2.8z M301.1 401.1h2.3v2.3h-2.3z M279.4 392.8h2.4v2.4h-2.4z M300.5 404.1h2.4v2.4h-2.4z M220.8 381.1h1.1v1.1h-1.1z M257 407.3h2.2v2.2h-2.2z M243.3 384.6h1.9v1.9h-1.9z M286.9 351.9h1.3v1.3h-1.3z M233.6 328.2h2.8v2.8h-2.8z M262.5 358.1h2.2v2.2h-2.2z M241.6 380.6h1.5v1.5h-1.5z M260.9 397.9h2.1v2.1h-2.1z M239.7 323.9h2.7v2.7h-2.7z M252.9 403.6h1.1v1.1h-1.1z M296.5 383.6h1.7v1.7h-1.7z M322.1 370.9h2.6v2.6h-2.6z M251.4 336.2h2.8v2.8h-2.8z M304.2 323.6h1.7v1.7h-1.7z M331.9 332.7h1.6v1.6h-1.6z M298.6 402.9h2.4v2.4h-2.4z M302.8 410.9h1.3v1.3h-1.3z M246.8 327.7h1.6v1.6h-1.6z M242.9 396.4h1.7v1.7h-1.7z M220.1 416.4h2.4v2.4h-2.4z M241.3 320.9h2.4v2.4h-2.4z M228.3 323.1h2.7v2.7h-2.7z M302.5 369.9h1.1v1.1h-1.1z M275.1 348.7h1.9v1.9h-1.9z M220.5 380.9h2.2v2.2h-2.2z M288.3 382.1h2.1v2.1h-2.1z M314.5 405.3h1.5v1.5h-1.5z M330 386h1v1h-1z M270.3 380.6h2.4v2.4h-2.4z M252.8 358.8h1.3v1.3h-1.3z M245.7 401h1.6v1.6h-1.6z M307.4 413.8h2.8v2.8h-2.8z M329.1 323.1h2.3v2.3h-2.3z M326 398.8h2.3v2.3h-2.3z M266.6 360.7h1.5v1.5h-1.5z M304.3 322.4h1.1v1.1h-1.1z M276.8 346.7h1.7v1.7h-1.7z M293 347.3h1.9v1.9h-1.9z M277.8 328h2.8v2.8h-2.8z M313.1 330.7h1.7v1.7h-1.7z M305 384.5h1.1v1.1h-1.1z M231.1 373.2h1v1h-1z M291.9 402.6h2.6v2.6h-2.6z M307.8 324.8h1.4v1.4h-1.4z M264.1 414.5h2.4v2.4h-2.4z M278.8 337.7h2v2h-2z M257 356.3h2.7v2.7h-2.7z M257.2 366.1h1.7v1.7h-1.7z M243.2 323h1.5v1.5h-1.5z M244.2 341.5h1.3v1.3h-1.3z M297.2 359.9h1.7v1.7h-1.7z M223.2 322.6h2.8v2.8h-2.8z M321.4 407.4h1.9v1.9h-1.9z M315.2 384.9h1.3v1.3h-1.3z M285.2 376.9h1.5v1.5h-1.5z M289.5 379.5h1.3v1.3h-1.3z M233.1 384.1h2.4v2.4h-2.4z M295.4 377.5h2.2v2.2h-2.2z M279.1 358.9h1.2v1.2h-1.2z M279.8 419.5h2.3v2.3h-2.3z M235.2 384h1.3v1.3h-1.3z M290.6 416.2h2.7v2.7h-2.7z M273.3 326.6h1.6v1.6h-1.6z M262.1 365.9h1.6v1.6h-1.6z M318.6 382.6h2.8v2.8h-2.8z M274.7 347.2h2.3v2.3h-2.3z M280.6 399.5h1.3v1.3h-1.3z M275.2 417.4h1.2v1.2h-1.2z M242.3 344.2h2.1v2.1h-2.1z M304.1 374.7h1.6v1.6h-1.6z M326.4 330h1.6v1.6h-1.6z M253.2 346.3h1.3v1.3h-1.3z M330 416h2.1v2.1h-2.1z M322.1 348.9h2.6v2.6h-2.6z M305 399.3h2.3v2.3h-2.3z M221.2 393.5h1.7v1.7h-1.7z M290.4 344.1h2.6v2.6h-2.6z M326.6 392.5h2.7v2.7h-2.7z M292 361h2.6v2.6h-2.6z M319.8 338.3h2v2h-2z M226.1 320.8h1.2v1.2h-1.2z M317.5 338.3h1.1v1.1h-1.1z M324.1 329.5h1.9v1.9h-1.9z M267.9 372.2h1.2v1.2h-1.2z M274.3 331.9h1.7v1.7h-1.7z M301.1 334.8h1v1h-1z M293.9 405.8h1.3v1.3h-1.3z M228.1 337.7h1.2v1.2h-1.2z M279.4 419.4h2v2h-2z M232.8 342.4h2.4v2.4h-2.4z M280 369.9h2.4v2.4h-2.4z M263.9 336.1h1.2v1.2h-1.2z M278.2 419.3h2.2v2.2h-2.2z M309.2 390.1h2.3v2.3h-2.3z M225.8 361.6h2.3v2.3h-2.3z M223.5 320.5h2.1v2.1h-2.1z M240.2 376.2h1v1h-1z M224.4 321.7h2.1v2.1h-2.1z M290.2 375h2.6v2.6h-2.6z M251.1 349.4h2.5v2.5h-2.5z M284.6 353.2h1.6v1.6h-1.6z M254.3 370.9h1.6v1.6h-1.6z M263 383.9h2v2h-2z M277.7 322.4h2v2h-2z M265.4 346h2.4v2.4h-2.4z M299.5 411.7h1.2v1.2h-1.2z M263.6 395h1.3v1.3h-1.3z M243 351.3h1.1v1.1h-1.1z M298.2 399h1.3v1.3h-1.3z M232.7 385h2.6v2.6h-2.6z M330.4 376.8h2v2h-2z M333.7 326.4h1.7v1.7h-1.7z M299.1 407.1h2.3v2.3h-2.3z M276.2 367.8h2.6v2.6h-2.6z M305.3 340.5h2.7v2.7h-2.7z M312.8 382.4h2.4v2.4h-2.4z M303.2 354.3h2.3v2.3h-2.3z M263.6 323.1h1.7v1.7h-1.7z M281.8 396.6h2v2h-2z M233.4 357.9h2.4v2.4h-2.4z M259.6 388.6h1.6v1.6h-1.6z M241.3 410.6h1.2v1.2h-1.2z M308 384.7h1.1v1.1h-1.1z M221.7 344.9h2.2v2.2h-2.2z M308.4 356.7h2.6v2.6h-2.6z M232.7 397.9h2.3v2.3h-2.3z M259 418.6h1.6v1.6h-1.6z M249 384.2h2v2h-2z M239.4 355.1h2.5v2.5h-2.5z M258.7 396.8h2.1v2.1h-2.1z M307.5 343h2.6v2.6h-2.6z M233.1 378.3h2.7v2.7h-2.7z M235.4 331.2h1.4v1.4h-1.4z M223.5 388.4h1.9v1.9h-1.9z M250.1 391h1.9v1.9h-1.9z M252.7 340.9h1.5v1.5h-1.5z M317.3 419.8h1.7v1.7h-1.7z M289.5 395.5h1.5v1.5h-1.5z M297.5 364.8h2.7v2.7h-2.7z M237.9 329.1h1.1v1.1h-1.1z M268.9 363.1h1.3v1.3h-1.3z M311.8 395.7h2.2v2.2h-2.2z M295 389.6h2.4v2.4h-2.4z M273.3 343.5h1.3v1.3h-1.3z M256.9 374h2.7v2.7h-2.7z M317.6 373.4h1.1v1.1h-1.1z M236.5 342.8h1.2v1.2h-1.2z M263.7 388.7h1v1h-1z M244.9 411h1.9v1.9h-1.9z M279.8 378.1h2.2v2.2h-2.2z M245.9 387.9h1.2v1.2h-1.2z M310.5 398.4h1.6v1.6h-1.6z M306.9 333.7h2.6v2.6h-2.6z M275.1 367.1h1.3v1.3h-1.3z M310.5 368.7h1.5v1.5h-1.5z M243.8 378.2h1.1v1.1h-1.1z M262.6 326.1h2.6v2.6h-2.6z M264 327.2h1.9v1.9h-1.9z M246.4 379.8h2.5v2.5h-2.5z M285.2 403.9h2.1v2.1h-2.1z M311.1 359.6h2.2v2.2h-2.2z M257.1 393h2.6v2.6h-2.6z M253.5 368.6h1.8v1.8h-1.8z M236 354.2h1.6v1.6h-1.6z M317.2 389.9h1.2v1.2h-1.2z M237 347.5h2.1v2.1h-2.1z M246.6 334.8h2.2v2.2h-2.2z M260.8 367.8h2.5v2.5h-2.5z M327.3 389.4h2.3v2.3h-2.3z M289.7 374.2h1.2v1.2h-1.2z M282 340.8h1.4v1.4h-1.4z M255.1 370.1h2.6v2.6h-2.6z M235.9 358.1h1.3v1.3h-1.3z M311.1 343.8h1.8v1.8h-1.8z M264.7 379.7h1.2v1.2h-1.2z M293.8 390.8h1.5v1.5h-1.5z M331.1 388.9h1.3v1.3h-1.3z M257.3 331.9h1.7v1.7h-1.7z M222.9 390.1h2.8v2.8h-2.8z M325.7 338.1h1.9v1.9h-1.9z M288.9 370.5h2v2h-2z M228.7 369.8h2v2h-2z M281.1 417.7h2v2h-2z M280.8 381.7h1.1v1.1h-1.1z M286.5 378.9h2.4v2.4h-2.4z M266.4 395h1.7v1.7h-1.7z M233.9 355.6h2.7v2.7h-2.7z M279.9 384.8h1.1v1.1h-1.1z M317.9 376.8h1.6v1.6h-1.6z M317.3 389.9h1v1h-1z M261.3 379.8h1.4v1.4h-1.4z M301.2 331.3h2.3v2.3h-2.3z M312.8 364.3h1.2v1.2h-1.2z M284.6 386.7h1.9v1.9h-1.9z M307.9 418.7h1.9v1.9h-1.9z M310.1 417.9h2.7v2.7h-2.7z M230.7 387.7h2v2h-2z M245.2 391.2h1.5v1.5h-1.5z M224.3 397.4h2.2v2.2h-2.2z M229.2 348.5h1.5v1.5h-1.5z M264.6 323.3h1.3v1.3h-1.3z M331.8 393.4h2.5v2.5h-2.5z M327 363.8h1.7v1.7h-1.7z M294.3 334.4h1.8v1.8h-1.8z M319.8 363.6h1.1v1.1h-1.1z M239.8 393.2h2.8v2.8h-2.8z M257.5 383.2h2.8v2.8h-2.8z M303.9 321.5h1.2v1.2h-1.2z M292.9 373.2h2v2h-2z M224.8 362.1h2v2h-2z M251 366.8h1.9v1.9h-1.9z M267.6 338.8h2.7v2.7h-2.7z M324.4 363.1h1.6v1.6h-1.6z M301.7 389.9h2.5v2.5h-2.5z M237.2 354.5h2.5v2.5h-2.5z M271.4 353.9h2.2v2.2h-2.2z M300.3 340.5h1.3v1.3h-1.3z M232.9 329.5h1.3v1.3h-1.3z M277.3 335h1.2v1.2h-1.2z M327.2 349.3h1.6v1.6h-1.6z M225.7 367.1h2.1v2.1h-2.1z M304.6 406.2h2.4v2.4h-2.4z M224.5 332.9h1.8v1.8h-1.8z M296.2 417.2h2.7v2.7h-2.7z M326.2 399h2v2h-2z M232.4 405.1h1.1v1.1h-1.1z M293.2 395.6h2v2h-2z M282.2 397.6h1.4v1.4h-1.4z M320.1 393h2.2v2.2h-2.2z M328.8 393.1h2.5v2.5h-2.5z M259.5 341.2h1.1v1.1h-1.1z M317.4 407.7h1.9v1.9h-1.9z M325.2 352.2h2.7v2.7h-2.7z M271 368.7h1.2v1.2h-1.2z M231.2 403.3h1.4v1.4h-1.4z M226.5 334.9h2.7v2.7h-2.7z M301 348h1.7v1.7h-1.7z M263.2 400.1h2.7v2.7h-2.7z M239.8 331.4h1.5v1.5h-1.5z M321.9 346.9h1.7v1.7h-1.7z M297.2 409.9h1.4v1.4h-1.4z M249 388.5h2.7v2.7h-2.7z M290.3 356.1h2.5v2.5h-2.5z M309.3 339.2h1.8v1.8h-1.8z M231.4 374.6h1.9v1.9h-1.9z M288.3 414.7h1.6v1.6h-1.6z M311 334.8h1.2v1.2h-1.2z M326.4 322.2h2.1v2.1h-2.1z M332.4 361.4h1.3v1.3h-1.3z M227.1 339.4h1.6v1.6h-1.6z M291.4 367.9h1v1h-1z M248.3 401.4h2.4v2.4h-2.4z M274.7 338.1h1v1h-1z M243.9 373.8h1.7v1.7h-1.7z M230.5 381.4h2.3v2.3h-2.3z M283.2 392.3h1.4v1.4h-1.4z M288.1 407.1h1.2v1.2h-1.2z M313.5 322.5h1.1v1.1h-1.1z M279.7 375.2h1.7v1.7h-1.7z M307.4 356.3h1.5v1.5h-1.5z M249.3 325.1h2v2h-2z M300.8 376.4h1.8v1.8h-1.8z M303.9 355h2.8v2.8h-2.8z M265.7 334.6h2.6v2.6h-2.6z M304.2 377.4h1.2v1.2h-1.2z M316.9 352.9h1.5v1.5h-1.5z M306.1 412.2h2.6v2.6h-2.6z M254.6 417.8h2.5v2.5h-2.5z M246 416.5h1.4v1.4h-1.4z M312.4 368.5h1.5v1.5h-1.5z M266.9 320.3h2.7v2.7h-2.7z M240.7 345.2h2.2v2.2h-2.2z M293.8 409.3h2.1v2.1h-2.1z M311.5 370.9h1.3v1.3h-1.3z M312.4 342.4h2.4v2.4h-2.4z M267.9 330.8h2.1v2.1h-2.1z M262.5 351.8h1.8v1.8h-1.8z M305.3 385.8h2.3v2.3h-2.3z M273.5 368.9h2.2v2.2h-2.2z M317.7 364.5h2.7v2.7h-2.7z M235.3 388.7h2.3v2.3h-2.3z M259.1 321.2h2v2h-2z M262.9 399.3h2.1v2.1h-2.1z M287.2 335.5h2.2v2.2h-2.2z M241.6 386.6h2v2h-2z M228 413.9h2.4v2.4h-2.4z M276.5 361.3h1.7v1.7h-1.7z M230.5 344.1h1.5v1.5h-1.5z M331.4 358.1h1.6v1.6h-1.6z M299.9 324.4h2v2h-2z M294.2 393.4h1.5v1.5h-1.5z M257.9 385.1h2.1v2.1h-2.1z M296.7 379.6h1.1v1.1h-1.1z M278.1 326.9h1.3v1.3h-1.3z M320.8 358.8h1.6v1.6h-1.6z M331.6 386.4h1.5v1.5h-1.5z M260.4 385.6h1.2v1.2h-1.2z M331 404.3h1.5v1.5h-1.5z M231.4 419.7h2.3v2.3h-2.3z M313.8 336.1h2.6v2.6h-2.6z M241.7 388.7h2.6v2.6h-2.6z M257.5 415.3h1.7v1.7h-1.7z M252.9 398h2.1v2.1h-2.1z M274.7 334.2h2.7v2.7h-2.7z M305.8 321.6h1.9v1.9h-1.9z M264.5 378.2h1.4v1.4h-1.4z M266.6 378.5h2.7v2.7h-2.7z M283.3 348.4h2.7v2.7h-2.7z M232.3 321.5h1.8v1.8h-1.8z M276 395.3h1.3v1.3h-1.3z M273.9 399.1h1.5v1.5h-1.5z M310.2 415.8h2.6v2.6h-2.6z M287.6 404.6h1.7v1.7h-1.7z M327.8 415.6h1.1v1.1h-1.1z M252.5 352h2.1v2.1h-2.1z M328.4 418.5h1.3v1.3h-1.3z M305 337.4h2.3v2.3h-2.3z M299.3 340.6h1.9v1.9h-1.9z M301.6 400.9h2.7v2.7h-2.7z M269.1 419.1h2.8v2.8h-2.8z M273.1 373.1h1.8v1.8h-1.8z M233.7 361.9h1.6v1.6h-1.6z M223.9 327.3h1.9v1.9h-1.9z M323.3 381.9h2v2h-2z M233.1 413.9h1.2v1.2h-1.2z M326.6 399.4h2.3v2.3h-2.3z M252.5 414.3h2v2h-2z M298.4 348.6h1.9v1.9h-1.9z M244.9 341.8h2v2h-2z M270.3 348.9h1v1h-1z M258.7 389.8h1.2v1.2h-1.2z M269.1 379.7h1.8v1.8h-1.8z M223.3 397.7h2v2h-2z M322.4 408.6h2.7v2.7h-2.7z M224.8 381.8h2.7v2.7h-2.7z M254.5 412.8h1.5v1.5h-1.5z M273.1 389.1h2.5v2.5h-2.5z M305.8 324.3h2.2v2.2h-2.2z M309.7 347.8h1.5v1.5h-1.5z M331.5 413.3h2.2v2.2h-2.2z M308.2 415.5h1v1h-1z M325.1 397.6h1.6v1.6h-1.6z M226.5 379.5h1.9v1.9h-1.9z M304.5 397.2h2.7v2.7h-2.7z M247.7 333.2h1.3v1.3h-1.3z M299.9 413.1h2.1v2.1h-2.1z M232.2 371.2h2.2v2.2h-2.2z M255.6 362.1h2.5v2.5h-2.5z M245.1 344h1.1v1.1h-1.1z M225.9 369.1h1.1v1.1h-1.1z M252.2 400.1h2.8v2.8h-2.8z M302.8 322.7h2.5v2.5h-2.5z M317 352.8h2.1v2.1h-2.1z M283.4 340.8h1.5v1.5h-1.5z M253.8 415.9h1.8v1.8h-1.8z M322.1 419.3h1.3v1.3h-1.3z M283 397.7h2.1v2.1h-2.1z M244.4 394.7h2.3v2.3h-2.3z M267.2 328.8h1.1v1.1h-1.1z M237.8 342.5h2.5v2.5h-2.5z M310.9 342.7h2.5v2.5h-2.5z M289.2 389.7h2v2h-2z M295.1 361.8h1.8v1.8h-1.8z M324.3 405.3h1.8v1.8h-1.8z M327 376.4h2.5v2.5h-2.5z M222.4 342.6h1.6v1.6h-1.6z M280.1 398.9h1.2v1.2h-1.2z M267.2 331.8h2.1v2.1h-2.1z M222.1 373h1.6v1.6h-1.6z M260.7 389.9h1.8v1.8h-1.8z M242 350.7h1.6v1.6h-1.6z M305.6 343.2h2.8v2.8h-2.8z M287.2 408h1.8v1.8h-1.8z M269.8 384.2h2.7v2.7h-2.7z M315.5 351.5h1.2v1.2h-1.2z M248.8 320.3h2.6v2.6h-2.6z M332.8 407.6h2.8v2.8h-2.8z M276.6 382.5h2.7v2.7h-2.7z M276 417.9h1.7v1.7h-1.7z M268.4 326.8h1.6v1.6h-1.6z M232.9 411.9h1.4v1.4h-1.4z M282.2 361h2.2v2.2h-2.2z M290 353h1.1v1.1h-1.1z M234.9 324.8h1.2v1.2h-1.2z M245.6 345.2h2.4v2.4h-2.4z M303 351.9h2v2h-2z M224.4 391.9h2.6v2.6h-2.6z M240.9 384h1.6v1.6h-1.6z M301 334.8h2.5v2.5h-2.5z M301.1 415.2h1.8v1.8h-1.8z M266.6 346.6h1.8v1.8h-1.8z M241.7 395.1h2.7v2.7h-2.7z M308 364.2h2v2h-2z M292.1 355.3h1.9v1.9h-1.9z M315.1 357.5h1.1v1.1h-1.1z M289.6 338.1h1.9v1.9h-1.9z M284.2 325.1h2.5v2.5h-2.5z M252.4 417.2h1.1v1.1h-1.1z M245.5 374.2h2v2h-2z M221.5 376.7h2.3v2.3h-2.3z M285.8 350.9h1.6v1.6h-1.6z M228.4 349.8h1.5v1.5h-1.5z" fill="#f8c850" opacity="0.5"/>
</g>
</svg></div>
<svg class="frame" width="336" height="505" viewBox="0 0 336 505"><rect x="0.5" y="0.5" width="335" height="504" fill="none" stroke="#fff" stroke-width="1"/><rect x="0.5" y="0.5" width="335" height="504" fill="none" stroke="#000" stroke-width="1" stroke-dasharray="4 4"/></svg>
<div class="h" style="left:335px;top:109px"></div><div class="h" style="left:503px;top:109px"></div><div class="h" style="left:670px;top:109px"></div>
<div class="h" style="left:335px;top:361px"></div><div class="h" style="left:670px;top:361px"></div>
<div class="h" style="left:335px;top:613px"></div><div class="h" style="left:503px;top:613px"></div><div class="h" style="left:670px;top:613px"></div>
<!--/PHOTO-->
</body></html>
